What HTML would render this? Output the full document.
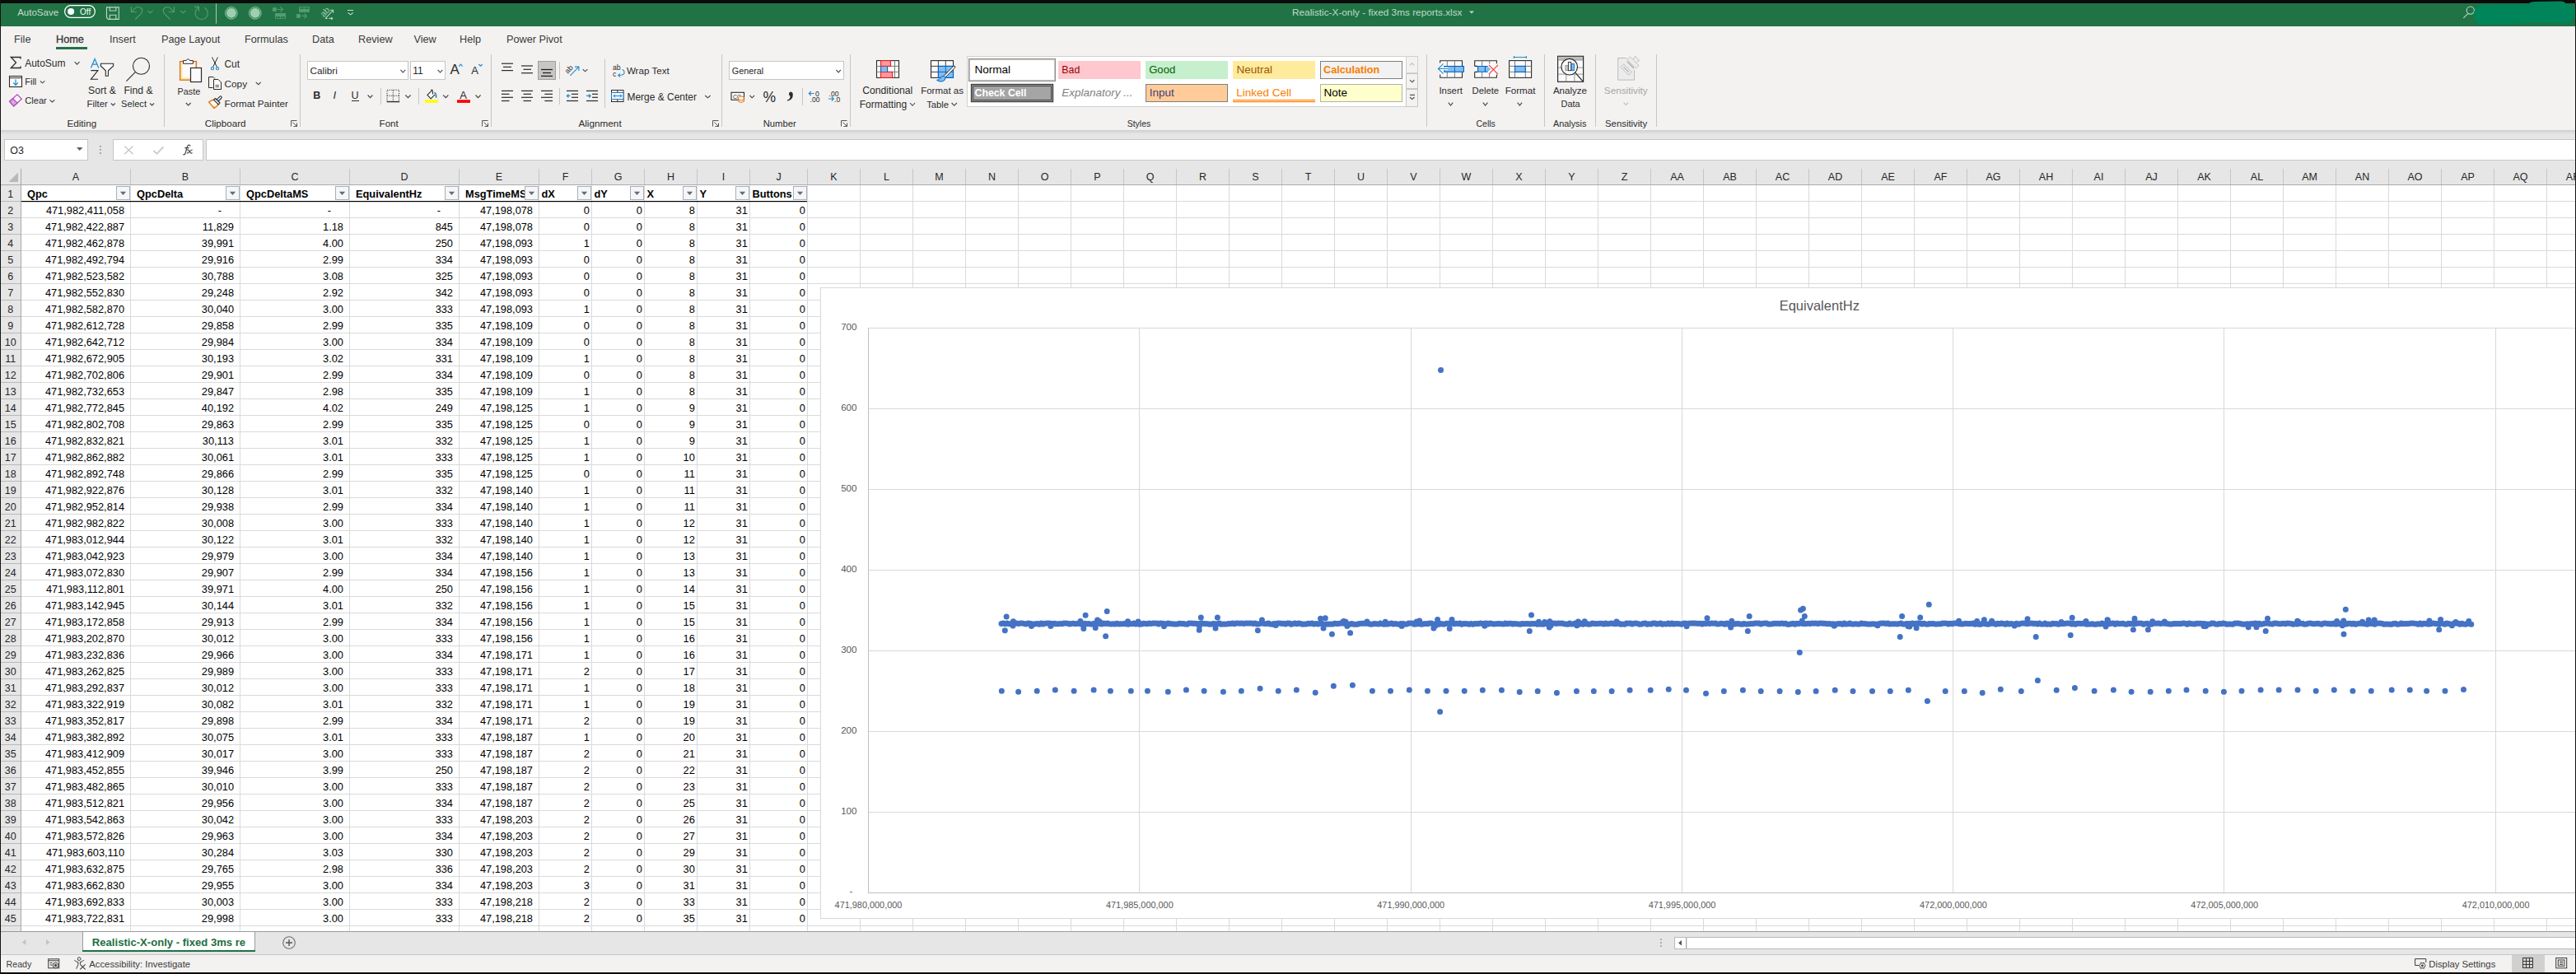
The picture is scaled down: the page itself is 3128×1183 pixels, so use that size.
<!DOCTYPE html>
<html><head><meta charset="utf-8"><style>
html,body{margin:0;padding:0;background:#fff;overflow:hidden;}
body{width:3128px;height:1183px;position:relative;}
svg{position:absolute;left:0;top:0;display:block;}
text{font-family:"Liberation Sans",sans-serif;white-space:pre;}
</style></head><body>
<svg width="3128" height="1183" viewBox="0 0 3128 1183" shape-rendering="auto">
<rect x="0" y="0" width="3128" height="1183" fill="#f3f2f1" />
<rect x="0" y="0" width="3128" height="32" fill="#217346" />
<rect x="0" y="0" width="3128" height="4" fill="#0a0a0a" />
<text x="21.2" y="18.7" font-size="11.5" fill="#c3dccb" text-anchor="start" font-weight="normal" font-style="normal" >AutoSave</text>
<rect x="78.6" y="6.6" width="36.8" height="14.8" rx="7.4" fill="none" stroke="#ffffff" stroke-width="1.2"/>
<circle cx="86.1" cy="14" r="4" fill="#ffffff"/>
<text x="97" y="18" font-size="10" fill="#ffffff" text-anchor="start" font-weight="normal" font-style="normal" >Off</text>
<path d="M129.5 8.9H144.3V23.4H131.5L129.5 21.4Z" fill="none" stroke="#bfd8c8" stroke-width="1.1"/><path d="M133.3 9V13H140.8V9 M133.3 23.3V18.3H140.8V23.3" fill="none" stroke="#bfd8c8" stroke-width="1.1"/>
<path d="M159.4 8.1V14.5H165.9" fill="none" stroke="#549d71" stroke-width="1.1"/><path d="M160.2 13.6L164.5 9.6Q167 7.9 170 9Q173 10.5 172.6 13.5Q172.3 15.5 170.5 17.3L164.3 23.5" fill="none" stroke="#549d71" stroke-width="1.1"/>
<path d="M179.3 13L182.4 15.7L185.4 13" fill="none" stroke="#549d71" stroke-width="1.1"/>
<g transform="translate(370.9 0) scale(-1 1)"><path d="M159.4 8.1V14.5H165.9" fill="none" stroke="#549d71" stroke-width="1.1"/><path d="M160.2 13.6L164.5 9.6Q167 7.9 170 9Q173 10.5 172.6 13.5Q172.3 15.5 170.5 17.3L164.3 23.5" fill="none" stroke="#549d71" stroke-width="1.1"/></g>
<path d="M219.2 13L222.3 15.7L225.3 13" fill="none" stroke="#549d71" stroke-width="1.1"/>
<path d="M236 8.4H241.5V13.7" fill="none" stroke="#549d71" stroke-width="1.1"/><path d="M241.2 9.2A7.6 7.6 0 1 0 248.3 9.3" fill="none" stroke="#549d71" stroke-width="1.1"/>
<rect x="262" y="4.3" width="1" height="24.3" fill="#a9cbb6" />
<circle cx="280.9" cy="15.8" r="7.3" fill="none" stroke="#a9d2b8" stroke-width="0.9"/><circle cx="280.9" cy="15.8" r="6" fill="#9ecfb0"/>
<circle cx="309.8" cy="15.8" r="7.3" fill="none" stroke="#a9d2b8" stroke-width="0.9"/><circle cx="309.8" cy="15.8" r="6" fill="#9ecfb0"/>
<rect x="331" y="9.1" width="4.9" height="4.8" fill="#529c6f"/><path d="M337.2 11.5H343.4 M340.4 8.3L343.6 11.5L340.4 14.7" fill="none" stroke="#529c6f" stroke-width="1.1"/><rect x="334" y="16" width="13" height="6.8" fill="#529c6f"/><rect x="335" y="20.2" width="5" height="1.7" fill="#217346"/><rect x="341" y="20.2" width="4.9" height="1.7" fill="#217346"/>
<rect x="363" y="8.1" width="12.8" height="6.8" fill="#529c6f"/><rect x="364.1" y="9.1" width="4.7" height="1.7" fill="#217346"/><rect x="369.8" y="9.1" width="4.9" height="1.7" fill="#217346"/><rect x="360" y="17" width="4.9" height="4.9" fill="#529c6f"/><path d="M366.2 19.4H372.4 M369.2 16.3L372.5 19.4L369.2 22.6" fill="none" stroke="#529c6f" stroke-width="1.1"/>
<text x="388.5" y="19.5" font-size="10.5" fill="#9fcdb0" text-anchor="start" font-weight="normal" font-style="normal" transform="rotate(-48 393 15)">ab</text>
<path d="M395.2 22.4L404.4 12.3 M401 12.3H404.6V15.7 M394.8 22.4H397.5 M399.3 22.4H403.6 M402.2 21L403.8 22.4L402.2 23.8" fill="none" stroke="#a9d3b9" stroke-width="1.1"/>
<path d="M421.9 12.5H429 M422.6 15.3L425.7 17.9L428.8 15.3" fill="none" stroke="#c5e0cf" stroke-width="1.1"/>
<text x="1569" y="19" font-size="11.8" fill="#bddcc8" text-anchor="start" font-weight="normal" font-style="normal" >Realistic-X-only - fixed 3ms reports.xlsx</text>
<path d="M1784 13.5h6l-3 3z" fill="#bddcc8"/>
<g fill="none" stroke="#bcd9c6" stroke-width="1.1"><circle cx="2999.8" cy="12.6" r="4.6"/><path d="M2996.7 16.6L2991.3 21.8"/></g>
<path d="M3004 17.5Q3004 5.7 3016 5.7L3070 5.2Q3072 2 3078 2L3110 1.6Q3114 2 3116 4.2Q3127 5.2 3127 17Q3127 28 3114 28.2Q3105 28.5 3098 27.6Q3080 27 3060 28.5L3016 29.8Q3004 29.8 3004 17.5Z" fill="#00845a"/>
<text x="17" y="51.8" font-size="12.7" fill="#3a3a3a" text-anchor="start" font-weight="normal" font-style="normal" >File</text>
<text x="68" y="51.8" font-size="12.7" fill="#333" text-anchor="start" font-weight="normal" font-style="normal" stroke="#333" stroke-width="0.3">Home</text>
<text x="133" y="51.8" font-size="12.7" fill="#3a3a3a" text-anchor="start" font-weight="normal" font-style="normal" >Insert</text>
<text x="196" y="51.8" font-size="12.7" fill="#3a3a3a" text-anchor="start" font-weight="normal" font-style="normal" >Page Layout</text>
<text x="297" y="51.8" font-size="12.7" fill="#3a3a3a" text-anchor="start" font-weight="normal" font-style="normal" >Formulas</text>
<text x="379" y="51.8" font-size="12.7" fill="#3a3a3a" text-anchor="start" font-weight="normal" font-style="normal" >Data</text>
<text x="435" y="51.8" font-size="12.7" fill="#3a3a3a" text-anchor="start" font-weight="normal" font-style="normal" >Review</text>
<text x="502.5" y="51.8" font-size="12.7" fill="#3a3a3a" text-anchor="start" font-weight="normal" font-style="normal" >View</text>
<text x="558" y="51.8" font-size="12.7" fill="#3a3a3a" text-anchor="start" font-weight="normal" font-style="normal" >Help</text>
<text x="615" y="51.8" font-size="12.7" fill="#3a3a3a" text-anchor="start" font-weight="normal" font-style="normal" >Power Pivot</text>
<rect x="68" y="57" width="38" height="3" fill="#217346" />
<rect x="0" y="0" width="1" height="1183" fill="#3c3c3c" />
<rect x="3127" y="0" width="1" height="1183" fill="#3c3c3c" />
<path d="M25 71.5V69.5H13.3L19.5 76L13.3 82.5H25V80.5" fill="none" stroke="#2b2b2b" stroke-width="1.3"/>
<text x="30.2" y="81" font-size="11.99" fill="#2b2b2b" text-anchor="start" font-weight="normal" font-style="normal" >AutoSum</text>
<path d="M90.7 75.2L93.6 78.2L96.5 75.2" fill="none" stroke="#444" stroke-width="1.1"/>
<rect x="11.5" y="92.5" width="15" height="13" fill="#fafafa" stroke="#2b2b2b" stroke-width="1.1"/><path d="M12 94.7H26" stroke="#2b2b2b" stroke-width="1"/>
<path d="M19 96.5V103 M16.3 100.5L19 103.3L21.7 100.5" fill="none" stroke="#1e8bcd" stroke-width="1.2"/>
<text x="30.2" y="103.4" font-size="11.04" fill="#2b2b2b" text-anchor="start" font-weight="normal" font-style="normal" >Fill</text>
<path d="M48.8 98.3L51.55 100.8L54.3 98.3" fill="none" stroke="#444" stroke-width="1.1"/>
<path d="M11.6 123.3L20.9 114.9L26.3 120.2L16.7 128.8Z" fill="#fbfbfb" stroke="#b146c2" stroke-width="1.2"/><path d="M11.6 123.3L15.6 119.7L21 125.2L16.7 128.8Z" fill="#d9a6e0" stroke="#b146c2" stroke-width="1.2"/>
<text x="30.2" y="126.4" font-size="11.13" fill="#2b2b2b" text-anchor="start" font-weight="normal" font-style="normal" >Clear</text>
<path d="M60.4 121.4L63.400000000000006 124L66.4 121.4" fill="none" stroke="#444" stroke-width="1.1"/>
<path d="M110.4 82.4L115.1 71.6L119.8 82.4 M112.2 78.1H118" fill="none" stroke="#1e8bcd" stroke-width="1.25"/>
<path d="M110.3 85.6H118.9L110.4 96.3H119" fill="none" stroke="#2b2b2b" stroke-width="1.1"/>
<path d="M122.4 77.3H137.6V80.2L131.4 85.8V92.3H128.3V85.8L122.4 80.2Z" fill="#fbfbfb" stroke="#2b2b2b" stroke-width="1.1"/>
<text x="107.1" y="114.3" font-size="12.13" fill="#2b2b2b" text-anchor="start" font-weight="normal" font-style="normal" >Sort &amp;</text>
<text x="105.6" y="130.4" font-size="11.34" fill="#2b2b2b" text-anchor="start" font-weight="normal" font-style="normal" >Filter</text>
<path d="M134.8 125.5L137.3 128L139.8 125.5" fill="none" stroke="#444" stroke-width="1.1"/>
<circle cx="171.5" cy="80.3" r="10" fill="none" stroke="#2b2b2b" stroke-width="1.1"/><path d="M164.3 87.7L153.4 98.7" stroke="#2b2b2b" stroke-width="1.1"/>
<text x="150.4" y="114.3" font-size="12.18" fill="#2b2b2b" text-anchor="start" font-weight="normal" font-style="normal" >Find &amp;</text>
<text x="147.1" y="130.4" font-size="11.12" fill="#2b2b2b" text-anchor="start" font-weight="normal" font-style="normal" >Select</text>
<path d="M182 125.5L184.55 128L187.1 125.5" fill="none" stroke="#444" stroke-width="1.1"/>
<text x="81.5" y="153.5" font-size="11.68" fill="#2b2b2b" text-anchor="start" font-weight="normal" font-style="normal" >Editing</text>
<rect x="199" y="66" width="1" height="88" fill="#c8c6c4" />
<rect x="218.6" y="74.6" width="19.8" height="22.6" fill="#fbe3a6" stroke="#d9730d" stroke-width="1.3"/><rect x="221.3" y="76.2" width="15.3" height="18.3" fill="#fbfbfb"/>
<path d="M222.5 77.3V73.6H226.3Q228.4 69.5 230.5 73.6H234.4V77.3Z" fill="#fbfbfb" stroke="#2b2b2b" stroke-width="1"/>
<rect x="231.5" y="82.5" width="13" height="17" fill="#fbfbfb" stroke="#2b2b2b" stroke-width="1.2"/>
<text x="215.6" y="114.5" font-size="10.83" fill="#2b2b2b" text-anchor="start" font-weight="normal" font-style="normal" >Paste</text>
<path d="M225.8 125L228.7 128L231.6 125" fill="none" stroke="#444" stroke-width="1.1"/>
<path d="M257.5 69.5L263.5 81.5 M264.5 69.5L258.5 81.5" stroke="#2b2b2b" stroke-width="1"/><circle cx="258" cy="83.2" r="1.6" fill="none" stroke="#1e8bcd" stroke-width="1.1"/><circle cx="264" cy="83.2" r="1.6" fill="none" stroke="#1e8bcd" stroke-width="1.1"/>
<text x="272.5" y="81.6" font-size="11.95" fill="#2b2b2b" text-anchor="start" font-weight="normal" font-style="normal" >Cut</text>
<path d="M258.5 106.5H253.5V93.5H259L261 95.5" fill="none" stroke="#2b2b2b" stroke-width="1"/><path d="M259.5 96.5H265L268.5 100V108.5H259.5Z" fill="#fbfbfb" stroke="#2b2b2b" stroke-width="1"/><path d="M261.5 103.5H266 M261.5 105.5H266" stroke="#2b2b2b" stroke-width="0.8"/>
<text x="272.5" y="105.8" font-size="11.82" fill="#2b2b2b" text-anchor="start" font-weight="normal" font-style="normal" >Copy</text>
<path d="M310.7 99.8L313.7 102.7L316.7 99.8" fill="none" stroke="#444" stroke-width="1.1"/>
<path d="M253.6 124Q257 121.6 259.9 121L265.5 126.8Q263 129.4 260.1 131.5Z" fill="#ffffff" stroke="#e3700f" stroke-width="1.3" stroke-linejoin="round"/><path d="M256.9 127.2L261.6 128.7L259.9 130.3Z" fill="#f6d57a"/>
<path d="M262.9 121.4L266.8 117.4Q268 116.3 268.9 117.3Q269.6 118.4 268.5 119.5L264.5 123.5" fill="#ffffff" stroke="#2b2b2b" stroke-width="1.1"/><path d="M259.7 121.3L261.5 119.5L267 125L265.2 126.8Z" fill="#ffffff" stroke="#2b2b2b" stroke-width="1.1" stroke-linejoin="round"/>
<text x="272.5" y="129.6" font-size="11.7" fill="#2b2b2b" text-anchor="start" font-weight="normal" font-style="normal" >Format Painter</text>
<text x="248.8" y="153.5" font-size="11.63" fill="#2b2b2b" text-anchor="start" font-weight="normal" font-style="normal" >Clipboard</text>
<path d="M353.5 153.5V146.5H360.5 M355.5 148.5L360.5 153.5 M360.5 149.5V153.5H356.5" fill="none" stroke="#555" stroke-width="1"/>
<rect x="364" y="66" width="1" height="88" fill="#c8c6c4" />
<rect x="373.5" y="74.5" width="122" height="22" fill="#fff" stroke="#c8c6c4"/>
<text x="376.6" y="89.7" font-size="11.71" fill="#262626" text-anchor="start" font-weight="normal" font-style="normal" >Calibri</text>
<path d="M486.4 84.8L489.29999999999995 88L492.2 84.8" fill="none" stroke="#444" stroke-width="1.1"/>
<rect x="498.5" y="74.5" width="42" height="22" fill="#fff" stroke="#c8c6c4"/>
<text x="501.3" y="89.7" font-size="12" fill="#262626" text-anchor="start" font-weight="normal" font-style="normal" >11</text>
<path d="M531.6 84.8L534.5 88L537.4 84.8" fill="none" stroke="#444" stroke-width="1.1"/>
<text x="546.5" y="89.7" font-size="17" fill="#2b2b2b" text-anchor="start" font-weight="normal" font-style="normal" >A</text>
<path d="M557.2 80.6L559.45 78.1L561.7 80.6" fill="none" stroke="#1e8bcd" stroke-width="1.1"/>
<text x="572.3" y="89.7" font-size="13" fill="#2b2b2b" text-anchor="start" font-weight="normal" font-style="normal" >A</text>
<path d="M581.3 78L583.55 80.2L585.8 78" fill="none" stroke="#1e8bcd" stroke-width="1.1"/>
<text x="380.3" y="120.4" font-size="12.5" fill="#2b2b2b" text-anchor="start" font-weight="bold" font-style="normal" >B</text>
<text x="404.5" y="120.4" font-size="13" fill="#2b2b2b" text-anchor="start" font-weight="normal" font-style="italic" font-family="Liberation Serif">I</text>
<text x="426.5" y="120.4" font-size="12.5" fill="#2b2b2b" text-anchor="start" font-weight="normal" font-style="normal" >U</text>
<rect x="427" y="122" width="9" height="1" fill="#2b2b2b" />
<path d="M446.6 115.5L449.5 118.6L452.4 115.5" fill="none" stroke="#444" stroke-width="1.1"/>
<rect x="462" y="107" width="1" height="20" fill="#c8c6c4" />
<rect x="470" y="109.3" width="14.5" height="14" fill="none" stroke="#2b2b2b" stroke-width="0.9" stroke-dasharray="1.3 1.3"/><path d="M477.3 109.5V123 M470 116.3H484.5" stroke="#2b2b2b" stroke-width="0.9" stroke-dasharray="1.3 1.3"/><path d="M469.6 123.6H485.2" stroke="#2b2b2b" stroke-width="1.3"/>
<path d="M492.4 115.5L495.5 118.6L498.6 115.5" fill="none" stroke="#444" stroke-width="1.1"/>
<rect x="508" y="107" width="1" height="20" fill="#c8c6c4" />
<path d="M525.4 114.5V110.6Q525.2 109 524.3 109.1Q523.5 109.3 523.5 110.8L518.9 115.4L523.2 119.8L528 114.8" fill="#fbfbfb" stroke="#2b2b2b" stroke-width="1.1" stroke-linejoin="round"/><path d="M527.8 112.6Q529.8 113.6 529.6 118.3" fill="none" stroke="#1e78c8" stroke-width="1.5" stroke-linecap="round"/>
<rect x="516" y="121.2" width="16" height="3.7" fill="#ffff00" />
<path d="M538.2 115.5L541.3 118.6L544.4 115.5" fill="none" stroke="#444" stroke-width="1.1"/>
<text x="558.2" y="120.4" font-size="13" fill="#2b2b2b" text-anchor="start" font-weight="normal" font-style="normal" >A</text>
<rect x="555" y="121.2" width="16" height="3.7" fill="#ff0000" />
<path d="M577.5 115.5L580.55 118.6L583.6 115.5" fill="none" stroke="#444" stroke-width="1.1"/>
<text x="460.6" y="153.5" font-size="11.54" fill="#2b2b2b" text-anchor="start" font-weight="normal" font-style="normal" >Font</text>
<path d="M585.5 153.5V146.5H592.5 M587.5 148.5L592.5 153.5 M592.5 149.5V153.5H588.5" fill="none" stroke="#555" stroke-width="1"/>
<rect x="596" y="66" width="1" height="88" fill="#c8c6c4" />
<rect x="609" y="76.60000000000001" width="14" height="1.2" fill="#2b2b2b" />
<rect x="611" y="80.80000000000001" width="10" height="1.2" fill="#2b2b2b" />
<rect x="609" y="85.0" width="14" height="1.2" fill="#2b2b2b" />
<rect x="633" y="79.4" width="14" height="1.2" fill="#2b2b2b" />
<rect x="635.5" y="83.7" width="9.5" height="1.2" fill="#2b2b2b" />
<rect x="633" y="88.10000000000001" width="14" height="1.2" fill="#2b2b2b" />
<rect x="653.5" y="74.5" width="21" height="22" fill="#c8c6c4" stroke="#a19f9d"/>
<rect x="657" y="83.9" width="14" height="1.2" fill="#1b1b1b" />
<rect x="659" y="87.9" width="10" height="1.2" fill="#1b1b1b" />
<rect x="657" y="91.80000000000001" width="14" height="1.2" fill="#1b1b1b" />
<rect x="679" y="75" width="1" height="21" fill="#c8c6c4" />
<text x="686" y="88" font-size="9" fill="#2b2b2b" text-anchor="start" font-weight="normal" font-style="normal" transform="rotate(-48 690 85)">ab</text>
<path d="M692.3 91.8L702.9 81.1 M698 81.1H702.9V86" fill="none" stroke="#1e8bcd" stroke-width="1.1"/>
<path d="M707.7 84.2L710.55 86.8L713.4 84.2" fill="none" stroke="#444" stroke-width="1.1"/>
<rect x="609" y="109.80000000000001" width="14" height="1.2" fill="#2b2b2b" />
<rect x="609" y="113.7" width="9.5" height="1.2" fill="#2b2b2b" />
<rect x="609" y="117.7" width="14" height="1.2" fill="#2b2b2b" />
<rect x="609" y="121.9" width="9.5" height="1.2" fill="#2b2b2b" />
<rect x="633" y="109.80000000000001" width="14" height="1.2" fill="#2b2b2b" />
<rect x="635.5" y="113.7" width="9.5" height="1.2" fill="#2b2b2b" />
<rect x="633" y="117.7" width="14" height="1.2" fill="#2b2b2b" />
<rect x="635.5" y="121.9" width="9.5" height="1.2" fill="#2b2b2b" />
<rect x="657" y="109.80000000000001" width="14" height="1.2" fill="#2b2b2b" />
<rect x="661.3" y="113.7" width="9.700000000000045" height="1.2" fill="#2b2b2b" />
<rect x="657" y="117.7" width="14" height="1.2" fill="#2b2b2b" />
<rect x="661.3" y="121.9" width="9.700000000000045" height="1.2" fill="#2b2b2b" />
<rect x="679" y="107" width="1" height="20" fill="#c8c6c4" />
<rect x="688" y="109.80000000000001" width="14" height="1.2" fill="#2b2b2b" />
<rect x="688" y="121.9" width="14" height="1.2" fill="#2b2b2b" />
<rect x="694" y="113.7" width="8" height="1.2" fill="#2b2b2b" />
<rect x="694" y="117.7" width="8" height="1.2" fill="#2b2b2b" />
<path d="M692.5 116.4H688.5 M690.5 114.3L688.3 116.4L690.5 118.5" fill="none" stroke="#1e8bcd" stroke-width="1.1"/>
<rect x="712" y="109.80000000000001" width="14" height="1.2" fill="#2b2b2b" />
<rect x="712" y="121.9" width="14" height="1.2" fill="#2b2b2b" />
<rect x="719" y="113.7" width="7" height="1.2" fill="#2b2b2b" />
<rect x="719" y="117.7" width="7" height="1.2" fill="#2b2b2b" />
<path d="M712 116.4H717 M715 114.3L717.2 116.4L715 118.5" fill="none" stroke="#1e8bcd" stroke-width="1.1"/>
<rect x="734" y="72" width="1" height="59" fill="#c8c6c4" />
<text x="744" y="85" font-size="8.7" fill="#2b2b2b" text-anchor="start" font-weight="normal" font-style="normal" >ab</text>
<text x="744" y="93" font-size="8.7" fill="#2b2b2b" text-anchor="start" font-weight="normal" font-style="normal" >c</text>
<path d="M755.5 84.5Q758.8 85.5 757.8 89.5Q756.5 91.5 751 91.5 M753 89.3L750.7 91.5L753 93.7" fill="none" stroke="#1e8bcd" stroke-width="1.1"/>
<text x="760.9" y="89.6" font-size="11.6" fill="#2b2b2b" text-anchor="start" font-weight="normal" font-style="normal" >Wrap Text</text>
<rect x="742.5" y="109.5" width="14.5" height="14" fill="#fbfbfb" stroke="#2b2b2b" stroke-width="1"/><path d="M749.8 109.5V123.5" stroke="#2b2b2b" stroke-width="1"/><rect x="742.5" y="112.5" width="14.5" height="8" fill="#fbfbfb" stroke="#1e78c8" stroke-width="1"/><path d="M745 116.5H755 M747 114.5L745 116.5L747 118.5 M753 114.5L755 116.5L753 118.5" fill="none" stroke="#1e78c8" stroke-width="1"/>
<text x="761.5" y="121.7" font-size="11.96" fill="#2b2b2b" text-anchor="start" font-weight="normal" font-style="normal" >Merge &amp; Center</text>
<path d="M856.2 116L859.4000000000001 118.8L862.6 116" fill="none" stroke="#444" stroke-width="1.1"/>
<text x="702.4" y="153.7" font-size="11.76" fill="#2b2b2b" text-anchor="start" font-weight="normal" font-style="normal" >Alignment</text>
<path d="M865.5 153.5V146.5H872.5 M867.5 148.5L872.5 153.5 M872.5 149.5V153.5H868.5" fill="none" stroke="#555" stroke-width="1"/>
<rect x="876" y="66" width="1" height="88" fill="#c8c6c4" />
<rect x="885.5" y="74.5" width="139" height="22" fill="#fff" stroke="#c8c6c4"/>
<text x="888.8" y="89.6" font-size="10.79" fill="#262626" text-anchor="start" font-weight="normal" font-style="normal" >General</text>
<path d="M1015.3 84.8L1018.0999999999999 87.9L1020.9 84.8" fill="none" stroke="#444" stroke-width="1.1"/>
<rect x="888" y="112.3" width="15.5" height="9" fill="#fbfbfb" stroke="#2b2b2b" stroke-width="1.1"/><text x="890" y="120" font-size="7" fill="#2b2b2b">CC</text><ellipse cx="900" cy="118.5" rx="3.3" ry="1.5" fill="#fbfbfb" stroke="#e3700f"/><path d="M896.7 118.5V123.3Q900 125.5 903.3 123.3V118.5 M896.7 120.9Q900 123 903.3 120.9" fill="#fbfbfb" stroke="#e3700f"/>
<path d="M910.5 116L913.25 118.8L916 116" fill="none" stroke="#444" stroke-width="1.1"/>
<text x="926.6" y="123.7" font-size="17.5" fill="#2b2b2b" text-anchor="start" font-weight="normal" font-style="normal" >%</text>
<path d="M959.6 111.6A3.3 3.3 0 1 1 959.4 118.2Q960 116 958 115.2A3.3 3.3 0 0 1 959.6 111.6Z M962.6 115Q963.4 120.5 956.2 122.8L955.8 121.8Q960.2 119.8 959.6 116.5Z" fill="#2b2b2b"/>
<rect x="974" y="107" width="1" height="21" fill="#c8c6c4" />
<path d="M988.5 113.5H982.3 M984.8 111L982.3 113.5L984.8 116" fill="none" stroke="#1e8bcd" stroke-width="1.1"/><path d="M1006 120H1012.3 M1009.8 117.5L1012.3 120L1009.8 122.5" fill="none" stroke="#1e8bcd" stroke-width="1.1"/>
<text x="990" y="116.5" font-size="8.6" fill="#2b2b2b" text-anchor="start" font-weight="normal" font-style="normal" >0</text>
<text x="983.5" y="123.8" font-size="8.6" fill="#2b2b2b" text-anchor="start" font-weight="normal" font-style="normal" >.00</text>
<text x="1006.5" y="116.5" font-size="8.6" fill="#2b2b2b" text-anchor="start" font-weight="normal" font-style="normal" >.00</text>
<text x="1013" y="123.8" font-size="8.6" fill="#2b2b2b" text-anchor="start" font-weight="normal" font-style="normal" >.0</text>
<text x="926.7" y="153.7" font-size="11.27" fill="#2b2b2b" text-anchor="start" font-weight="normal" font-style="normal" >Number</text>
<path d="M1021.5 153.5V146.5H1028.5 M1023.5 148.5L1028.5 153.5 M1028.5 149.5V153.5H1024.5" fill="none" stroke="#555" stroke-width="1"/>
<rect x="1032" y="66" width="1" height="88" fill="#c8c6c4" />
<rect x="1064.5" y="73.6" width="27" height="20.8" fill="#fbfbfb" stroke="#2b2b2b" stroke-width="1.1"/><path d="M1086.5 73.6V94.4 M1064.5 80.4H1091.5 M1064.5 87.4H1091.5" stroke="#6e6e6e" stroke-width="0.9"/>
<rect x="1069.6" y="73.6" width="11.8" height="6.8" fill="#ff9aa2" stroke="#e0201b" stroke-width="1.1"/><rect x="1069.6" y="87.4" width="13.9" height="7" fill="#ff9aa2" stroke="#e0201b" stroke-width="1.1"/><rect x="1069.6" y="80.9" width="8" height="6" fill="#84bdee"/><path d="M1069.6 80.4V87.4 M1077.6 80.4V87.4" stroke="#0063c4" stroke-width="1.1"/>
<text x="1047.2" y="114.4" font-size="12.21" fill="#2b2b2b" text-anchor="start" font-weight="normal" font-style="normal" >Conditional</text>
<text x="1043.7" y="130.7" font-size="12.05" fill="#2b2b2b" text-anchor="start" font-weight="normal" font-style="normal" >Formatting</text>
<path d="M1105 125L1108.0 128.3L1111 125" fill="none" stroke="#444" stroke-width="1.1"/>
<rect x="1130.5" y="73.6" width="27" height="20.8" fill="#fbfbfb" stroke="#2b2b2b" stroke-width="1.1"/><path d="M1139.4 73.6V94.4 M1148.3 73.6V80.4 M1130.5 80.4H1139.4 M1130.5 87.4H1139.4" stroke="#2b2b2b" stroke-width="0.9"/>
<path d="M1139.4 80.4H1157.5V94.4H1139.4Z" fill="#84bdee" stroke="#0063c4" stroke-width="1.1"/><path d="M1148.3 80.4V94.4 M1139.4 87.4H1157.5" stroke="#0063c4" stroke-width="0.9"/>
<path d="M1146.2 92.2L1157.6 80.6Q1159.5 79.3 1160 81Q1159.8 82 1158.6 83.2L1147.8 94Z" fill="#ffffff" stroke="#2b2b2b" stroke-width="1"/><path d="M1146.4 92.4Q1143 92 1141.6 95Q1140.5 97 1137.6 97.4Q1141 99.8 1144.5 98.8Q1148 97.8 1148.2 94.2Z" fill="#84bdee" stroke="#0063c4" stroke-width="1"/>
<text x="1118.2" y="114.4" font-size="11.51" fill="#2b2b2b" text-anchor="start" font-weight="normal" font-style="normal" >Format as</text>
<text x="1125.2" y="130.7" font-size="11.21" fill="#2b2b2b" text-anchor="start" font-weight="normal" font-style="normal" >Table</text>
<path d="M1155.6 125L1158.6999999999998 128.3L1161.8 125" fill="none" stroke="#444" stroke-width="1.1"/>
<rect x="1174.5" y="68.5" width="533" height="61" fill="#fff" stroke="#d2d0ce"/>
<rect x="1176.5" y="71.5" width="105" height="27" fill="#fff" stroke="#8a8886" stroke-width="1"/><rect x="1177.5" y="72.5" width="103" height="25" fill="none" stroke="#c8c6c4" stroke-width="1.2"/>
<text x="1183.5" y="89" font-size="13.5" fill="#000" text-anchor="start" font-weight="normal" font-style="normal" >Normal</text>
<rect x="1285" y="74" width="100" height="22" fill="#ffc7ce" />
<text x="1289.3" y="89" font-size="12.36" fill="#9c0006" text-anchor="start" font-weight="normal" font-style="normal" >Bad</text>
<rect x="1391" y="74" width="100" height="22" fill="#c6efce" />
<text x="1395.2" y="89" font-size="13.08" fill="#006100" text-anchor="start" font-weight="normal" font-style="normal" >Good</text>
<rect x="1497" y="74" width="100" height="22" fill="#ffeb9c" />
<text x="1501.6" y="89" font-size="13.5" fill="#9c5700" text-anchor="start" font-weight="normal" font-style="normal" >Neutral</text>
<rect x="1603.5" y="74.5" width="99" height="21" fill="#f2f2f2" stroke="#7f7f7f"/>
<text x="1607" y="89" font-size="12.65" fill="#fa7d00" text-anchor="start" font-weight="bold" font-style="normal" >Calculation</text>
<rect x="1179.5" y="102.5" width="99" height="21" fill="#a5a5a5" stroke="#3f3f3f" stroke-width="1.4"/><rect x="1181.6" y="104.6" width="94.8" height="16.8" fill="none" stroke="#3f3f3f" stroke-width="0.9"/>
<text x="1183.5" y="116.6" font-size="12.32" fill="#ffffff" text-anchor="start" font-weight="bold" font-style="normal" >Check Cell</text>
<text x="1289.3" y="116.6" font-size="13.5" fill="#7f7f7f" text-anchor="start" font-weight="normal" font-style="italic" >Explanatory ...</text>
<rect x="1391.5" y="102.5" width="99" height="21" fill="#ffcc99" stroke="#7f7f7f"/>
<text x="1395.7" y="116.6" font-size="13.5" fill="#3f3f76" text-anchor="start" font-weight="normal" font-style="normal" >Input</text>
<text x="1501.2" y="116.6" font-size="13.5" fill="#fa7d00" text-anchor="start" font-weight="normal" font-style="normal" >Linked Cell</text>
<rect x="1497" y="121" width="100" height="1.2" fill="#ff8001" />
<rect x="1497" y="123" width="100" height="1.2" fill="#ff8001" />
<rect x="1603.5" y="102.5" width="99" height="21" fill="#ffffcc" stroke="#b2b2b2"/>
<text x="1607.6" y="116.6" font-size="13.5" fill="#000" text-anchor="start" font-weight="normal" font-style="normal" >Note</text>
<rect x="1707.5" y="68.5" width="14" height="20" fill="#f3f2f1" stroke="#d2d0ce"/><rect x="1707.5" y="89.5" width="14" height="18" fill="#f3f2f1" stroke="#c8c6c4"/><rect x="1707.5" y="108.5" width="14" height="21" fill="#f3f2f1" stroke="#c8c6c4"/>
<path d="M1712 79.3L1714.75 76.8L1717.5 79.3" fill="none" stroke="#c0c0c0" stroke-width="1.1"/>
<path d="M1712 97.2L1714.75 99.8L1717.5 97.2" fill="none" stroke="#444" stroke-width="1.1"/>
<rect x="1712" y="114.8" width="6" height="1.1" fill="#444" />
<path d="M1712 118L1714.75 120.6L1717.5 118" fill="none" stroke="#444" stroke-width="1.1"/>
<text x="1368.7" y="153.7" font-size="10.5" fill="#2b2b2b" text-anchor="start" font-weight="normal" font-style="normal" >Styles</text>
<rect x="1732" y="66" width="1" height="88" fill="#c8c6c4" />
<rect x="1748.6" y="73.6" width="27" height="20.8" fill="#fbfbfb"/><path d="M1748.7 76.5V73.7H1775.5V94.3H1748.7V90.5" fill="none" stroke="#2b2b2b" stroke-width="1.1"/><path d="M1757.3 73.7V94.3 M1766.4 73.7V94.3" stroke="#6e6e6e" stroke-width="0.9"/>
<rect x="1753.8" y="80.5" width="23.6" height="6.8" fill="#84bdee" stroke="#0063c4" stroke-width="1.1"/><path d="M1766.4 80.5V87.3" stroke="#0063c4" stroke-width="0.9"/><rect x="1749" y="81.8" width="9.5" height="3.4" fill="#fbfbfb"/>
<path d="M1758.8 83.5H1746.6 M1752.6 77.3L1746.4 83.5L1752.6 89.7" fill="none" stroke="#1e8bcd" stroke-width="1.1"/>
<text x="1747.4" y="114.3" font-size="11.4" fill="#2b2b2b" text-anchor="start" font-weight="normal" font-style="normal" >Insert</text>
<path d="M1758.8 124.7L1761.5 128.2L1764.2 124.7" fill="none" stroke="#444" stroke-width="1.1"/>
<rect x="1790.6" y="73.6" width="27" height="20.8" fill="#fbfbfb"/><path d="M1790.7 80.4V73.7H1817.4V77.3 M1817.4 90.4V94.3H1790.7V87.4 M1790.7 80.4H1794.3 M1790.7 87.4H1794.3" fill="none" stroke="#2b2b2b" stroke-width="1.1"/><path d="M1799.6 73.7V80.4 M1799.6 87.4V94.3 M1808.7 73.7V77.5 M1808.7 90V94.3" stroke="#6e6e6e" stroke-width="0.9"/>
<path d="M1794.6 80.5H1806.2L1810.6 83.9L1806.2 87.3H1794.6Z" fill="#84bdee"/><path d="M1806.6 80.5H1794.6V87.3H1806.6 M1803.4 80.5V87.3" fill="none" stroke="#0063c4" stroke-width="1.1"/><path d="M1807.9 79L1818.9 90 M1818.9 79L1807.9 90" stroke="#f04848" stroke-width="1.1"/>
<text x="1787.6" y="114.3" font-size="11.24" fill="#2b2b2b" text-anchor="start" font-weight="normal" font-style="normal" >Delete</text>
<path d="M1800.8 124.7L1803.6 128.2L1806.4 124.7" fill="none" stroke="#444" stroke-width="1.1"/>
<rect x="1832.6" y="73.6" width="27" height="20.8" fill="#fbfbfb" stroke="#2b2b2b" stroke-width="1.1"/><path d="M1839.5 73.7V94.3 M1852.3 73.7V94.3 M1832.6 80.4H1859.6 M1832.6 87.4H1859.6" stroke="#6e6e6e" stroke-width="0.9"/>
<rect x="1839.5" y="80.4" width="12.8" height="7" fill="#84bdee" stroke="#0063c4" stroke-width="1.1"/><path d="M1838.4 69.5H1853.4 M1838.4 68V71 M1853.4 68V71" stroke="#1e8bcd" stroke-width="1.1"/>
<text x="1827.7" y="114.3" font-size="11.62" fill="#2b2b2b" text-anchor="start" font-weight="normal" font-style="normal" >Format</text>
<path d="M1842.7 124.7L1845.4 128.2L1848.1 124.7" fill="none" stroke="#444" stroke-width="1.1"/>
<text x="1792.5" y="153.7" font-size="10.5" fill="#2b2b2b" text-anchor="start" font-weight="normal" font-style="normal" >Cells</text>
<rect x="1875" y="66" width="1" height="88" fill="#c8c6c4" />
<rect x="1891.6" y="68.3" width="31" height="31" fill="#fbfbfb" stroke="#2b2b2b" stroke-width="1.2"/><rect x="1892.2" y="68.9" width="29.8" height="3.9" fill="#bdbdbd"/>
<path d="M1892.2 73H1922 M1892.2 82.1H1922 M1892.2 90.1H1922 M1901.8 90.1V99 M1911.9 90.1V99" stroke="#8a8a8a" stroke-width="0.9"/>
<circle cx="1905.7" cy="81.2" r="9.8" fill="#fbfbfb" stroke="#2b2b2b" stroke-width="1.2"/><path d="M1912.7 88.2L1922.4 99.2" stroke="#2b2b2b" stroke-width="1.25"/>
<rect x="1900.9" y="79.4" width="3.3" height="6.3" fill="#c8c8c8" stroke="#8a8a8a" stroke-width="0.8"/><rect x="1904.4" y="75.4" width="3.3" height="10.3" fill="#ffffff" stroke="#2b2b2b" stroke-width="0.9"/><rect x="1908.2" y="77.4" width="3.3" height="8.3" fill="#84bdee" stroke="#0063c4" stroke-width="0.8"/>
<text x="1885.9" y="114.3" font-size="11.55" fill="#2b2b2b" text-anchor="start" font-weight="normal" font-style="normal" >Analyze</text>
<text x="1895.5" y="130.1" font-size="10.94" fill="#2b2b2b" text-anchor="start" font-weight="normal" font-style="normal" >Data</text>
<text x="1885.9" y="153.7" font-size="10.88" fill="#2b2b2b" text-anchor="start" font-weight="normal" font-style="normal" >Analysis</text>
<rect x="1937" y="66" width="1" height="88" fill="#c8c6c4" />
<rect x="1964.4" y="70.5" width="20.2" height="26.8" fill="#ececec" stroke="none"/><path d="M1975 70.5H1964.7V97.1H1984.5V85" fill="none" stroke="#b4b4b4" stroke-width="0.9"/>
<path d="M1967.9 81.5L1971.6 77.8L1981.5 87.5L1977.6 91.4Z" fill="#ececec" stroke="#b4b4b4" stroke-width="0.8"/><path d="M1971.3 81.2L1978 87.8" stroke="#b4b4b4" stroke-width="1.2"/>
<path d="M1975.7 72.5L1979.4 69L1990.1 79.4L1986.4 82.9Z" fill="#ececec" stroke="#b4b4b4" stroke-width="0.8"/><path d="M1975.8 74.7L1983.9 82.9" stroke="#b4b4b4" stroke-width="1.6"/><path d="M1983.3 72.1L1985.6 68.2L1990.7 73.5L1987.4 75.5" fill="#ececec" stroke="#b4b4b4" stroke-width="0.8"/>
<text x="1947.8" y="114.3" font-size="11.75" fill="#a6a6a6" text-anchor="start" font-weight="normal" font-style="normal" >Sensitivity</text>
<path d="M1971.6 124.7L1974.3 127.5L1977 124.7" fill="none" stroke="#bdbdbd" stroke-width="1.1"/>
<text x="1949" y="153.7" font-size="11.37" fill="#2b2b2b" text-anchor="start" font-weight="normal" font-style="normal" >Sensitivity</text>
<rect x="2011" y="66" width="1" height="88" fill="#c8c6c4" />
<rect x="0" y="158" width="3128" height="47" fill="#e6e6e6" />
<defs><linearGradient id="shd" x1="0" y1="0" x2="0" y2="1"><stop offset="0" stop-color="#cfcfcf"/><stop offset="1" stop-color="#e6e6e6"/></linearGradient></defs>
<rect x="0" y="158" width="3128" height="5" fill="url(#shd)" />
<rect x="5.5" y="169.5" width="101" height="25" fill="#fff" stroke="#c8c6c4"/>
<text x="12.3" y="187" font-size="12.4" fill="#262626" text-anchor="start" font-weight="normal" font-style="normal" >O3</text>
<path d="M93 179h7.5l-3.75 4z" fill="#605e5c"/>
<rect x="121" y="176.9" width="1.8" height="1.8" fill="#9a9a9a"/>
<rect x="121" y="181.0" width="1.8" height="1.8" fill="#9a9a9a"/>
<rect x="121" y="185.1" width="1.8" height="1.8" fill="#9a9a9a"/>
<rect x="137.5" y="169.5" width="109" height="25" fill="#fff" stroke="#c8c6c4"/>
<path d="M151.2 177.4l10.3 9.8 M161.5 177.4l-10.3 9.8" stroke="#c2c2c2" stroke-width="1.3" fill="none"/>
<path d="M186.4 182.8l4.1 4 l7.9-8.5" stroke="#c8c8c8" stroke-width="1.8" fill="none"/>
<path d="M231.2 177.3Q229.8 175.4 228.1 176.8Q227.1 178 226.6 180.6L225 186.3Q224.3 188.4 222.2 187.5 M224.3 179.7H229.6" fill="none" stroke="#4a4a4a" stroke-width="1.25"/><path d="M226.7 182.3Q228.4 181.2 229.8 183.4L231.2 185.5Q232.2 186.6 233.6 185.6 M233.7 182.1Q232.6 181.7 229.2 185.2Q228 186.4 226.8 185.7" fill="none" stroke="#4a4a4a" stroke-width="1.15"/>
<rect x="250.5" y="169.5" width="2878" height="25" fill="#fff" stroke="#c8c6c4"/>
<rect x="25" y="225" width="3103" height="906" fill="#ffffff" />
<rect x="0" y="205" width="25" height="926" fill="#e6e6e6" />
<rect x="25" y="205" width="3103" height="19" fill="#e6e6e6" />
<text x="92.0" y="219" font-size="12.5" fill="#262626" text-anchor="middle" font-weight="normal" font-style="normal" >A</text>
<rect x="158" y="205" width="1" height="19" fill="#c6c6c6" />
<text x="225.0" y="219" font-size="12.5" fill="#262626" text-anchor="middle" font-weight="normal" font-style="normal" >B</text>
<rect x="291" y="205" width="1" height="19" fill="#c6c6c6" />
<text x="358.0" y="219" font-size="12.5" fill="#262626" text-anchor="middle" font-weight="normal" font-style="normal" >C</text>
<rect x="424" y="205" width="1" height="19" fill="#c6c6c6" />
<text x="491.0" y="219" font-size="12.5" fill="#262626" text-anchor="middle" font-weight="normal" font-style="normal" >D</text>
<rect x="557" y="205" width="1" height="19" fill="#c6c6c6" />
<text x="606.0" y="219" font-size="12.5" fill="#262626" text-anchor="middle" font-weight="normal" font-style="normal" >E</text>
<rect x="654" y="205" width="1" height="19" fill="#c6c6c6" />
<text x="686.5" y="219" font-size="12.5" fill="#262626" text-anchor="middle" font-weight="normal" font-style="normal" >F</text>
<rect x="718" y="205" width="1" height="19" fill="#c6c6c6" />
<text x="750.5" y="219" font-size="12.5" fill="#262626" text-anchor="middle" font-weight="normal" font-style="normal" >G</text>
<rect x="782" y="205" width="1" height="19" fill="#c6c6c6" />
<text x="814.5" y="219" font-size="12.5" fill="#262626" text-anchor="middle" font-weight="normal" font-style="normal" >H</text>
<rect x="846" y="205" width="1" height="19" fill="#c6c6c6" />
<text x="878.5" y="219" font-size="12.5" fill="#262626" text-anchor="middle" font-weight="normal" font-style="normal" >I</text>
<rect x="910" y="205" width="1" height="19" fill="#c6c6c6" />
<text x="945.5" y="219" font-size="12.5" fill="#262626" text-anchor="middle" font-weight="normal" font-style="normal" >J</text>
<rect x="980" y="205" width="1" height="19" fill="#c6c6c6" />
<text x="1012.5" y="219" font-size="12.5" fill="#262626" text-anchor="middle" font-weight="normal" font-style="normal" >K</text>
<rect x="1044" y="205" width="1" height="19" fill="#c6c6c6" />
<text x="1076.5" y="219" font-size="12.5" fill="#262626" text-anchor="middle" font-weight="normal" font-style="normal" >L</text>
<rect x="1108" y="205" width="1" height="19" fill="#c6c6c6" />
<text x="1140.5" y="219" font-size="12.5" fill="#262626" text-anchor="middle" font-weight="normal" font-style="normal" >M</text>
<rect x="1172" y="205" width="1" height="19" fill="#c6c6c6" />
<text x="1204.5" y="219" font-size="12.5" fill="#262626" text-anchor="middle" font-weight="normal" font-style="normal" >N</text>
<rect x="1236" y="205" width="1" height="19" fill="#c6c6c6" />
<text x="1268.5" y="219" font-size="12.5" fill="#262626" text-anchor="middle" font-weight="normal" font-style="normal" >O</text>
<rect x="1300" y="205" width="1" height="19" fill="#c6c6c6" />
<text x="1332.5" y="219" font-size="12.5" fill="#262626" text-anchor="middle" font-weight="normal" font-style="normal" >P</text>
<rect x="1364" y="205" width="1" height="19" fill="#c6c6c6" />
<text x="1396.5" y="219" font-size="12.5" fill="#262626" text-anchor="middle" font-weight="normal" font-style="normal" >Q</text>
<rect x="1428" y="205" width="1" height="19" fill="#c6c6c6" />
<text x="1460.5" y="219" font-size="12.5" fill="#262626" text-anchor="middle" font-weight="normal" font-style="normal" >R</text>
<rect x="1492" y="205" width="1" height="19" fill="#c6c6c6" />
<text x="1524.5" y="219" font-size="12.5" fill="#262626" text-anchor="middle" font-weight="normal" font-style="normal" >S</text>
<rect x="1556" y="205" width="1" height="19" fill="#c6c6c6" />
<text x="1588.5" y="219" font-size="12.5" fill="#262626" text-anchor="middle" font-weight="normal" font-style="normal" >T</text>
<rect x="1620" y="205" width="1" height="19" fill="#c6c6c6" />
<text x="1652.5" y="219" font-size="12.5" fill="#262626" text-anchor="middle" font-weight="normal" font-style="normal" >U</text>
<rect x="1684" y="205" width="1" height="19" fill="#c6c6c6" />
<text x="1716.5" y="219" font-size="12.5" fill="#262626" text-anchor="middle" font-weight="normal" font-style="normal" >V</text>
<rect x="1748" y="205" width="1" height="19" fill="#c6c6c6" />
<text x="1780.5" y="219" font-size="12.5" fill="#262626" text-anchor="middle" font-weight="normal" font-style="normal" >W</text>
<rect x="1812" y="205" width="1" height="19" fill="#c6c6c6" />
<text x="1844.5" y="219" font-size="12.5" fill="#262626" text-anchor="middle" font-weight="normal" font-style="normal" >X</text>
<rect x="1876" y="205" width="1" height="19" fill="#c6c6c6" />
<text x="1908.5" y="219" font-size="12.5" fill="#262626" text-anchor="middle" font-weight="normal" font-style="normal" >Y</text>
<rect x="1940" y="205" width="1" height="19" fill="#c6c6c6" />
<text x="1972.5" y="219" font-size="12.5" fill="#262626" text-anchor="middle" font-weight="normal" font-style="normal" >Z</text>
<rect x="2004" y="205" width="1" height="19" fill="#c6c6c6" />
<text x="2036.5" y="219" font-size="12.5" fill="#262626" text-anchor="middle" font-weight="normal" font-style="normal" >AA</text>
<rect x="2068" y="205" width="1" height="19" fill="#c6c6c6" />
<text x="2100.5" y="219" font-size="12.5" fill="#262626" text-anchor="middle" font-weight="normal" font-style="normal" >AB</text>
<rect x="2132" y="205" width="1" height="19" fill="#c6c6c6" />
<text x="2164.5" y="219" font-size="12.5" fill="#262626" text-anchor="middle" font-weight="normal" font-style="normal" >AC</text>
<rect x="2196" y="205" width="1" height="19" fill="#c6c6c6" />
<text x="2228.5" y="219" font-size="12.5" fill="#262626" text-anchor="middle" font-weight="normal" font-style="normal" >AD</text>
<rect x="2260" y="205" width="1" height="19" fill="#c6c6c6" />
<text x="2292.5" y="219" font-size="12.5" fill="#262626" text-anchor="middle" font-weight="normal" font-style="normal" >AE</text>
<rect x="2324" y="205" width="1" height="19" fill="#c6c6c6" />
<text x="2356.5" y="219" font-size="12.5" fill="#262626" text-anchor="middle" font-weight="normal" font-style="normal" >AF</text>
<rect x="2388" y="205" width="1" height="19" fill="#c6c6c6" />
<text x="2420.5" y="219" font-size="12.5" fill="#262626" text-anchor="middle" font-weight="normal" font-style="normal" >AG</text>
<rect x="2452" y="205" width="1" height="19" fill="#c6c6c6" />
<text x="2484.5" y="219" font-size="12.5" fill="#262626" text-anchor="middle" font-weight="normal" font-style="normal" >AH</text>
<rect x="2516" y="205" width="1" height="19" fill="#c6c6c6" />
<text x="2548.5" y="219" font-size="12.5" fill="#262626" text-anchor="middle" font-weight="normal" font-style="normal" >AI</text>
<rect x="2580" y="205" width="1" height="19" fill="#c6c6c6" />
<text x="2612.5" y="219" font-size="12.5" fill="#262626" text-anchor="middle" font-weight="normal" font-style="normal" >AJ</text>
<rect x="2644" y="205" width="1" height="19" fill="#c6c6c6" />
<text x="2676.5" y="219" font-size="12.5" fill="#262626" text-anchor="middle" font-weight="normal" font-style="normal" >AK</text>
<rect x="2708" y="205" width="1" height="19" fill="#c6c6c6" />
<text x="2740.5" y="219" font-size="12.5" fill="#262626" text-anchor="middle" font-weight="normal" font-style="normal" >AL</text>
<rect x="2772" y="205" width="1" height="19" fill="#c6c6c6" />
<text x="2804.5" y="219" font-size="12.5" fill="#262626" text-anchor="middle" font-weight="normal" font-style="normal" >AM</text>
<rect x="2836" y="205" width="1" height="19" fill="#c6c6c6" />
<text x="2868.5" y="219" font-size="12.5" fill="#262626" text-anchor="middle" font-weight="normal" font-style="normal" >AN</text>
<rect x="2900" y="205" width="1" height="19" fill="#c6c6c6" />
<text x="2932.5" y="219" font-size="12.5" fill="#262626" text-anchor="middle" font-weight="normal" font-style="normal" >AO</text>
<rect x="2964" y="205" width="1" height="19" fill="#c6c6c6" />
<text x="2996.5" y="219" font-size="12.5" fill="#262626" text-anchor="middle" font-weight="normal" font-style="normal" >AP</text>
<rect x="3028" y="205" width="1" height="19" fill="#c6c6c6" />
<text x="3060.5" y="219" font-size="12.5" fill="#262626" text-anchor="middle" font-weight="normal" font-style="normal" >AQ</text>
<rect x="3092" y="205" width="1" height="19" fill="#c6c6c6" />
<text x="3124.5" y="219" font-size="12.5" fill="#262626" text-anchor="middle" font-weight="normal" font-style="normal" >AR</text>
<rect x="3156" y="205" width="1" height="19" fill="#c6c6c6" />
<rect x="25" y="205" width="1" height="926" fill="#a9a9a9" />
<rect x="0" y="224" width="3128" height="1" fill="#ababab" />
<path d="M22 209.5v11.5h-11.5z" fill="#b8b8b8"/>
<rect x="26" y="244" width="3102" height="1" fill="#dadada" />
<rect x="0" y="244" width="25" height="1" fill="#b9b9b9" />
<rect x="26" y="264" width="3102" height="1" fill="#dadada" />
<rect x="0" y="264" width="25" height="1" fill="#b9b9b9" />
<rect x="26" y="284" width="3102" height="1" fill="#dadada" />
<rect x="0" y="284" width="25" height="1" fill="#b9b9b9" />
<rect x="26" y="304" width="3102" height="1" fill="#dadada" />
<rect x="0" y="304" width="25" height="1" fill="#b9b9b9" />
<rect x="26" y="324" width="3102" height="1" fill="#dadada" />
<rect x="0" y="324" width="25" height="1" fill="#b9b9b9" />
<rect x="26" y="344" width="3102" height="1" fill="#dadada" />
<rect x="0" y="344" width="25" height="1" fill="#b9b9b9" />
<rect x="26" y="364" width="3102" height="1" fill="#dadada" />
<rect x="0" y="364" width="25" height="1" fill="#b9b9b9" />
<rect x="26" y="384" width="3102" height="1" fill="#dadada" />
<rect x="0" y="384" width="25" height="1" fill="#b9b9b9" />
<rect x="26" y="404" width="3102" height="1" fill="#dadada" />
<rect x="0" y="404" width="25" height="1" fill="#b9b9b9" />
<rect x="26" y="424" width="3102" height="1" fill="#dadada" />
<rect x="0" y="424" width="25" height="1" fill="#b9b9b9" />
<rect x="26" y="444" width="3102" height="1" fill="#dadada" />
<rect x="0" y="444" width="25" height="1" fill="#b9b9b9" />
<rect x="26" y="464" width="3102" height="1" fill="#dadada" />
<rect x="0" y="464" width="25" height="1" fill="#b9b9b9" />
<rect x="26" y="484" width="3102" height="1" fill="#dadada" />
<rect x="0" y="484" width="25" height="1" fill="#b9b9b9" />
<rect x="26" y="504" width="3102" height="1" fill="#dadada" />
<rect x="0" y="504" width="25" height="1" fill="#b9b9b9" />
<rect x="26" y="524" width="3102" height="1" fill="#dadada" />
<rect x="0" y="524" width="25" height="1" fill="#b9b9b9" />
<rect x="26" y="544" width="3102" height="1" fill="#dadada" />
<rect x="0" y="544" width="25" height="1" fill="#b9b9b9" />
<rect x="26" y="564" width="3102" height="1" fill="#dadada" />
<rect x="0" y="564" width="25" height="1" fill="#b9b9b9" />
<rect x="26" y="584" width="3102" height="1" fill="#dadada" />
<rect x="0" y="584" width="25" height="1" fill="#b9b9b9" />
<rect x="26" y="604" width="3102" height="1" fill="#dadada" />
<rect x="0" y="604" width="25" height="1" fill="#b9b9b9" />
<rect x="26" y="624" width="3102" height="1" fill="#dadada" />
<rect x="0" y="624" width="25" height="1" fill="#b9b9b9" />
<rect x="26" y="644" width="3102" height="1" fill="#dadada" />
<rect x="0" y="644" width="25" height="1" fill="#b9b9b9" />
<rect x="26" y="664" width="3102" height="1" fill="#dadada" />
<rect x="0" y="664" width="25" height="1" fill="#b9b9b9" />
<rect x="26" y="684" width="3102" height="1" fill="#dadada" />
<rect x="0" y="684" width="25" height="1" fill="#b9b9b9" />
<rect x="26" y="704" width="3102" height="1" fill="#dadada" />
<rect x="0" y="704" width="25" height="1" fill="#b9b9b9" />
<rect x="26" y="724" width="3102" height="1" fill="#dadada" />
<rect x="0" y="724" width="25" height="1" fill="#b9b9b9" />
<rect x="26" y="744" width="3102" height="1" fill="#dadada" />
<rect x="0" y="744" width="25" height="1" fill="#b9b9b9" />
<rect x="26" y="764" width="3102" height="1" fill="#dadada" />
<rect x="0" y="764" width="25" height="1" fill="#b9b9b9" />
<rect x="26" y="784" width="3102" height="1" fill="#dadada" />
<rect x="0" y="784" width="25" height="1" fill="#b9b9b9" />
<rect x="26" y="804" width="3102" height="1" fill="#dadada" />
<rect x="0" y="804" width="25" height="1" fill="#b9b9b9" />
<rect x="26" y="824" width="3102" height="1" fill="#dadada" />
<rect x="0" y="824" width="25" height="1" fill="#b9b9b9" />
<rect x="26" y="844" width="3102" height="1" fill="#dadada" />
<rect x="0" y="844" width="25" height="1" fill="#b9b9b9" />
<rect x="26" y="864" width="3102" height="1" fill="#dadada" />
<rect x="0" y="864" width="25" height="1" fill="#b9b9b9" />
<rect x="26" y="884" width="3102" height="1" fill="#dadada" />
<rect x="0" y="884" width="25" height="1" fill="#b9b9b9" />
<rect x="26" y="904" width="3102" height="1" fill="#dadada" />
<rect x="0" y="904" width="25" height="1" fill="#b9b9b9" />
<rect x="26" y="924" width="3102" height="1" fill="#dadada" />
<rect x="0" y="924" width="25" height="1" fill="#b9b9b9" />
<rect x="26" y="944" width="3102" height="1" fill="#dadada" />
<rect x="0" y="944" width="25" height="1" fill="#b9b9b9" />
<rect x="26" y="964" width="3102" height="1" fill="#dadada" />
<rect x="0" y="964" width="25" height="1" fill="#b9b9b9" />
<rect x="26" y="984" width="3102" height="1" fill="#dadada" />
<rect x="0" y="984" width="25" height="1" fill="#b9b9b9" />
<rect x="26" y="1004" width="3102" height="1" fill="#dadada" />
<rect x="0" y="1004" width="25" height="1" fill="#b9b9b9" />
<rect x="26" y="1024" width="3102" height="1" fill="#dadada" />
<rect x="0" y="1024" width="25" height="1" fill="#b9b9b9" />
<rect x="26" y="1044" width="3102" height="1" fill="#dadada" />
<rect x="0" y="1044" width="25" height="1" fill="#b9b9b9" />
<rect x="26" y="1064" width="3102" height="1" fill="#dadada" />
<rect x="0" y="1064" width="25" height="1" fill="#b9b9b9" />
<rect x="26" y="1084" width="3102" height="1" fill="#dadada" />
<rect x="0" y="1084" width="25" height="1" fill="#b9b9b9" />
<rect x="26" y="1104" width="3102" height="1" fill="#dadada" />
<rect x="0" y="1104" width="25" height="1" fill="#b9b9b9" />
<rect x="26" y="1124" width="3102" height="1" fill="#dadada" />
<rect x="0" y="1124" width="25" height="1" fill="#b9b9b9" />
<rect x="26" y="1144" width="3102" height="1" fill="#dadada" />
<rect x="0" y="1144" width="25" height="1" fill="#b9b9b9" />
<rect x="158" y="225" width="1" height="906" fill="#dadada" />
<rect x="291" y="225" width="1" height="906" fill="#dadada" />
<rect x="424" y="225" width="1" height="906" fill="#dadada" />
<rect x="557" y="225" width="1" height="906" fill="#dadada" />
<rect x="654" y="225" width="1" height="906" fill="#dadada" />
<rect x="718" y="225" width="1" height="906" fill="#dadada" />
<rect x="782" y="225" width="1" height="906" fill="#dadada" />
<rect x="846" y="225" width="1" height="906" fill="#dadada" />
<rect x="910" y="225" width="1" height="906" fill="#dadada" />
<rect x="980" y="225" width="1" height="906" fill="#dadada" />
<rect x="1044" y="225" width="1" height="906" fill="#dadada" />
<rect x="1108" y="225" width="1" height="906" fill="#dadada" />
<rect x="1172" y="225" width="1" height="906" fill="#dadada" />
<rect x="1236" y="225" width="1" height="906" fill="#dadada" />
<rect x="1300" y="225" width="1" height="906" fill="#dadada" />
<rect x="1364" y="225" width="1" height="906" fill="#dadada" />
<rect x="1428" y="225" width="1" height="906" fill="#dadada" />
<rect x="1492" y="225" width="1" height="906" fill="#dadada" />
<rect x="1556" y="225" width="1" height="906" fill="#dadada" />
<rect x="1620" y="225" width="1" height="906" fill="#dadada" />
<rect x="1684" y="225" width="1" height="906" fill="#dadada" />
<rect x="1748" y="225" width="1" height="906" fill="#dadada" />
<rect x="1812" y="225" width="1" height="906" fill="#dadada" />
<rect x="1876" y="225" width="1" height="906" fill="#dadada" />
<rect x="1940" y="225" width="1" height="906" fill="#dadada" />
<rect x="2004" y="225" width="1" height="906" fill="#dadada" />
<rect x="2068" y="225" width="1" height="906" fill="#dadada" />
<rect x="2132" y="225" width="1" height="906" fill="#dadada" />
<rect x="2196" y="225" width="1" height="906" fill="#dadada" />
<rect x="2260" y="225" width="1" height="906" fill="#dadada" />
<rect x="2324" y="225" width="1" height="906" fill="#dadada" />
<rect x="2388" y="225" width="1" height="906" fill="#dadada" />
<rect x="2452" y="225" width="1" height="906" fill="#dadada" />
<rect x="2516" y="225" width="1" height="906" fill="#dadada" />
<rect x="2580" y="225" width="1" height="906" fill="#dadada" />
<rect x="2644" y="225" width="1" height="906" fill="#dadada" />
<rect x="2708" y="225" width="1" height="906" fill="#dadada" />
<rect x="2772" y="225" width="1" height="906" fill="#dadada" />
<rect x="2836" y="225" width="1" height="906" fill="#dadada" />
<rect x="2900" y="225" width="1" height="906" fill="#dadada" />
<rect x="2964" y="225" width="1" height="906" fill="#dadada" />
<rect x="3028" y="225" width="1" height="906" fill="#dadada" />
<rect x="3092" y="225" width="1" height="906" fill="#dadada" />
<rect x="3156" y="225" width="1" height="906" fill="#dadada" />
<text x="12.8" y="240" font-size="12.5" fill="#262626" text-anchor="middle" font-weight="normal" font-style="normal" >1</text>
<text x="12.8" y="260" font-size="12.5" fill="#262626" text-anchor="middle" font-weight="normal" font-style="normal" >2</text>
<text x="12.8" y="280" font-size="12.5" fill="#262626" text-anchor="middle" font-weight="normal" font-style="normal" >3</text>
<text x="12.8" y="300" font-size="12.5" fill="#262626" text-anchor="middle" font-weight="normal" font-style="normal" >4</text>
<text x="12.8" y="320" font-size="12.5" fill="#262626" text-anchor="middle" font-weight="normal" font-style="normal" >5</text>
<text x="12.8" y="340" font-size="12.5" fill="#262626" text-anchor="middle" font-weight="normal" font-style="normal" >6</text>
<text x="12.8" y="360" font-size="12.5" fill="#262626" text-anchor="middle" font-weight="normal" font-style="normal" >7</text>
<text x="12.8" y="380" font-size="12.5" fill="#262626" text-anchor="middle" font-weight="normal" font-style="normal" >8</text>
<text x="12.8" y="400" font-size="12.5" fill="#262626" text-anchor="middle" font-weight="normal" font-style="normal" >9</text>
<text x="12.8" y="420" font-size="12.5" fill="#262626" text-anchor="middle" font-weight="normal" font-style="normal" >10</text>
<text x="12.8" y="440" font-size="12.5" fill="#262626" text-anchor="middle" font-weight="normal" font-style="normal" >11</text>
<text x="12.8" y="460" font-size="12.5" fill="#262626" text-anchor="middle" font-weight="normal" font-style="normal" >12</text>
<text x="12.8" y="480" font-size="12.5" fill="#262626" text-anchor="middle" font-weight="normal" font-style="normal" >13</text>
<text x="12.8" y="500" font-size="12.5" fill="#262626" text-anchor="middle" font-weight="normal" font-style="normal" >14</text>
<text x="12.8" y="520" font-size="12.5" fill="#262626" text-anchor="middle" font-weight="normal" font-style="normal" >15</text>
<text x="12.8" y="540" font-size="12.5" fill="#262626" text-anchor="middle" font-weight="normal" font-style="normal" >16</text>
<text x="12.8" y="560" font-size="12.5" fill="#262626" text-anchor="middle" font-weight="normal" font-style="normal" >17</text>
<text x="12.8" y="580" font-size="12.5" fill="#262626" text-anchor="middle" font-weight="normal" font-style="normal" >18</text>
<text x="12.8" y="600" font-size="12.5" fill="#262626" text-anchor="middle" font-weight="normal" font-style="normal" >19</text>
<text x="12.8" y="620" font-size="12.5" fill="#262626" text-anchor="middle" font-weight="normal" font-style="normal" >20</text>
<text x="12.8" y="640" font-size="12.5" fill="#262626" text-anchor="middle" font-weight="normal" font-style="normal" >21</text>
<text x="12.8" y="660" font-size="12.5" fill="#262626" text-anchor="middle" font-weight="normal" font-style="normal" >22</text>
<text x="12.8" y="680" font-size="12.5" fill="#262626" text-anchor="middle" font-weight="normal" font-style="normal" >23</text>
<text x="12.8" y="700" font-size="12.5" fill="#262626" text-anchor="middle" font-weight="normal" font-style="normal" >24</text>
<text x="12.8" y="720" font-size="12.5" fill="#262626" text-anchor="middle" font-weight="normal" font-style="normal" >25</text>
<text x="12.8" y="740" font-size="12.5" fill="#262626" text-anchor="middle" font-weight="normal" font-style="normal" >26</text>
<text x="12.8" y="760" font-size="12.5" fill="#262626" text-anchor="middle" font-weight="normal" font-style="normal" >27</text>
<text x="12.8" y="780" font-size="12.5" fill="#262626" text-anchor="middle" font-weight="normal" font-style="normal" >28</text>
<text x="12.8" y="800" font-size="12.5" fill="#262626" text-anchor="middle" font-weight="normal" font-style="normal" >29</text>
<text x="12.8" y="820" font-size="12.5" fill="#262626" text-anchor="middle" font-weight="normal" font-style="normal" >30</text>
<text x="12.8" y="840" font-size="12.5" fill="#262626" text-anchor="middle" font-weight="normal" font-style="normal" >31</text>
<text x="12.8" y="860" font-size="12.5" fill="#262626" text-anchor="middle" font-weight="normal" font-style="normal" >32</text>
<text x="12.8" y="880" font-size="12.5" fill="#262626" text-anchor="middle" font-weight="normal" font-style="normal" >33</text>
<text x="12.8" y="900" font-size="12.5" fill="#262626" text-anchor="middle" font-weight="normal" font-style="normal" >34</text>
<text x="12.8" y="920" font-size="12.5" fill="#262626" text-anchor="middle" font-weight="normal" font-style="normal" >35</text>
<text x="12.8" y="940" font-size="12.5" fill="#262626" text-anchor="middle" font-weight="normal" font-style="normal" >36</text>
<text x="12.8" y="960" font-size="12.5" fill="#262626" text-anchor="middle" font-weight="normal" font-style="normal" >37</text>
<text x="12.8" y="980" font-size="12.5" fill="#262626" text-anchor="middle" font-weight="normal" font-style="normal" >38</text>
<text x="12.8" y="1000" font-size="12.5" fill="#262626" text-anchor="middle" font-weight="normal" font-style="normal" >39</text>
<text x="12.8" y="1020" font-size="12.5" fill="#262626" text-anchor="middle" font-weight="normal" font-style="normal" >40</text>
<text x="12.8" y="1040" font-size="12.5" fill="#262626" text-anchor="middle" font-weight="normal" font-style="normal" >41</text>
<text x="12.8" y="1060" font-size="12.5" fill="#262626" text-anchor="middle" font-weight="normal" font-style="normal" >42</text>
<text x="12.8" y="1080" font-size="12.5" fill="#262626" text-anchor="middle" font-weight="normal" font-style="normal" >43</text>
<text x="12.8" y="1100" font-size="12.5" fill="#262626" text-anchor="middle" font-weight="normal" font-style="normal" >44</text>
<text x="12.8" y="1120" font-size="12.5" fill="#262626" text-anchor="middle" font-weight="normal" font-style="normal" >45</text>
<text x="33" y="240" font-size="12.8" fill="#000" text-anchor="start" font-weight="bold" font-style="normal" >Qpc</text>
<rect x="141.5" y="226.5" width="16" height="16" fill="#f4f6f9" stroke="#a9b0b9"/>
<path d="M145.9 232.8h7.2l-3.6 4.1z" fill="#6a6a6a"/>
<text x="166" y="240" font-size="12.8" fill="#000" text-anchor="start" font-weight="bold" font-style="normal" >QpcDelta</text>
<rect x="274.5" y="226.5" width="16" height="16" fill="#f4f6f9" stroke="#a9b0b9"/>
<path d="M278.9 232.8h7.2l-3.6 4.1z" fill="#6a6a6a"/>
<text x="299" y="240" font-size="12.8" fill="#000" text-anchor="start" font-weight="bold" font-style="normal" >QpcDeltaMS</text>
<rect x="407.5" y="226.5" width="16" height="16" fill="#f4f6f9" stroke="#a9b0b9"/>
<path d="M411.9 232.8h7.2l-3.6 4.1z" fill="#6a6a6a"/>
<text x="432" y="240" font-size="12.8" fill="#000" text-anchor="start" font-weight="bold" font-style="normal" >EquivalentHz</text>
<rect x="540.5" y="226.5" width="16" height="16" fill="#f4f6f9" stroke="#a9b0b9"/>
<path d="M544.9 232.8h7.2l-3.6 4.1z" fill="#6a6a6a"/>
<text x="565" y="240" font-size="12.8" fill="#000" text-anchor="start" font-weight="bold" font-style="normal" >MsgTimeMS</text>
<rect x="637.5" y="226.5" width="16" height="16" fill="#f4f6f9" stroke="#a9b0b9"/>
<path d="M641.9 232.8h7.2l-3.6 4.1z" fill="#6a6a6a"/>
<text x="657.4" y="240" font-size="12.8" fill="#000" text-anchor="start" font-weight="bold" font-style="normal" >dX</text>
<rect x="701.5" y="226.5" width="16" height="16" fill="#f4f6f9" stroke="#a9b0b9"/>
<path d="M705.9 232.8h7.2l-3.6 4.1z" fill="#6a6a6a"/>
<text x="721.4" y="240" font-size="12.8" fill="#000" text-anchor="start" font-weight="bold" font-style="normal" >dY</text>
<rect x="765.5" y="226.5" width="16" height="16" fill="#f4f6f9" stroke="#a9b0b9"/>
<path d="M769.9 232.8h7.2l-3.6 4.1z" fill="#6a6a6a"/>
<text x="785.4" y="240" font-size="12.8" fill="#000" text-anchor="start" font-weight="bold" font-style="normal" >X</text>
<rect x="829.5" y="226.5" width="16" height="16" fill="#f4f6f9" stroke="#a9b0b9"/>
<path d="M833.9 232.8h7.2l-3.6 4.1z" fill="#6a6a6a"/>
<text x="849.4" y="240" font-size="12.8" fill="#000" text-anchor="start" font-weight="bold" font-style="normal" >Y</text>
<rect x="893.5" y="226.5" width="16" height="16" fill="#f4f6f9" stroke="#a9b0b9"/>
<path d="M897.9 232.8h7.2l-3.6 4.1z" fill="#6a6a6a"/>
<text x="913.4" y="240" font-size="12.8" fill="#000" text-anchor="start" font-weight="bold" font-style="normal" >Buttons</text>
<rect x="963.5" y="226.5" width="16" height="16" fill="#f4f6f9" stroke="#a9b0b9"/>
<path d="M967.9 232.8h7.2l-3.6 4.1z" fill="#6a6a6a"/>
<rect x="26" y="244" width="954" height="1.2" fill="#000" />
<text x="151" y="260" font-size="12.8" fill="#000" text-anchor="end" font-weight="normal" font-style="normal" >471,982,411,058</text>
<text x="267" y="260" font-size="12.8" fill="#000" text-anchor="middle" font-weight="normal" font-style="normal" >-</text>
<text x="400" y="260" font-size="12.8" fill="#000" text-anchor="middle" font-weight="normal" font-style="normal" >-</text>
<text x="533" y="260" font-size="12.8" fill="#000" text-anchor="middle" font-weight="normal" font-style="normal" >-</text>
<text x="647" y="260" font-size="12.8" fill="#000" text-anchor="end" font-weight="normal" font-style="normal" >47,198,078</text>
<text x="715.8" y="260" font-size="12.8" fill="#000" text-anchor="end" font-weight="normal" font-style="normal" >0</text>
<text x="779.8" y="260" font-size="12.8" fill="#000" text-anchor="end" font-weight="normal" font-style="normal" >0</text>
<text x="843.8" y="260" font-size="12.8" fill="#000" text-anchor="end" font-weight="normal" font-style="normal" >8</text>
<text x="907.8" y="260" font-size="12.8" fill="#000" text-anchor="end" font-weight="normal" font-style="normal" >31</text>
<text x="977.8" y="260" font-size="12.8" fill="#000" text-anchor="end" font-weight="normal" font-style="normal" >0</text>
<text x="151" y="280" font-size="12.8" fill="#000" text-anchor="end" font-weight="normal" font-style="normal" >471,982,422,887</text>
<text x="284" y="280" font-size="12.8" fill="#000" text-anchor="end" font-weight="normal" font-style="normal" >11,829</text>
<text x="417" y="280" font-size="12.8" fill="#000" text-anchor="end" font-weight="normal" font-style="normal" >1.18</text>
<text x="550" y="280" font-size="12.8" fill="#000" text-anchor="end" font-weight="normal" font-style="normal" >845</text>
<text x="647" y="280" font-size="12.8" fill="#000" text-anchor="end" font-weight="normal" font-style="normal" >47,198,078</text>
<text x="715.8" y="280" font-size="12.8" fill="#000" text-anchor="end" font-weight="normal" font-style="normal" >0</text>
<text x="779.8" y="280" font-size="12.8" fill="#000" text-anchor="end" font-weight="normal" font-style="normal" >0</text>
<text x="843.8" y="280" font-size="12.8" fill="#000" text-anchor="end" font-weight="normal" font-style="normal" >8</text>
<text x="907.8" y="280" font-size="12.8" fill="#000" text-anchor="end" font-weight="normal" font-style="normal" >31</text>
<text x="977.8" y="280" font-size="12.8" fill="#000" text-anchor="end" font-weight="normal" font-style="normal" >0</text>
<text x="151" y="300" font-size="12.8" fill="#000" text-anchor="end" font-weight="normal" font-style="normal" >471,982,462,878</text>
<text x="284" y="300" font-size="12.8" fill="#000" text-anchor="end" font-weight="normal" font-style="normal" >39,991</text>
<text x="417" y="300" font-size="12.8" fill="#000" text-anchor="end" font-weight="normal" font-style="normal" >4.00</text>
<text x="550" y="300" font-size="12.8" fill="#000" text-anchor="end" font-weight="normal" font-style="normal" >250</text>
<text x="647" y="300" font-size="12.8" fill="#000" text-anchor="end" font-weight="normal" font-style="normal" >47,198,093</text>
<text x="715.8" y="300" font-size="12.8" fill="#000" text-anchor="end" font-weight="normal" font-style="normal" >1</text>
<text x="779.8" y="300" font-size="12.8" fill="#000" text-anchor="end" font-weight="normal" font-style="normal" >0</text>
<text x="843.8" y="300" font-size="12.8" fill="#000" text-anchor="end" font-weight="normal" font-style="normal" >8</text>
<text x="907.8" y="300" font-size="12.8" fill="#000" text-anchor="end" font-weight="normal" font-style="normal" >31</text>
<text x="977.8" y="300" font-size="12.8" fill="#000" text-anchor="end" font-weight="normal" font-style="normal" >0</text>
<text x="151" y="320" font-size="12.8" fill="#000" text-anchor="end" font-weight="normal" font-style="normal" >471,982,492,794</text>
<text x="284" y="320" font-size="12.8" fill="#000" text-anchor="end" font-weight="normal" font-style="normal" >29,916</text>
<text x="417" y="320" font-size="12.8" fill="#000" text-anchor="end" font-weight="normal" font-style="normal" >2.99</text>
<text x="550" y="320" font-size="12.8" fill="#000" text-anchor="end" font-weight="normal" font-style="normal" >334</text>
<text x="647" y="320" font-size="12.8" fill="#000" text-anchor="end" font-weight="normal" font-style="normal" >47,198,093</text>
<text x="715.8" y="320" font-size="12.8" fill="#000" text-anchor="end" font-weight="normal" font-style="normal" >0</text>
<text x="779.8" y="320" font-size="12.8" fill="#000" text-anchor="end" font-weight="normal" font-style="normal" >0</text>
<text x="843.8" y="320" font-size="12.8" fill="#000" text-anchor="end" font-weight="normal" font-style="normal" >8</text>
<text x="907.8" y="320" font-size="12.8" fill="#000" text-anchor="end" font-weight="normal" font-style="normal" >31</text>
<text x="977.8" y="320" font-size="12.8" fill="#000" text-anchor="end" font-weight="normal" font-style="normal" >0</text>
<text x="151" y="340" font-size="12.8" fill="#000" text-anchor="end" font-weight="normal" font-style="normal" >471,982,523,582</text>
<text x="284" y="340" font-size="12.8" fill="#000" text-anchor="end" font-weight="normal" font-style="normal" >30,788</text>
<text x="417" y="340" font-size="12.8" fill="#000" text-anchor="end" font-weight="normal" font-style="normal" >3.08</text>
<text x="550" y="340" font-size="12.8" fill="#000" text-anchor="end" font-weight="normal" font-style="normal" >325</text>
<text x="647" y="340" font-size="12.8" fill="#000" text-anchor="end" font-weight="normal" font-style="normal" >47,198,093</text>
<text x="715.8" y="340" font-size="12.8" fill="#000" text-anchor="end" font-weight="normal" font-style="normal" >0</text>
<text x="779.8" y="340" font-size="12.8" fill="#000" text-anchor="end" font-weight="normal" font-style="normal" >0</text>
<text x="843.8" y="340" font-size="12.8" fill="#000" text-anchor="end" font-weight="normal" font-style="normal" >8</text>
<text x="907.8" y="340" font-size="12.8" fill="#000" text-anchor="end" font-weight="normal" font-style="normal" >31</text>
<text x="977.8" y="340" font-size="12.8" fill="#000" text-anchor="end" font-weight="normal" font-style="normal" >0</text>
<text x="151" y="360" font-size="12.8" fill="#000" text-anchor="end" font-weight="normal" font-style="normal" >471,982,552,830</text>
<text x="284" y="360" font-size="12.8" fill="#000" text-anchor="end" font-weight="normal" font-style="normal" >29,248</text>
<text x="417" y="360" font-size="12.8" fill="#000" text-anchor="end" font-weight="normal" font-style="normal" >2.92</text>
<text x="550" y="360" font-size="12.8" fill="#000" text-anchor="end" font-weight="normal" font-style="normal" >342</text>
<text x="647" y="360" font-size="12.8" fill="#000" text-anchor="end" font-weight="normal" font-style="normal" >47,198,093</text>
<text x="715.8" y="360" font-size="12.8" fill="#000" text-anchor="end" font-weight="normal" font-style="normal" >0</text>
<text x="779.8" y="360" font-size="12.8" fill="#000" text-anchor="end" font-weight="normal" font-style="normal" >0</text>
<text x="843.8" y="360" font-size="12.8" fill="#000" text-anchor="end" font-weight="normal" font-style="normal" >8</text>
<text x="907.8" y="360" font-size="12.8" fill="#000" text-anchor="end" font-weight="normal" font-style="normal" >31</text>
<text x="977.8" y="360" font-size="12.8" fill="#000" text-anchor="end" font-weight="normal" font-style="normal" >0</text>
<text x="151" y="380" font-size="12.8" fill="#000" text-anchor="end" font-weight="normal" font-style="normal" >471,982,582,870</text>
<text x="284" y="380" font-size="12.8" fill="#000" text-anchor="end" font-weight="normal" font-style="normal" >30,040</text>
<text x="417" y="380" font-size="12.8" fill="#000" text-anchor="end" font-weight="normal" font-style="normal" >3.00</text>
<text x="550" y="380" font-size="12.8" fill="#000" text-anchor="end" font-weight="normal" font-style="normal" >333</text>
<text x="647" y="380" font-size="12.8" fill="#000" text-anchor="end" font-weight="normal" font-style="normal" >47,198,093</text>
<text x="715.8" y="380" font-size="12.8" fill="#000" text-anchor="end" font-weight="normal" font-style="normal" >1</text>
<text x="779.8" y="380" font-size="12.8" fill="#000" text-anchor="end" font-weight="normal" font-style="normal" >0</text>
<text x="843.8" y="380" font-size="12.8" fill="#000" text-anchor="end" font-weight="normal" font-style="normal" >8</text>
<text x="907.8" y="380" font-size="12.8" fill="#000" text-anchor="end" font-weight="normal" font-style="normal" >31</text>
<text x="977.8" y="380" font-size="12.8" fill="#000" text-anchor="end" font-weight="normal" font-style="normal" >0</text>
<text x="151" y="400" font-size="12.8" fill="#000" text-anchor="end" font-weight="normal" font-style="normal" >471,982,612,728</text>
<text x="284" y="400" font-size="12.8" fill="#000" text-anchor="end" font-weight="normal" font-style="normal" >29,858</text>
<text x="417" y="400" font-size="12.8" fill="#000" text-anchor="end" font-weight="normal" font-style="normal" >2.99</text>
<text x="550" y="400" font-size="12.8" fill="#000" text-anchor="end" font-weight="normal" font-style="normal" >335</text>
<text x="647" y="400" font-size="12.8" fill="#000" text-anchor="end" font-weight="normal" font-style="normal" >47,198,109</text>
<text x="715.8" y="400" font-size="12.8" fill="#000" text-anchor="end" font-weight="normal" font-style="normal" >0</text>
<text x="779.8" y="400" font-size="12.8" fill="#000" text-anchor="end" font-weight="normal" font-style="normal" >0</text>
<text x="843.8" y="400" font-size="12.8" fill="#000" text-anchor="end" font-weight="normal" font-style="normal" >8</text>
<text x="907.8" y="400" font-size="12.8" fill="#000" text-anchor="end" font-weight="normal" font-style="normal" >31</text>
<text x="977.8" y="400" font-size="12.8" fill="#000" text-anchor="end" font-weight="normal" font-style="normal" >0</text>
<text x="151" y="420" font-size="12.8" fill="#000" text-anchor="end" font-weight="normal" font-style="normal" >471,982,642,712</text>
<text x="284" y="420" font-size="12.8" fill="#000" text-anchor="end" font-weight="normal" font-style="normal" >29,984</text>
<text x="417" y="420" font-size="12.8" fill="#000" text-anchor="end" font-weight="normal" font-style="normal" >3.00</text>
<text x="550" y="420" font-size="12.8" fill="#000" text-anchor="end" font-weight="normal" font-style="normal" >334</text>
<text x="647" y="420" font-size="12.8" fill="#000" text-anchor="end" font-weight="normal" font-style="normal" >47,198,109</text>
<text x="715.8" y="420" font-size="12.8" fill="#000" text-anchor="end" font-weight="normal" font-style="normal" >0</text>
<text x="779.8" y="420" font-size="12.8" fill="#000" text-anchor="end" font-weight="normal" font-style="normal" >0</text>
<text x="843.8" y="420" font-size="12.8" fill="#000" text-anchor="end" font-weight="normal" font-style="normal" >8</text>
<text x="907.8" y="420" font-size="12.8" fill="#000" text-anchor="end" font-weight="normal" font-style="normal" >31</text>
<text x="977.8" y="420" font-size="12.8" fill="#000" text-anchor="end" font-weight="normal" font-style="normal" >0</text>
<text x="151" y="440" font-size="12.8" fill="#000" text-anchor="end" font-weight="normal" font-style="normal" >471,982,672,905</text>
<text x="284" y="440" font-size="12.8" fill="#000" text-anchor="end" font-weight="normal" font-style="normal" >30,193</text>
<text x="417" y="440" font-size="12.8" fill="#000" text-anchor="end" font-weight="normal" font-style="normal" >3.02</text>
<text x="550" y="440" font-size="12.8" fill="#000" text-anchor="end" font-weight="normal" font-style="normal" >331</text>
<text x="647" y="440" font-size="12.8" fill="#000" text-anchor="end" font-weight="normal" font-style="normal" >47,198,109</text>
<text x="715.8" y="440" font-size="12.8" fill="#000" text-anchor="end" font-weight="normal" font-style="normal" >1</text>
<text x="779.8" y="440" font-size="12.8" fill="#000" text-anchor="end" font-weight="normal" font-style="normal" >0</text>
<text x="843.8" y="440" font-size="12.8" fill="#000" text-anchor="end" font-weight="normal" font-style="normal" >8</text>
<text x="907.8" y="440" font-size="12.8" fill="#000" text-anchor="end" font-weight="normal" font-style="normal" >31</text>
<text x="977.8" y="440" font-size="12.8" fill="#000" text-anchor="end" font-weight="normal" font-style="normal" >0</text>
<text x="151" y="460" font-size="12.8" fill="#000" text-anchor="end" font-weight="normal" font-style="normal" >471,982,702,806</text>
<text x="284" y="460" font-size="12.8" fill="#000" text-anchor="end" font-weight="normal" font-style="normal" >29,901</text>
<text x="417" y="460" font-size="12.8" fill="#000" text-anchor="end" font-weight="normal" font-style="normal" >2.99</text>
<text x="550" y="460" font-size="12.8" fill="#000" text-anchor="end" font-weight="normal" font-style="normal" >334</text>
<text x="647" y="460" font-size="12.8" fill="#000" text-anchor="end" font-weight="normal" font-style="normal" >47,198,109</text>
<text x="715.8" y="460" font-size="12.8" fill="#000" text-anchor="end" font-weight="normal" font-style="normal" >0</text>
<text x="779.8" y="460" font-size="12.8" fill="#000" text-anchor="end" font-weight="normal" font-style="normal" >0</text>
<text x="843.8" y="460" font-size="12.8" fill="#000" text-anchor="end" font-weight="normal" font-style="normal" >8</text>
<text x="907.8" y="460" font-size="12.8" fill="#000" text-anchor="end" font-weight="normal" font-style="normal" >31</text>
<text x="977.8" y="460" font-size="12.8" fill="#000" text-anchor="end" font-weight="normal" font-style="normal" >0</text>
<text x="151" y="480" font-size="12.8" fill="#000" text-anchor="end" font-weight="normal" font-style="normal" >471,982,732,653</text>
<text x="284" y="480" font-size="12.8" fill="#000" text-anchor="end" font-weight="normal" font-style="normal" >29,847</text>
<text x="417" y="480" font-size="12.8" fill="#000" text-anchor="end" font-weight="normal" font-style="normal" >2.98</text>
<text x="550" y="480" font-size="12.8" fill="#000" text-anchor="end" font-weight="normal" font-style="normal" >335</text>
<text x="647" y="480" font-size="12.8" fill="#000" text-anchor="end" font-weight="normal" font-style="normal" >47,198,109</text>
<text x="715.8" y="480" font-size="12.8" fill="#000" text-anchor="end" font-weight="normal" font-style="normal" >1</text>
<text x="779.8" y="480" font-size="12.8" fill="#000" text-anchor="end" font-weight="normal" font-style="normal" >0</text>
<text x="843.8" y="480" font-size="12.8" fill="#000" text-anchor="end" font-weight="normal" font-style="normal" >8</text>
<text x="907.8" y="480" font-size="12.8" fill="#000" text-anchor="end" font-weight="normal" font-style="normal" >31</text>
<text x="977.8" y="480" font-size="12.8" fill="#000" text-anchor="end" font-weight="normal" font-style="normal" >0</text>
<text x="151" y="500" font-size="12.8" fill="#000" text-anchor="end" font-weight="normal" font-style="normal" >471,982,772,845</text>
<text x="284" y="500" font-size="12.8" fill="#000" text-anchor="end" font-weight="normal" font-style="normal" >40,192</text>
<text x="417" y="500" font-size="12.8" fill="#000" text-anchor="end" font-weight="normal" font-style="normal" >4.02</text>
<text x="550" y="500" font-size="12.8" fill="#000" text-anchor="end" font-weight="normal" font-style="normal" >249</text>
<text x="647" y="500" font-size="12.8" fill="#000" text-anchor="end" font-weight="normal" font-style="normal" >47,198,125</text>
<text x="715.8" y="500" font-size="12.8" fill="#000" text-anchor="end" font-weight="normal" font-style="normal" >1</text>
<text x="779.8" y="500" font-size="12.8" fill="#000" text-anchor="end" font-weight="normal" font-style="normal" >0</text>
<text x="843.8" y="500" font-size="12.8" fill="#000" text-anchor="end" font-weight="normal" font-style="normal" >9</text>
<text x="907.8" y="500" font-size="12.8" fill="#000" text-anchor="end" font-weight="normal" font-style="normal" >31</text>
<text x="977.8" y="500" font-size="12.8" fill="#000" text-anchor="end" font-weight="normal" font-style="normal" >0</text>
<text x="151" y="520" font-size="12.8" fill="#000" text-anchor="end" font-weight="normal" font-style="normal" >471,982,802,708</text>
<text x="284" y="520" font-size="12.8" fill="#000" text-anchor="end" font-weight="normal" font-style="normal" >29,863</text>
<text x="417" y="520" font-size="12.8" fill="#000" text-anchor="end" font-weight="normal" font-style="normal" >2.99</text>
<text x="550" y="520" font-size="12.8" fill="#000" text-anchor="end" font-weight="normal" font-style="normal" >335</text>
<text x="647" y="520" font-size="12.8" fill="#000" text-anchor="end" font-weight="normal" font-style="normal" >47,198,125</text>
<text x="715.8" y="520" font-size="12.8" fill="#000" text-anchor="end" font-weight="normal" font-style="normal" >0</text>
<text x="779.8" y="520" font-size="12.8" fill="#000" text-anchor="end" font-weight="normal" font-style="normal" >0</text>
<text x="843.8" y="520" font-size="12.8" fill="#000" text-anchor="end" font-weight="normal" font-style="normal" >9</text>
<text x="907.8" y="520" font-size="12.8" fill="#000" text-anchor="end" font-weight="normal" font-style="normal" >31</text>
<text x="977.8" y="520" font-size="12.8" fill="#000" text-anchor="end" font-weight="normal" font-style="normal" >0</text>
<text x="151" y="540" font-size="12.8" fill="#000" text-anchor="end" font-weight="normal" font-style="normal" >471,982,832,821</text>
<text x="284" y="540" font-size="12.8" fill="#000" text-anchor="end" font-weight="normal" font-style="normal" >30,113</text>
<text x="417" y="540" font-size="12.8" fill="#000" text-anchor="end" font-weight="normal" font-style="normal" >3.01</text>
<text x="550" y="540" font-size="12.8" fill="#000" text-anchor="end" font-weight="normal" font-style="normal" >332</text>
<text x="647" y="540" font-size="12.8" fill="#000" text-anchor="end" font-weight="normal" font-style="normal" >47,198,125</text>
<text x="715.8" y="540" font-size="12.8" fill="#000" text-anchor="end" font-weight="normal" font-style="normal" >1</text>
<text x="779.8" y="540" font-size="12.8" fill="#000" text-anchor="end" font-weight="normal" font-style="normal" >0</text>
<text x="843.8" y="540" font-size="12.8" fill="#000" text-anchor="end" font-weight="normal" font-style="normal" >9</text>
<text x="907.8" y="540" font-size="12.8" fill="#000" text-anchor="end" font-weight="normal" font-style="normal" >31</text>
<text x="977.8" y="540" font-size="12.8" fill="#000" text-anchor="end" font-weight="normal" font-style="normal" >0</text>
<text x="151" y="560" font-size="12.8" fill="#000" text-anchor="end" font-weight="normal" font-style="normal" >471,982,862,882</text>
<text x="284" y="560" font-size="12.8" fill="#000" text-anchor="end" font-weight="normal" font-style="normal" >30,061</text>
<text x="417" y="560" font-size="12.8" fill="#000" text-anchor="end" font-weight="normal" font-style="normal" >3.01</text>
<text x="550" y="560" font-size="12.8" fill="#000" text-anchor="end" font-weight="normal" font-style="normal" >333</text>
<text x="647" y="560" font-size="12.8" fill="#000" text-anchor="end" font-weight="normal" font-style="normal" >47,198,125</text>
<text x="715.8" y="560" font-size="12.8" fill="#000" text-anchor="end" font-weight="normal" font-style="normal" >1</text>
<text x="779.8" y="560" font-size="12.8" fill="#000" text-anchor="end" font-weight="normal" font-style="normal" >0</text>
<text x="843.8" y="560" font-size="12.8" fill="#000" text-anchor="end" font-weight="normal" font-style="normal" >10</text>
<text x="907.8" y="560" font-size="12.8" fill="#000" text-anchor="end" font-weight="normal" font-style="normal" >31</text>
<text x="977.8" y="560" font-size="12.8" fill="#000" text-anchor="end" font-weight="normal" font-style="normal" >0</text>
<text x="151" y="580" font-size="12.8" fill="#000" text-anchor="end" font-weight="normal" font-style="normal" >471,982,892,748</text>
<text x="284" y="580" font-size="12.8" fill="#000" text-anchor="end" font-weight="normal" font-style="normal" >29,866</text>
<text x="417" y="580" font-size="12.8" fill="#000" text-anchor="end" font-weight="normal" font-style="normal" >2.99</text>
<text x="550" y="580" font-size="12.8" fill="#000" text-anchor="end" font-weight="normal" font-style="normal" >335</text>
<text x="647" y="580" font-size="12.8" fill="#000" text-anchor="end" font-weight="normal" font-style="normal" >47,198,125</text>
<text x="715.8" y="580" font-size="12.8" fill="#000" text-anchor="end" font-weight="normal" font-style="normal" >0</text>
<text x="779.8" y="580" font-size="12.8" fill="#000" text-anchor="end" font-weight="normal" font-style="normal" >0</text>
<text x="843.8" y="580" font-size="12.8" fill="#000" text-anchor="end" font-weight="normal" font-style="normal" >11</text>
<text x="907.8" y="580" font-size="12.8" fill="#000" text-anchor="end" font-weight="normal" font-style="normal" >31</text>
<text x="977.8" y="580" font-size="12.8" fill="#000" text-anchor="end" font-weight="normal" font-style="normal" >0</text>
<text x="151" y="600" font-size="12.8" fill="#000" text-anchor="end" font-weight="normal" font-style="normal" >471,982,922,876</text>
<text x="284" y="600" font-size="12.8" fill="#000" text-anchor="end" font-weight="normal" font-style="normal" >30,128</text>
<text x="417" y="600" font-size="12.8" fill="#000" text-anchor="end" font-weight="normal" font-style="normal" >3.01</text>
<text x="550" y="600" font-size="12.8" fill="#000" text-anchor="end" font-weight="normal" font-style="normal" >332</text>
<text x="647" y="600" font-size="12.8" fill="#000" text-anchor="end" font-weight="normal" font-style="normal" >47,198,140</text>
<text x="715.8" y="600" font-size="12.8" fill="#000" text-anchor="end" font-weight="normal" font-style="normal" >1</text>
<text x="779.8" y="600" font-size="12.8" fill="#000" text-anchor="end" font-weight="normal" font-style="normal" >0</text>
<text x="843.8" y="600" font-size="12.8" fill="#000" text-anchor="end" font-weight="normal" font-style="normal" >11</text>
<text x="907.8" y="600" font-size="12.8" fill="#000" text-anchor="end" font-weight="normal" font-style="normal" >31</text>
<text x="977.8" y="600" font-size="12.8" fill="#000" text-anchor="end" font-weight="normal" font-style="normal" >0</text>
<text x="151" y="620" font-size="12.8" fill="#000" text-anchor="end" font-weight="normal" font-style="normal" >471,982,952,814</text>
<text x="284" y="620" font-size="12.8" fill="#000" text-anchor="end" font-weight="normal" font-style="normal" >29,938</text>
<text x="417" y="620" font-size="12.8" fill="#000" text-anchor="end" font-weight="normal" font-style="normal" >2.99</text>
<text x="550" y="620" font-size="12.8" fill="#000" text-anchor="end" font-weight="normal" font-style="normal" >334</text>
<text x="647" y="620" font-size="12.8" fill="#000" text-anchor="end" font-weight="normal" font-style="normal" >47,198,140</text>
<text x="715.8" y="620" font-size="12.8" fill="#000" text-anchor="end" font-weight="normal" font-style="normal" >1</text>
<text x="779.8" y="620" font-size="12.8" fill="#000" text-anchor="end" font-weight="normal" font-style="normal" >0</text>
<text x="843.8" y="620" font-size="12.8" fill="#000" text-anchor="end" font-weight="normal" font-style="normal" >11</text>
<text x="907.8" y="620" font-size="12.8" fill="#000" text-anchor="end" font-weight="normal" font-style="normal" >31</text>
<text x="977.8" y="620" font-size="12.8" fill="#000" text-anchor="end" font-weight="normal" font-style="normal" >0</text>
<text x="151" y="640" font-size="12.8" fill="#000" text-anchor="end" font-weight="normal" font-style="normal" >471,982,982,822</text>
<text x="284" y="640" font-size="12.8" fill="#000" text-anchor="end" font-weight="normal" font-style="normal" >30,008</text>
<text x="417" y="640" font-size="12.8" fill="#000" text-anchor="end" font-weight="normal" font-style="normal" >3.00</text>
<text x="550" y="640" font-size="12.8" fill="#000" text-anchor="end" font-weight="normal" font-style="normal" >333</text>
<text x="647" y="640" font-size="12.8" fill="#000" text-anchor="end" font-weight="normal" font-style="normal" >47,198,140</text>
<text x="715.8" y="640" font-size="12.8" fill="#000" text-anchor="end" font-weight="normal" font-style="normal" >1</text>
<text x="779.8" y="640" font-size="12.8" fill="#000" text-anchor="end" font-weight="normal" font-style="normal" >0</text>
<text x="843.8" y="640" font-size="12.8" fill="#000" text-anchor="end" font-weight="normal" font-style="normal" >12</text>
<text x="907.8" y="640" font-size="12.8" fill="#000" text-anchor="end" font-weight="normal" font-style="normal" >31</text>
<text x="977.8" y="640" font-size="12.8" fill="#000" text-anchor="end" font-weight="normal" font-style="normal" >0</text>
<text x="151" y="660" font-size="12.8" fill="#000" text-anchor="end" font-weight="normal" font-style="normal" >471,983,012,944</text>
<text x="284" y="660" font-size="12.8" fill="#000" text-anchor="end" font-weight="normal" font-style="normal" >30,122</text>
<text x="417" y="660" font-size="12.8" fill="#000" text-anchor="end" font-weight="normal" font-style="normal" >3.01</text>
<text x="550" y="660" font-size="12.8" fill="#000" text-anchor="end" font-weight="normal" font-style="normal" >332</text>
<text x="647" y="660" font-size="12.8" fill="#000" text-anchor="end" font-weight="normal" font-style="normal" >47,198,140</text>
<text x="715.8" y="660" font-size="12.8" fill="#000" text-anchor="end" font-weight="normal" font-style="normal" >1</text>
<text x="779.8" y="660" font-size="12.8" fill="#000" text-anchor="end" font-weight="normal" font-style="normal" >0</text>
<text x="843.8" y="660" font-size="12.8" fill="#000" text-anchor="end" font-weight="normal" font-style="normal" >12</text>
<text x="907.8" y="660" font-size="12.8" fill="#000" text-anchor="end" font-weight="normal" font-style="normal" >31</text>
<text x="977.8" y="660" font-size="12.8" fill="#000" text-anchor="end" font-weight="normal" font-style="normal" >0</text>
<text x="151" y="680" font-size="12.8" fill="#000" text-anchor="end" font-weight="normal" font-style="normal" >471,983,042,923</text>
<text x="284" y="680" font-size="12.8" fill="#000" text-anchor="end" font-weight="normal" font-style="normal" >29,979</text>
<text x="417" y="680" font-size="12.8" fill="#000" text-anchor="end" font-weight="normal" font-style="normal" >3.00</text>
<text x="550" y="680" font-size="12.8" fill="#000" text-anchor="end" font-weight="normal" font-style="normal" >334</text>
<text x="647" y="680" font-size="12.8" fill="#000" text-anchor="end" font-weight="normal" font-style="normal" >47,198,140</text>
<text x="715.8" y="680" font-size="12.8" fill="#000" text-anchor="end" font-weight="normal" font-style="normal" >1</text>
<text x="779.8" y="680" font-size="12.8" fill="#000" text-anchor="end" font-weight="normal" font-style="normal" >0</text>
<text x="843.8" y="680" font-size="12.8" fill="#000" text-anchor="end" font-weight="normal" font-style="normal" >13</text>
<text x="907.8" y="680" font-size="12.8" fill="#000" text-anchor="end" font-weight="normal" font-style="normal" >31</text>
<text x="977.8" y="680" font-size="12.8" fill="#000" text-anchor="end" font-weight="normal" font-style="normal" >0</text>
<text x="151" y="700" font-size="12.8" fill="#000" text-anchor="end" font-weight="normal" font-style="normal" >471,983,072,830</text>
<text x="284" y="700" font-size="12.8" fill="#000" text-anchor="end" font-weight="normal" font-style="normal" >29,907</text>
<text x="417" y="700" font-size="12.8" fill="#000" text-anchor="end" font-weight="normal" font-style="normal" >2.99</text>
<text x="550" y="700" font-size="12.8" fill="#000" text-anchor="end" font-weight="normal" font-style="normal" >334</text>
<text x="647" y="700" font-size="12.8" fill="#000" text-anchor="end" font-weight="normal" font-style="normal" >47,198,156</text>
<text x="715.8" y="700" font-size="12.8" fill="#000" text-anchor="end" font-weight="normal" font-style="normal" >1</text>
<text x="779.8" y="700" font-size="12.8" fill="#000" text-anchor="end" font-weight="normal" font-style="normal" >0</text>
<text x="843.8" y="700" font-size="12.8" fill="#000" text-anchor="end" font-weight="normal" font-style="normal" >13</text>
<text x="907.8" y="700" font-size="12.8" fill="#000" text-anchor="end" font-weight="normal" font-style="normal" >31</text>
<text x="977.8" y="700" font-size="12.8" fill="#000" text-anchor="end" font-weight="normal" font-style="normal" >0</text>
<text x="151" y="720" font-size="12.8" fill="#000" text-anchor="end" font-weight="normal" font-style="normal" >471,983,112,801</text>
<text x="284" y="720" font-size="12.8" fill="#000" text-anchor="end" font-weight="normal" font-style="normal" >39,971</text>
<text x="417" y="720" font-size="12.8" fill="#000" text-anchor="end" font-weight="normal" font-style="normal" >4.00</text>
<text x="550" y="720" font-size="12.8" fill="#000" text-anchor="end" font-weight="normal" font-style="normal" >250</text>
<text x="647" y="720" font-size="12.8" fill="#000" text-anchor="end" font-weight="normal" font-style="normal" >47,198,156</text>
<text x="715.8" y="720" font-size="12.8" fill="#000" text-anchor="end" font-weight="normal" font-style="normal" >1</text>
<text x="779.8" y="720" font-size="12.8" fill="#000" text-anchor="end" font-weight="normal" font-style="normal" >0</text>
<text x="843.8" y="720" font-size="12.8" fill="#000" text-anchor="end" font-weight="normal" font-style="normal" >14</text>
<text x="907.8" y="720" font-size="12.8" fill="#000" text-anchor="end" font-weight="normal" font-style="normal" >31</text>
<text x="977.8" y="720" font-size="12.8" fill="#000" text-anchor="end" font-weight="normal" font-style="normal" >0</text>
<text x="151" y="740" font-size="12.8" fill="#000" text-anchor="end" font-weight="normal" font-style="normal" >471,983,142,945</text>
<text x="284" y="740" font-size="12.8" fill="#000" text-anchor="end" font-weight="normal" font-style="normal" >30,144</text>
<text x="417" y="740" font-size="12.8" fill="#000" text-anchor="end" font-weight="normal" font-style="normal" >3.01</text>
<text x="550" y="740" font-size="12.8" fill="#000" text-anchor="end" font-weight="normal" font-style="normal" >332</text>
<text x="647" y="740" font-size="12.8" fill="#000" text-anchor="end" font-weight="normal" font-style="normal" >47,198,156</text>
<text x="715.8" y="740" font-size="12.8" fill="#000" text-anchor="end" font-weight="normal" font-style="normal" >1</text>
<text x="779.8" y="740" font-size="12.8" fill="#000" text-anchor="end" font-weight="normal" font-style="normal" >0</text>
<text x="843.8" y="740" font-size="12.8" fill="#000" text-anchor="end" font-weight="normal" font-style="normal" >15</text>
<text x="907.8" y="740" font-size="12.8" fill="#000" text-anchor="end" font-weight="normal" font-style="normal" >31</text>
<text x="977.8" y="740" font-size="12.8" fill="#000" text-anchor="end" font-weight="normal" font-style="normal" >0</text>
<text x="151" y="760" font-size="12.8" fill="#000" text-anchor="end" font-weight="normal" font-style="normal" >471,983,172,858</text>
<text x="284" y="760" font-size="12.8" fill="#000" text-anchor="end" font-weight="normal" font-style="normal" >29,913</text>
<text x="417" y="760" font-size="12.8" fill="#000" text-anchor="end" font-weight="normal" font-style="normal" >2.99</text>
<text x="550" y="760" font-size="12.8" fill="#000" text-anchor="end" font-weight="normal" font-style="normal" >334</text>
<text x="647" y="760" font-size="12.8" fill="#000" text-anchor="end" font-weight="normal" font-style="normal" >47,198,156</text>
<text x="715.8" y="760" font-size="12.8" fill="#000" text-anchor="end" font-weight="normal" font-style="normal" >1</text>
<text x="779.8" y="760" font-size="12.8" fill="#000" text-anchor="end" font-weight="normal" font-style="normal" >0</text>
<text x="843.8" y="760" font-size="12.8" fill="#000" text-anchor="end" font-weight="normal" font-style="normal" >15</text>
<text x="907.8" y="760" font-size="12.8" fill="#000" text-anchor="end" font-weight="normal" font-style="normal" >31</text>
<text x="977.8" y="760" font-size="12.8" fill="#000" text-anchor="end" font-weight="normal" font-style="normal" >0</text>
<text x="151" y="780" font-size="12.8" fill="#000" text-anchor="end" font-weight="normal" font-style="normal" >471,983,202,870</text>
<text x="284" y="780" font-size="12.8" fill="#000" text-anchor="end" font-weight="normal" font-style="normal" >30,012</text>
<text x="417" y="780" font-size="12.8" fill="#000" text-anchor="end" font-weight="normal" font-style="normal" >3.00</text>
<text x="550" y="780" font-size="12.8" fill="#000" text-anchor="end" font-weight="normal" font-style="normal" >333</text>
<text x="647" y="780" font-size="12.8" fill="#000" text-anchor="end" font-weight="normal" font-style="normal" >47,198,156</text>
<text x="715.8" y="780" font-size="12.8" fill="#000" text-anchor="end" font-weight="normal" font-style="normal" >1</text>
<text x="779.8" y="780" font-size="12.8" fill="#000" text-anchor="end" font-weight="normal" font-style="normal" >0</text>
<text x="843.8" y="780" font-size="12.8" fill="#000" text-anchor="end" font-weight="normal" font-style="normal" >16</text>
<text x="907.8" y="780" font-size="12.8" fill="#000" text-anchor="end" font-weight="normal" font-style="normal" >31</text>
<text x="977.8" y="780" font-size="12.8" fill="#000" text-anchor="end" font-weight="normal" font-style="normal" >0</text>
<text x="151" y="800" font-size="12.8" fill="#000" text-anchor="end" font-weight="normal" font-style="normal" >471,983,232,836</text>
<text x="284" y="800" font-size="12.8" fill="#000" text-anchor="end" font-weight="normal" font-style="normal" >29,966</text>
<text x="417" y="800" font-size="12.8" fill="#000" text-anchor="end" font-weight="normal" font-style="normal" >3.00</text>
<text x="550" y="800" font-size="12.8" fill="#000" text-anchor="end" font-weight="normal" font-style="normal" >334</text>
<text x="647" y="800" font-size="12.8" fill="#000" text-anchor="end" font-weight="normal" font-style="normal" >47,198,171</text>
<text x="715.8" y="800" font-size="12.8" fill="#000" text-anchor="end" font-weight="normal" font-style="normal" >1</text>
<text x="779.8" y="800" font-size="12.8" fill="#000" text-anchor="end" font-weight="normal" font-style="normal" >0</text>
<text x="843.8" y="800" font-size="12.8" fill="#000" text-anchor="end" font-weight="normal" font-style="normal" >16</text>
<text x="907.8" y="800" font-size="12.8" fill="#000" text-anchor="end" font-weight="normal" font-style="normal" >31</text>
<text x="977.8" y="800" font-size="12.8" fill="#000" text-anchor="end" font-weight="normal" font-style="normal" >0</text>
<text x="151" y="820" font-size="12.8" fill="#000" text-anchor="end" font-weight="normal" font-style="normal" >471,983,262,825</text>
<text x="284" y="820" font-size="12.8" fill="#000" text-anchor="end" font-weight="normal" font-style="normal" >29,989</text>
<text x="417" y="820" font-size="12.8" fill="#000" text-anchor="end" font-weight="normal" font-style="normal" >3.00</text>
<text x="550" y="820" font-size="12.8" fill="#000" text-anchor="end" font-weight="normal" font-style="normal" >333</text>
<text x="647" y="820" font-size="12.8" fill="#000" text-anchor="end" font-weight="normal" font-style="normal" >47,198,171</text>
<text x="715.8" y="820" font-size="12.8" fill="#000" text-anchor="end" font-weight="normal" font-style="normal" >2</text>
<text x="779.8" y="820" font-size="12.8" fill="#000" text-anchor="end" font-weight="normal" font-style="normal" >0</text>
<text x="843.8" y="820" font-size="12.8" fill="#000" text-anchor="end" font-weight="normal" font-style="normal" >17</text>
<text x="907.8" y="820" font-size="12.8" fill="#000" text-anchor="end" font-weight="normal" font-style="normal" >31</text>
<text x="977.8" y="820" font-size="12.8" fill="#000" text-anchor="end" font-weight="normal" font-style="normal" >0</text>
<text x="151" y="840" font-size="12.8" fill="#000" text-anchor="end" font-weight="normal" font-style="normal" >471,983,292,837</text>
<text x="284" y="840" font-size="12.8" fill="#000" text-anchor="end" font-weight="normal" font-style="normal" >30,012</text>
<text x="417" y="840" font-size="12.8" fill="#000" text-anchor="end" font-weight="normal" font-style="normal" >3.00</text>
<text x="550" y="840" font-size="12.8" fill="#000" text-anchor="end" font-weight="normal" font-style="normal" >333</text>
<text x="647" y="840" font-size="12.8" fill="#000" text-anchor="end" font-weight="normal" font-style="normal" >47,198,171</text>
<text x="715.8" y="840" font-size="12.8" fill="#000" text-anchor="end" font-weight="normal" font-style="normal" >1</text>
<text x="779.8" y="840" font-size="12.8" fill="#000" text-anchor="end" font-weight="normal" font-style="normal" >0</text>
<text x="843.8" y="840" font-size="12.8" fill="#000" text-anchor="end" font-weight="normal" font-style="normal" >18</text>
<text x="907.8" y="840" font-size="12.8" fill="#000" text-anchor="end" font-weight="normal" font-style="normal" >31</text>
<text x="977.8" y="840" font-size="12.8" fill="#000" text-anchor="end" font-weight="normal" font-style="normal" >0</text>
<text x="151" y="860" font-size="12.8" fill="#000" text-anchor="end" font-weight="normal" font-style="normal" >471,983,322,919</text>
<text x="284" y="860" font-size="12.8" fill="#000" text-anchor="end" font-weight="normal" font-style="normal" >30,082</text>
<text x="417" y="860" font-size="12.8" fill="#000" text-anchor="end" font-weight="normal" font-style="normal" >3.01</text>
<text x="550" y="860" font-size="12.8" fill="#000" text-anchor="end" font-weight="normal" font-style="normal" >332</text>
<text x="647" y="860" font-size="12.8" fill="#000" text-anchor="end" font-weight="normal" font-style="normal" >47,198,171</text>
<text x="715.8" y="860" font-size="12.8" fill="#000" text-anchor="end" font-weight="normal" font-style="normal" >1</text>
<text x="779.8" y="860" font-size="12.8" fill="#000" text-anchor="end" font-weight="normal" font-style="normal" >0</text>
<text x="843.8" y="860" font-size="12.8" fill="#000" text-anchor="end" font-weight="normal" font-style="normal" >19</text>
<text x="907.8" y="860" font-size="12.8" fill="#000" text-anchor="end" font-weight="normal" font-style="normal" >31</text>
<text x="977.8" y="860" font-size="12.8" fill="#000" text-anchor="end" font-weight="normal" font-style="normal" >0</text>
<text x="151" y="880" font-size="12.8" fill="#000" text-anchor="end" font-weight="normal" font-style="normal" >471,983,352,817</text>
<text x="284" y="880" font-size="12.8" fill="#000" text-anchor="end" font-weight="normal" font-style="normal" >29,898</text>
<text x="417" y="880" font-size="12.8" fill="#000" text-anchor="end" font-weight="normal" font-style="normal" >2.99</text>
<text x="550" y="880" font-size="12.8" fill="#000" text-anchor="end" font-weight="normal" font-style="normal" >334</text>
<text x="647" y="880" font-size="12.8" fill="#000" text-anchor="end" font-weight="normal" font-style="normal" >47,198,171</text>
<text x="715.8" y="880" font-size="12.8" fill="#000" text-anchor="end" font-weight="normal" font-style="normal" >2</text>
<text x="779.8" y="880" font-size="12.8" fill="#000" text-anchor="end" font-weight="normal" font-style="normal" >0</text>
<text x="843.8" y="880" font-size="12.8" fill="#000" text-anchor="end" font-weight="normal" font-style="normal" >19</text>
<text x="907.8" y="880" font-size="12.8" fill="#000" text-anchor="end" font-weight="normal" font-style="normal" >31</text>
<text x="977.8" y="880" font-size="12.8" fill="#000" text-anchor="end" font-weight="normal" font-style="normal" >0</text>
<text x="151" y="900" font-size="12.8" fill="#000" text-anchor="end" font-weight="normal" font-style="normal" >471,983,382,892</text>
<text x="284" y="900" font-size="12.8" fill="#000" text-anchor="end" font-weight="normal" font-style="normal" >30,075</text>
<text x="417" y="900" font-size="12.8" fill="#000" text-anchor="end" font-weight="normal" font-style="normal" >3.01</text>
<text x="550" y="900" font-size="12.8" fill="#000" text-anchor="end" font-weight="normal" font-style="normal" >333</text>
<text x="647" y="900" font-size="12.8" fill="#000" text-anchor="end" font-weight="normal" font-style="normal" >47,198,187</text>
<text x="715.8" y="900" font-size="12.8" fill="#000" text-anchor="end" font-weight="normal" font-style="normal" >1</text>
<text x="779.8" y="900" font-size="12.8" fill="#000" text-anchor="end" font-weight="normal" font-style="normal" >0</text>
<text x="843.8" y="900" font-size="12.8" fill="#000" text-anchor="end" font-weight="normal" font-style="normal" >20</text>
<text x="907.8" y="900" font-size="12.8" fill="#000" text-anchor="end" font-weight="normal" font-style="normal" >31</text>
<text x="977.8" y="900" font-size="12.8" fill="#000" text-anchor="end" font-weight="normal" font-style="normal" >0</text>
<text x="151" y="920" font-size="12.8" fill="#000" text-anchor="end" font-weight="normal" font-style="normal" >471,983,412,909</text>
<text x="284" y="920" font-size="12.8" fill="#000" text-anchor="end" font-weight="normal" font-style="normal" >30,017</text>
<text x="417" y="920" font-size="12.8" fill="#000" text-anchor="end" font-weight="normal" font-style="normal" >3.00</text>
<text x="550" y="920" font-size="12.8" fill="#000" text-anchor="end" font-weight="normal" font-style="normal" >333</text>
<text x="647" y="920" font-size="12.8" fill="#000" text-anchor="end" font-weight="normal" font-style="normal" >47,198,187</text>
<text x="715.8" y="920" font-size="12.8" fill="#000" text-anchor="end" font-weight="normal" font-style="normal" >2</text>
<text x="779.8" y="920" font-size="12.8" fill="#000" text-anchor="end" font-weight="normal" font-style="normal" >0</text>
<text x="843.8" y="920" font-size="12.8" fill="#000" text-anchor="end" font-weight="normal" font-style="normal" >21</text>
<text x="907.8" y="920" font-size="12.8" fill="#000" text-anchor="end" font-weight="normal" font-style="normal" >31</text>
<text x="977.8" y="920" font-size="12.8" fill="#000" text-anchor="end" font-weight="normal" font-style="normal" >0</text>
<text x="151" y="940" font-size="12.8" fill="#000" text-anchor="end" font-weight="normal" font-style="normal" >471,983,452,855</text>
<text x="284" y="940" font-size="12.8" fill="#000" text-anchor="end" font-weight="normal" font-style="normal" >39,946</text>
<text x="417" y="940" font-size="12.8" fill="#000" text-anchor="end" font-weight="normal" font-style="normal" >3.99</text>
<text x="550" y="940" font-size="12.8" fill="#000" text-anchor="end" font-weight="normal" font-style="normal" >250</text>
<text x="647" y="940" font-size="12.8" fill="#000" text-anchor="end" font-weight="normal" font-style="normal" >47,198,187</text>
<text x="715.8" y="940" font-size="12.8" fill="#000" text-anchor="end" font-weight="normal" font-style="normal" >2</text>
<text x="779.8" y="940" font-size="12.8" fill="#000" text-anchor="end" font-weight="normal" font-style="normal" >0</text>
<text x="843.8" y="940" font-size="12.8" fill="#000" text-anchor="end" font-weight="normal" font-style="normal" >22</text>
<text x="907.8" y="940" font-size="12.8" fill="#000" text-anchor="end" font-weight="normal" font-style="normal" >31</text>
<text x="977.8" y="940" font-size="12.8" fill="#000" text-anchor="end" font-weight="normal" font-style="normal" >0</text>
<text x="151" y="960" font-size="12.8" fill="#000" text-anchor="end" font-weight="normal" font-style="normal" >471,983,482,865</text>
<text x="284" y="960" font-size="12.8" fill="#000" text-anchor="end" font-weight="normal" font-style="normal" >30,010</text>
<text x="417" y="960" font-size="12.8" fill="#000" text-anchor="end" font-weight="normal" font-style="normal" >3.00</text>
<text x="550" y="960" font-size="12.8" fill="#000" text-anchor="end" font-weight="normal" font-style="normal" >333</text>
<text x="647" y="960" font-size="12.8" fill="#000" text-anchor="end" font-weight="normal" font-style="normal" >47,198,187</text>
<text x="715.8" y="960" font-size="12.8" fill="#000" text-anchor="end" font-weight="normal" font-style="normal" >2</text>
<text x="779.8" y="960" font-size="12.8" fill="#000" text-anchor="end" font-weight="normal" font-style="normal" >0</text>
<text x="843.8" y="960" font-size="12.8" fill="#000" text-anchor="end" font-weight="normal" font-style="normal" >23</text>
<text x="907.8" y="960" font-size="12.8" fill="#000" text-anchor="end" font-weight="normal" font-style="normal" >31</text>
<text x="977.8" y="960" font-size="12.8" fill="#000" text-anchor="end" font-weight="normal" font-style="normal" >0</text>
<text x="151" y="980" font-size="12.8" fill="#000" text-anchor="end" font-weight="normal" font-style="normal" >471,983,512,821</text>
<text x="284" y="980" font-size="12.8" fill="#000" text-anchor="end" font-weight="normal" font-style="normal" >29,956</text>
<text x="417" y="980" font-size="12.8" fill="#000" text-anchor="end" font-weight="normal" font-style="normal" >3.00</text>
<text x="550" y="980" font-size="12.8" fill="#000" text-anchor="end" font-weight="normal" font-style="normal" >334</text>
<text x="647" y="980" font-size="12.8" fill="#000" text-anchor="end" font-weight="normal" font-style="normal" >47,198,187</text>
<text x="715.8" y="980" font-size="12.8" fill="#000" text-anchor="end" font-weight="normal" font-style="normal" >2</text>
<text x="779.8" y="980" font-size="12.8" fill="#000" text-anchor="end" font-weight="normal" font-style="normal" >0</text>
<text x="843.8" y="980" font-size="12.8" fill="#000" text-anchor="end" font-weight="normal" font-style="normal" >25</text>
<text x="907.8" y="980" font-size="12.8" fill="#000" text-anchor="end" font-weight="normal" font-style="normal" >31</text>
<text x="977.8" y="980" font-size="12.8" fill="#000" text-anchor="end" font-weight="normal" font-style="normal" >0</text>
<text x="151" y="1000" font-size="12.8" fill="#000" text-anchor="end" font-weight="normal" font-style="normal" >471,983,542,863</text>
<text x="284" y="1000" font-size="12.8" fill="#000" text-anchor="end" font-weight="normal" font-style="normal" >30,042</text>
<text x="417" y="1000" font-size="12.8" fill="#000" text-anchor="end" font-weight="normal" font-style="normal" >3.00</text>
<text x="550" y="1000" font-size="12.8" fill="#000" text-anchor="end" font-weight="normal" font-style="normal" >333</text>
<text x="647" y="1000" font-size="12.8" fill="#000" text-anchor="end" font-weight="normal" font-style="normal" >47,198,203</text>
<text x="715.8" y="1000" font-size="12.8" fill="#000" text-anchor="end" font-weight="normal" font-style="normal" >2</text>
<text x="779.8" y="1000" font-size="12.8" fill="#000" text-anchor="end" font-weight="normal" font-style="normal" >0</text>
<text x="843.8" y="1000" font-size="12.8" fill="#000" text-anchor="end" font-weight="normal" font-style="normal" >26</text>
<text x="907.8" y="1000" font-size="12.8" fill="#000" text-anchor="end" font-weight="normal" font-style="normal" >31</text>
<text x="977.8" y="1000" font-size="12.8" fill="#000" text-anchor="end" font-weight="normal" font-style="normal" >0</text>
<text x="151" y="1020" font-size="12.8" fill="#000" text-anchor="end" font-weight="normal" font-style="normal" >471,983,572,826</text>
<text x="284" y="1020" font-size="12.8" fill="#000" text-anchor="end" font-weight="normal" font-style="normal" >29,963</text>
<text x="417" y="1020" font-size="12.8" fill="#000" text-anchor="end" font-weight="normal" font-style="normal" >3.00</text>
<text x="550" y="1020" font-size="12.8" fill="#000" text-anchor="end" font-weight="normal" font-style="normal" >334</text>
<text x="647" y="1020" font-size="12.8" fill="#000" text-anchor="end" font-weight="normal" font-style="normal" >47,198,203</text>
<text x="715.8" y="1020" font-size="12.8" fill="#000" text-anchor="end" font-weight="normal" font-style="normal" >2</text>
<text x="779.8" y="1020" font-size="12.8" fill="#000" text-anchor="end" font-weight="normal" font-style="normal" >0</text>
<text x="843.8" y="1020" font-size="12.8" fill="#000" text-anchor="end" font-weight="normal" font-style="normal" >27</text>
<text x="907.8" y="1020" font-size="12.8" fill="#000" text-anchor="end" font-weight="normal" font-style="normal" >31</text>
<text x="977.8" y="1020" font-size="12.8" fill="#000" text-anchor="end" font-weight="normal" font-style="normal" >0</text>
<text x="151" y="1040" font-size="12.8" fill="#000" text-anchor="end" font-weight="normal" font-style="normal" >471,983,603,110</text>
<text x="284" y="1040" font-size="12.8" fill="#000" text-anchor="end" font-weight="normal" font-style="normal" >30,284</text>
<text x="417" y="1040" font-size="12.8" fill="#000" text-anchor="end" font-weight="normal" font-style="normal" >3.03</text>
<text x="550" y="1040" font-size="12.8" fill="#000" text-anchor="end" font-weight="normal" font-style="normal" >330</text>
<text x="647" y="1040" font-size="12.8" fill="#000" text-anchor="end" font-weight="normal" font-style="normal" >47,198,203</text>
<text x="715.8" y="1040" font-size="12.8" fill="#000" text-anchor="end" font-weight="normal" font-style="normal" >2</text>
<text x="779.8" y="1040" font-size="12.8" fill="#000" text-anchor="end" font-weight="normal" font-style="normal" >0</text>
<text x="843.8" y="1040" font-size="12.8" fill="#000" text-anchor="end" font-weight="normal" font-style="normal" >29</text>
<text x="907.8" y="1040" font-size="12.8" fill="#000" text-anchor="end" font-weight="normal" font-style="normal" >31</text>
<text x="977.8" y="1040" font-size="12.8" fill="#000" text-anchor="end" font-weight="normal" font-style="normal" >0</text>
<text x="151" y="1060" font-size="12.8" fill="#000" text-anchor="end" font-weight="normal" font-style="normal" >471,983,632,875</text>
<text x="284" y="1060" font-size="12.8" fill="#000" text-anchor="end" font-weight="normal" font-style="normal" >29,765</text>
<text x="417" y="1060" font-size="12.8" fill="#000" text-anchor="end" font-weight="normal" font-style="normal" >2.98</text>
<text x="550" y="1060" font-size="12.8" fill="#000" text-anchor="end" font-weight="normal" font-style="normal" >336</text>
<text x="647" y="1060" font-size="12.8" fill="#000" text-anchor="end" font-weight="normal" font-style="normal" >47,198,203</text>
<text x="715.8" y="1060" font-size="12.8" fill="#000" text-anchor="end" font-weight="normal" font-style="normal" >2</text>
<text x="779.8" y="1060" font-size="12.8" fill="#000" text-anchor="end" font-weight="normal" font-style="normal" >0</text>
<text x="843.8" y="1060" font-size="12.8" fill="#000" text-anchor="end" font-weight="normal" font-style="normal" >30</text>
<text x="907.8" y="1060" font-size="12.8" fill="#000" text-anchor="end" font-weight="normal" font-style="normal" >31</text>
<text x="977.8" y="1060" font-size="12.8" fill="#000" text-anchor="end" font-weight="normal" font-style="normal" >0</text>
<text x="151" y="1080" font-size="12.8" fill="#000" text-anchor="end" font-weight="normal" font-style="normal" >471,983,662,830</text>
<text x="284" y="1080" font-size="12.8" fill="#000" text-anchor="end" font-weight="normal" font-style="normal" >29,955</text>
<text x="417" y="1080" font-size="12.8" fill="#000" text-anchor="end" font-weight="normal" font-style="normal" >3.00</text>
<text x="550" y="1080" font-size="12.8" fill="#000" text-anchor="end" font-weight="normal" font-style="normal" >334</text>
<text x="647" y="1080" font-size="12.8" fill="#000" text-anchor="end" font-weight="normal" font-style="normal" >47,198,203</text>
<text x="715.8" y="1080" font-size="12.8" fill="#000" text-anchor="end" font-weight="normal" font-style="normal" >3</text>
<text x="779.8" y="1080" font-size="12.8" fill="#000" text-anchor="end" font-weight="normal" font-style="normal" >0</text>
<text x="843.8" y="1080" font-size="12.8" fill="#000" text-anchor="end" font-weight="normal" font-style="normal" >31</text>
<text x="907.8" y="1080" font-size="12.8" fill="#000" text-anchor="end" font-weight="normal" font-style="normal" >31</text>
<text x="977.8" y="1080" font-size="12.8" fill="#000" text-anchor="end" font-weight="normal" font-style="normal" >0</text>
<text x="151" y="1100" font-size="12.8" fill="#000" text-anchor="end" font-weight="normal" font-style="normal" >471,983,692,833</text>
<text x="284" y="1100" font-size="12.8" fill="#000" text-anchor="end" font-weight="normal" font-style="normal" >30,003</text>
<text x="417" y="1100" font-size="12.8" fill="#000" text-anchor="end" font-weight="normal" font-style="normal" >3.00</text>
<text x="550" y="1100" font-size="12.8" fill="#000" text-anchor="end" font-weight="normal" font-style="normal" >333</text>
<text x="647" y="1100" font-size="12.8" fill="#000" text-anchor="end" font-weight="normal" font-style="normal" >47,198,218</text>
<text x="715.8" y="1100" font-size="12.8" fill="#000" text-anchor="end" font-weight="normal" font-style="normal" >2</text>
<text x="779.8" y="1100" font-size="12.8" fill="#000" text-anchor="end" font-weight="normal" font-style="normal" >0</text>
<text x="843.8" y="1100" font-size="12.8" fill="#000" text-anchor="end" font-weight="normal" font-style="normal" >33</text>
<text x="907.8" y="1100" font-size="12.8" fill="#000" text-anchor="end" font-weight="normal" font-style="normal" >31</text>
<text x="977.8" y="1100" font-size="12.8" fill="#000" text-anchor="end" font-weight="normal" font-style="normal" >0</text>
<text x="151" y="1120" font-size="12.8" fill="#000" text-anchor="end" font-weight="normal" font-style="normal" >471,983,722,831</text>
<text x="284" y="1120" font-size="12.8" fill="#000" text-anchor="end" font-weight="normal" font-style="normal" >29,998</text>
<text x="417" y="1120" font-size="12.8" fill="#000" text-anchor="end" font-weight="normal" font-style="normal" >3.00</text>
<text x="550" y="1120" font-size="12.8" fill="#000" text-anchor="end" font-weight="normal" font-style="normal" >333</text>
<text x="647" y="1120" font-size="12.8" fill="#000" text-anchor="end" font-weight="normal" font-style="normal" >47,198,218</text>
<text x="715.8" y="1120" font-size="12.8" fill="#000" text-anchor="end" font-weight="normal" font-style="normal" >2</text>
<text x="779.8" y="1120" font-size="12.8" fill="#000" text-anchor="end" font-weight="normal" font-style="normal" >0</text>
<text x="843.8" y="1120" font-size="12.8" fill="#000" text-anchor="end" font-weight="normal" font-style="normal" >35</text>
<text x="907.8" y="1120" font-size="12.8" fill="#000" text-anchor="end" font-weight="normal" font-style="normal" >31</text>
<text x="977.8" y="1120" font-size="12.8" fill="#000" text-anchor="end" font-weight="normal" font-style="normal" >0</text>
<rect x="996.5" y="349.5" width="2132" height="766" fill="#fff" stroke="#d9d9d9"/>
<text x="2209.3" y="377.2" font-size="16.5" fill="#595959" text-anchor="middle" font-weight="normal" font-style="normal" >EquivalentHz</text>
<rect x="1055" y="398" width="2072" height="1" fill="#d9d9d9" />
<rect x="1055" y="496" width="2072" height="1" fill="#d9d9d9" />
<rect x="1055" y="594" width="2072" height="1" fill="#d9d9d9" />
<rect x="1055" y="692" width="2072" height="1" fill="#d9d9d9" />
<rect x="1055" y="790" width="2072" height="1" fill="#d9d9d9" />
<rect x="1055" y="888" width="2072" height="1" fill="#d9d9d9" />
<rect x="1055" y="986" width="2072" height="1" fill="#d9d9d9" />
<rect x="1383" y="398" width="1" height="686" fill="#d9d9d9" />
<rect x="1713" y="398" width="1" height="686" fill="#d9d9d9" />
<rect x="2042" y="398" width="1" height="686" fill="#d9d9d9" />
<rect x="2371" y="398" width="1" height="686" fill="#d9d9d9" />
<rect x="2700" y="398" width="1" height="686" fill="#d9d9d9" />
<rect x="3030" y="398" width="1" height="686" fill="#d9d9d9" />
<rect x="1054" y="398" width="1" height="687" fill="#bfbfbf" />
<rect x="1054" y="1084" width="2073" height="1" fill="#bfbfbf" />
<text x="1040.5" y="401.0" font-size="11.6" fill="#595959" text-anchor="end" font-weight="normal" font-style="normal" >700</text>
<text x="1040.5" y="499.0" font-size="11.6" fill="#595959" text-anchor="end" font-weight="normal" font-style="normal" >600</text>
<text x="1040.5" y="597.0" font-size="11.6" fill="#595959" text-anchor="end" font-weight="normal" font-style="normal" >500</text>
<text x="1040.5" y="695.0" font-size="11.6" fill="#595959" text-anchor="end" font-weight="normal" font-style="normal" >400</text>
<text x="1040.5" y="793.0" font-size="11.6" fill="#595959" text-anchor="end" font-weight="normal" font-style="normal" >300</text>
<text x="1040.5" y="891.0" font-size="11.6" fill="#595959" text-anchor="end" font-weight="normal" font-style="normal" >200</text>
<text x="1040.5" y="989.0" font-size="11.6" fill="#595959" text-anchor="end" font-weight="normal" font-style="normal" >100</text>
<text x="1033.5" y="1086" font-size="11.6" fill="#595959" text-anchor="middle" font-weight="normal" font-style="normal" >-</text>
<text x="1054.5" y="1103.3" font-size="10.9" fill="#595959" text-anchor="middle" font-weight="normal" font-style="normal" >471,980,000,000</text>
<text x="1383.85" y="1103.3" font-size="10.9" fill="#595959" text-anchor="middle" font-weight="normal" font-style="normal" >471,985,000,000</text>
<text x="1713.2" y="1103.3" font-size="10.9" fill="#595959" text-anchor="middle" font-weight="normal" font-style="normal" >471,990,000,000</text>
<text x="2042.5500000000002" y="1103.3" font-size="10.9" fill="#595959" text-anchor="middle" font-weight="normal" font-style="normal" >471,995,000,000</text>
<text x="2371.9" y="1103.3" font-size="10.9" fill="#595959" text-anchor="middle" font-weight="normal" font-style="normal" >472,000,000,000</text>
<text x="2701.25" y="1103.3" font-size="10.9" fill="#595959" text-anchor="middle" font-weight="normal" font-style="normal" >472,005,000,000</text>
<text x="3030.6000000000004" y="1103.3" font-size="10.9" fill="#595959" text-anchor="middle" font-weight="normal" font-style="normal" >472,010,000,000</text>
<path d="M1212.5 757.4a3.5 3.5 0 1 0 7 0a3.5 3.5 0 1 0 -7 0M1214.8 757.1a3.5 3.5 0 1 0 7 0a3.5 3.5 0 1 0 -7 0M1217.1 757.8a3.5 3.5 0 1 0 7 0a3.5 3.5 0 1 0 -7 0M1219.4 757.0a3.5 3.5 0 1 0 7 0a3.5 3.5 0 1 0 -7 0M1221.7 757.7a3.5 3.5 0 1 0 7 0a3.5 3.5 0 1 0 -7 0M1224.0 757.4a3.5 3.5 0 1 0 7 0a3.5 3.5 0 1 0 -7 0M1226.3 757.0a3.5 3.5 0 1 0 7 0a3.5 3.5 0 1 0 -7 0M1228.6 757.6a3.5 3.5 0 1 0 7 0a3.5 3.5 0 1 0 -7 0M1230.9 757.0a3.5 3.5 0 1 0 7 0a3.5 3.5 0 1 0 -7 0M1233.2 757.5a3.5 3.5 0 1 0 7 0a3.5 3.5 0 1 0 -7 0M1235.5 757.0a3.5 3.5 0 1 0 7 0a3.5 3.5 0 1 0 -7 0M1237.8 757.0a3.5 3.5 0 1 0 7 0a3.5 3.5 0 1 0 -7 0M1240.1 757.5a3.5 3.5 0 1 0 7 0a3.5 3.5 0 1 0 -7 0M1242.4 758.1a3.5 3.5 0 1 0 7 0a3.5 3.5 0 1 0 -7 0M1244.7 757.1a3.5 3.5 0 1 0 7 0a3.5 3.5 0 1 0 -7 0M1247.0 757.2a3.5 3.5 0 1 0 7 0a3.5 3.5 0 1 0 -7 0M1249.3 757.8a3.5 3.5 0 1 0 7 0a3.5 3.5 0 1 0 -7 0M1251.6 758.2a3.5 3.5 0 1 0 7 0a3.5 3.5 0 1 0 -7 0M1253.9 757.7a3.5 3.5 0 1 0 7 0a3.5 3.5 0 1 0 -7 0M1256.2 757.5a3.5 3.5 0 1 0 7 0a3.5 3.5 0 1 0 -7 0M1258.5 758.3a3.5 3.5 0 1 0 7 0a3.5 3.5 0 1 0 -7 0M1260.8 757.0a3.5 3.5 0 1 0 7 0a3.5 3.5 0 1 0 -7 0M1263.1 758.1a3.5 3.5 0 1 0 7 0a3.5 3.5 0 1 0 -7 0M1265.4 757.3a3.5 3.5 0 1 0 7 0a3.5 3.5 0 1 0 -7 0M1267.7 757.1a3.5 3.5 0 1 0 7 0a3.5 3.5 0 1 0 -7 0M1270.0 757.1a3.5 3.5 0 1 0 7 0a3.5 3.5 0 1 0 -7 0M1272.3 757.3a3.5 3.5 0 1 0 7 0a3.5 3.5 0 1 0 -7 0M1274.6 758.0a3.5 3.5 0 1 0 7 0a3.5 3.5 0 1 0 -7 0M1276.9 757.2a3.5 3.5 0 1 0 7 0a3.5 3.5 0 1 0 -7 0M1279.2 757.7a3.5 3.5 0 1 0 7 0a3.5 3.5 0 1 0 -7 0M1281.5 757.8a3.5 3.5 0 1 0 7 0a3.5 3.5 0 1 0 -7 0M1283.8 757.4a3.5 3.5 0 1 0 7 0a3.5 3.5 0 1 0 -7 0M1286.1 757.7a3.5 3.5 0 1 0 7 0a3.5 3.5 0 1 0 -7 0M1288.4 757.0a3.5 3.5 0 1 0 7 0a3.5 3.5 0 1 0 -7 0M1290.7 757.0a3.5 3.5 0 1 0 7 0a3.5 3.5 0 1 0 -7 0M1293.0 757.2a3.5 3.5 0 1 0 7 0a3.5 3.5 0 1 0 -7 0M1295.3 757.9a3.5 3.5 0 1 0 7 0a3.5 3.5 0 1 0 -7 0M1297.6 757.5a3.5 3.5 0 1 0 7 0a3.5 3.5 0 1 0 -7 0M1299.9 757.3a3.5 3.5 0 1 0 7 0a3.5 3.5 0 1 0 -7 0M1302.2 757.7a3.5 3.5 0 1 0 7 0a3.5 3.5 0 1 0 -7 0M1304.5 757.5a3.5 3.5 0 1 0 7 0a3.5 3.5 0 1 0 -7 0M1306.8 757.3a3.5 3.5 0 1 0 7 0a3.5 3.5 0 1 0 -7 0M1309.1 758.0a3.5 3.5 0 1 0 7 0a3.5 3.5 0 1 0 -7 0M1311.4 757.9a3.5 3.5 0 1 0 7 0a3.5 3.5 0 1 0 -7 0M1313.7 757.2a3.5 3.5 0 1 0 7 0a3.5 3.5 0 1 0 -7 0M1316.0 757.7a3.5 3.5 0 1 0 7 0a3.5 3.5 0 1 0 -7 0M1318.3 757.6a3.5 3.5 0 1 0 7 0a3.5 3.5 0 1 0 -7 0M1320.6 758.1a3.5 3.5 0 1 0 7 0a3.5 3.5 0 1 0 -7 0M1322.9 757.9a3.5 3.5 0 1 0 7 0a3.5 3.5 0 1 0 -7 0M1325.2 757.3a3.5 3.5 0 1 0 7 0a3.5 3.5 0 1 0 -7 0M1327.5 758.3a3.5 3.5 0 1 0 7 0a3.5 3.5 0 1 0 -7 0M1329.8 757.1a3.5 3.5 0 1 0 7 0a3.5 3.5 0 1 0 -7 0M1332.1 757.5a3.5 3.5 0 1 0 7 0a3.5 3.5 0 1 0 -7 0M1334.4 758.0a3.5 3.5 0 1 0 7 0a3.5 3.5 0 1 0 -7 0M1336.7 757.1a3.5 3.5 0 1 0 7 0a3.5 3.5 0 1 0 -7 0M1339.0 757.6a3.5 3.5 0 1 0 7 0a3.5 3.5 0 1 0 -7 0M1341.3 757.0a3.5 3.5 0 1 0 7 0a3.5 3.5 0 1 0 -7 0M1343.6 757.8a3.5 3.5 0 1 0 7 0a3.5 3.5 0 1 0 -7 0M1345.9 758.0a3.5 3.5 0 1 0 7 0a3.5 3.5 0 1 0 -7 0M1348.2 757.7a3.5 3.5 0 1 0 7 0a3.5 3.5 0 1 0 -7 0M1350.5 758.1a3.5 3.5 0 1 0 7 0a3.5 3.5 0 1 0 -7 0M1352.8 757.3a3.5 3.5 0 1 0 7 0a3.5 3.5 0 1 0 -7 0M1355.1 757.9a3.5 3.5 0 1 0 7 0a3.5 3.5 0 1 0 -7 0M1357.4 757.7a3.5 3.5 0 1 0 7 0a3.5 3.5 0 1 0 -7 0M1359.7 757.7a3.5 3.5 0 1 0 7 0a3.5 3.5 0 1 0 -7 0M1362.0 757.5a3.5 3.5 0 1 0 7 0a3.5 3.5 0 1 0 -7 0M1364.3 758.1a3.5 3.5 0 1 0 7 0a3.5 3.5 0 1 0 -7 0M1366.6 758.2a3.5 3.5 0 1 0 7 0a3.5 3.5 0 1 0 -7 0M1368.9 757.6a3.5 3.5 0 1 0 7 0a3.5 3.5 0 1 0 -7 0M1371.2 757.8a3.5 3.5 0 1 0 7 0a3.5 3.5 0 1 0 -7 0M1373.5 757.0a3.5 3.5 0 1 0 7 0a3.5 3.5 0 1 0 -7 0M1375.8 757.9a3.5 3.5 0 1 0 7 0a3.5 3.5 0 1 0 -7 0M1378.1 757.8a3.5 3.5 0 1 0 7 0a3.5 3.5 0 1 0 -7 0M1380.4 758.3a3.5 3.5 0 1 0 7 0a3.5 3.5 0 1 0 -7 0M1382.7 758.1a3.5 3.5 0 1 0 7 0a3.5 3.5 0 1 0 -7 0M1385.0 757.3a3.5 3.5 0 1 0 7 0a3.5 3.5 0 1 0 -7 0M1387.3 757.4a3.5 3.5 0 1 0 7 0a3.5 3.5 0 1 0 -7 0M1389.6 757.8a3.5 3.5 0 1 0 7 0a3.5 3.5 0 1 0 -7 0M1391.9 756.9a3.5 3.5 0 1 0 7 0a3.5 3.5 0 1 0 -7 0M1394.2 757.5a3.5 3.5 0 1 0 7 0a3.5 3.5 0 1 0 -7 0M1396.5 757.1a3.5 3.5 0 1 0 7 0a3.5 3.5 0 1 0 -7 0M1398.8 757.1a3.5 3.5 0 1 0 7 0a3.5 3.5 0 1 0 -7 0M1401.1 757.0a3.5 3.5 0 1 0 7 0a3.5 3.5 0 1 0 -7 0M1403.4 758.0a3.5 3.5 0 1 0 7 0a3.5 3.5 0 1 0 -7 0M1405.7 757.1a3.5 3.5 0 1 0 7 0a3.5 3.5 0 1 0 -7 0M1408.0 757.2a3.5 3.5 0 1 0 7 0a3.5 3.5 0 1 0 -7 0M1410.3 757.4a3.5 3.5 0 1 0 7 0a3.5 3.5 0 1 0 -7 0M1412.6 758.1a3.5 3.5 0 1 0 7 0a3.5 3.5 0 1 0 -7 0M1414.9 757.0a3.5 3.5 0 1 0 7 0a3.5 3.5 0 1 0 -7 0M1417.2 757.5a3.5 3.5 0 1 0 7 0a3.5 3.5 0 1 0 -7 0M1419.5 757.7a3.5 3.5 0 1 0 7 0a3.5 3.5 0 1 0 -7 0M1421.8 758.1a3.5 3.5 0 1 0 7 0a3.5 3.5 0 1 0 -7 0M1424.1 758.0a3.5 3.5 0 1 0 7 0a3.5 3.5 0 1 0 -7 0M1426.4 758.1a3.5 3.5 0 1 0 7 0a3.5 3.5 0 1 0 -7 0M1428.7 757.3a3.5 3.5 0 1 0 7 0a3.5 3.5 0 1 0 -7 0M1431.0 757.5a3.5 3.5 0 1 0 7 0a3.5 3.5 0 1 0 -7 0M1433.3 757.4a3.5 3.5 0 1 0 7 0a3.5 3.5 0 1 0 -7 0M1435.6 758.1a3.5 3.5 0 1 0 7 0a3.5 3.5 0 1 0 -7 0M1437.9 758.2a3.5 3.5 0 1 0 7 0a3.5 3.5 0 1 0 -7 0M1440.2 757.1a3.5 3.5 0 1 0 7 0a3.5 3.5 0 1 0 -7 0M1442.5 757.1a3.5 3.5 0 1 0 7 0a3.5 3.5 0 1 0 -7 0M1444.8 757.2a3.5 3.5 0 1 0 7 0a3.5 3.5 0 1 0 -7 0M1447.1 757.2a3.5 3.5 0 1 0 7 0a3.5 3.5 0 1 0 -7 0M1449.4 757.6a3.5 3.5 0 1 0 7 0a3.5 3.5 0 1 0 -7 0M1451.7 757.7a3.5 3.5 0 1 0 7 0a3.5 3.5 0 1 0 -7 0M1454.0 757.3a3.5 3.5 0 1 0 7 0a3.5 3.5 0 1 0 -7 0M1456.3 756.9a3.5 3.5 0 1 0 7 0a3.5 3.5 0 1 0 -7 0M1458.6 757.5a3.5 3.5 0 1 0 7 0a3.5 3.5 0 1 0 -7 0M1460.9 757.4a3.5 3.5 0 1 0 7 0a3.5 3.5 0 1 0 -7 0M1463.2 757.7a3.5 3.5 0 1 0 7 0a3.5 3.5 0 1 0 -7 0M1465.5 758.2a3.5 3.5 0 1 0 7 0a3.5 3.5 0 1 0 -7 0M1467.8 757.9a3.5 3.5 0 1 0 7 0a3.5 3.5 0 1 0 -7 0M1470.1 757.6a3.5 3.5 0 1 0 7 0a3.5 3.5 0 1 0 -7 0M1472.4 757.8a3.5 3.5 0 1 0 7 0a3.5 3.5 0 1 0 -7 0M1474.7 757.8a3.5 3.5 0 1 0 7 0a3.5 3.5 0 1 0 -7 0M1477.0 757.0a3.5 3.5 0 1 0 7 0a3.5 3.5 0 1 0 -7 0M1479.3 758.2a3.5 3.5 0 1 0 7 0a3.5 3.5 0 1 0 -7 0M1481.6 758.0a3.5 3.5 0 1 0 7 0a3.5 3.5 0 1 0 -7 0M1483.9 758.1a3.5 3.5 0 1 0 7 0a3.5 3.5 0 1 0 -7 0M1486.2 758.0a3.5 3.5 0 1 0 7 0a3.5 3.5 0 1 0 -7 0M1488.5 757.4a3.5 3.5 0 1 0 7 0a3.5 3.5 0 1 0 -7 0M1490.8 757.5a3.5 3.5 0 1 0 7 0a3.5 3.5 0 1 0 -7 0M1493.1 757.0a3.5 3.5 0 1 0 7 0a3.5 3.5 0 1 0 -7 0M1495.4 757.8a3.5 3.5 0 1 0 7 0a3.5 3.5 0 1 0 -7 0M1497.7 757.0a3.5 3.5 0 1 0 7 0a3.5 3.5 0 1 0 -7 0M1500.0 757.0a3.5 3.5 0 1 0 7 0a3.5 3.5 0 1 0 -7 0M1502.3 757.2a3.5 3.5 0 1 0 7 0a3.5 3.5 0 1 0 -7 0M1504.6 757.1a3.5 3.5 0 1 0 7 0a3.5 3.5 0 1 0 -7 0M1506.9 757.4a3.5 3.5 0 1 0 7 0a3.5 3.5 0 1 0 -7 0M1509.2 757.0a3.5 3.5 0 1 0 7 0a3.5 3.5 0 1 0 -7 0M1511.5 756.9a3.5 3.5 0 1 0 7 0a3.5 3.5 0 1 0 -7 0M1513.8 757.1a3.5 3.5 0 1 0 7 0a3.5 3.5 0 1 0 -7 0M1516.1 757.0a3.5 3.5 0 1 0 7 0a3.5 3.5 0 1 0 -7 0M1518.4 757.4a3.5 3.5 0 1 0 7 0a3.5 3.5 0 1 0 -7 0M1520.7 756.9a3.5 3.5 0 1 0 7 0a3.5 3.5 0 1 0 -7 0M1523.0 758.1a3.5 3.5 0 1 0 7 0a3.5 3.5 0 1 0 -7 0M1525.3 757.8a3.5 3.5 0 1 0 7 0a3.5 3.5 0 1 0 -7 0M1527.6 757.1a3.5 3.5 0 1 0 7 0a3.5 3.5 0 1 0 -7 0M1529.9 757.3a3.5 3.5 0 1 0 7 0a3.5 3.5 0 1 0 -7 0M1532.2 757.4a3.5 3.5 0 1 0 7 0a3.5 3.5 0 1 0 -7 0M1534.5 757.4a3.5 3.5 0 1 0 7 0a3.5 3.5 0 1 0 -7 0M1536.8 757.1a3.5 3.5 0 1 0 7 0a3.5 3.5 0 1 0 -7 0M1539.1 758.1a3.5 3.5 0 1 0 7 0a3.5 3.5 0 1 0 -7 0M1541.4 758.3a3.5 3.5 0 1 0 7 0a3.5 3.5 0 1 0 -7 0M1543.7 757.6a3.5 3.5 0 1 0 7 0a3.5 3.5 0 1 0 -7 0M1546.0 757.6a3.5 3.5 0 1 0 7 0a3.5 3.5 0 1 0 -7 0M1548.3 757.0a3.5 3.5 0 1 0 7 0a3.5 3.5 0 1 0 -7 0M1550.6 757.0a3.5 3.5 0 1 0 7 0a3.5 3.5 0 1 0 -7 0M1552.9 757.4a3.5 3.5 0 1 0 7 0a3.5 3.5 0 1 0 -7 0M1555.2 757.3a3.5 3.5 0 1 0 7 0a3.5 3.5 0 1 0 -7 0M1557.5 758.1a3.5 3.5 0 1 0 7 0a3.5 3.5 0 1 0 -7 0M1559.8 757.1a3.5 3.5 0 1 0 7 0a3.5 3.5 0 1 0 -7 0M1562.1 756.9a3.5 3.5 0 1 0 7 0a3.5 3.5 0 1 0 -7 0M1564.4 758.2a3.5 3.5 0 1 0 7 0a3.5 3.5 0 1 0 -7 0M1566.7 757.6a3.5 3.5 0 1 0 7 0a3.5 3.5 0 1 0 -7 0M1569.0 757.1a3.5 3.5 0 1 0 7 0a3.5 3.5 0 1 0 -7 0M1571.3 757.7a3.5 3.5 0 1 0 7 0a3.5 3.5 0 1 0 -7 0M1573.6 756.9a3.5 3.5 0 1 0 7 0a3.5 3.5 0 1 0 -7 0M1575.9 757.6a3.5 3.5 0 1 0 7 0a3.5 3.5 0 1 0 -7 0M1578.2 758.3a3.5 3.5 0 1 0 7 0a3.5 3.5 0 1 0 -7 0M1580.5 758.1a3.5 3.5 0 1 0 7 0a3.5 3.5 0 1 0 -7 0M1582.8 757.9a3.5 3.5 0 1 0 7 0a3.5 3.5 0 1 0 -7 0M1585.1 757.3a3.5 3.5 0 1 0 7 0a3.5 3.5 0 1 0 -7 0M1587.4 757.4a3.5 3.5 0 1 0 7 0a3.5 3.5 0 1 0 -7 0M1589.7 757.1a3.5 3.5 0 1 0 7 0a3.5 3.5 0 1 0 -7 0M1592.0 758.0a3.5 3.5 0 1 0 7 0a3.5 3.5 0 1 0 -7 0M1594.3 757.6a3.5 3.5 0 1 0 7 0a3.5 3.5 0 1 0 -7 0M1596.6 758.0a3.5 3.5 0 1 0 7 0a3.5 3.5 0 1 0 -7 0M1598.9 757.4a3.5 3.5 0 1 0 7 0a3.5 3.5 0 1 0 -7 0M1601.2 757.2a3.5 3.5 0 1 0 7 0a3.5 3.5 0 1 0 -7 0M1603.5 758.0a3.5 3.5 0 1 0 7 0a3.5 3.5 0 1 0 -7 0M1605.8 758.3a3.5 3.5 0 1 0 7 0a3.5 3.5 0 1 0 -7 0M1608.1 758.1a3.5 3.5 0 1 0 7 0a3.5 3.5 0 1 0 -7 0M1610.4 758.0a3.5 3.5 0 1 0 7 0a3.5 3.5 0 1 0 -7 0M1612.7 758.0a3.5 3.5 0 1 0 7 0a3.5 3.5 0 1 0 -7 0M1615.0 757.9a3.5 3.5 0 1 0 7 0a3.5 3.5 0 1 0 -7 0M1617.3 757.2a3.5 3.5 0 1 0 7 0a3.5 3.5 0 1 0 -7 0M1619.6 757.6a3.5 3.5 0 1 0 7 0a3.5 3.5 0 1 0 -7 0M1621.9 757.4a3.5 3.5 0 1 0 7 0a3.5 3.5 0 1 0 -7 0M1624.2 756.9a3.5 3.5 0 1 0 7 0a3.5 3.5 0 1 0 -7 0M1626.5 756.9a3.5 3.5 0 1 0 7 0a3.5 3.5 0 1 0 -7 0M1628.8 757.3a3.5 3.5 0 1 0 7 0a3.5 3.5 0 1 0 -7 0M1631.1 757.3a3.5 3.5 0 1 0 7 0a3.5 3.5 0 1 0 -7 0M1633.4 757.9a3.5 3.5 0 1 0 7 0a3.5 3.5 0 1 0 -7 0M1635.7 758.2a3.5 3.5 0 1 0 7 0a3.5 3.5 0 1 0 -7 0M1638.0 757.5a3.5 3.5 0 1 0 7 0a3.5 3.5 0 1 0 -7 0M1640.3 758.2a3.5 3.5 0 1 0 7 0a3.5 3.5 0 1 0 -7 0M1642.6 758.3a3.5 3.5 0 1 0 7 0a3.5 3.5 0 1 0 -7 0M1644.9 758.2a3.5 3.5 0 1 0 7 0a3.5 3.5 0 1 0 -7 0M1647.2 757.4a3.5 3.5 0 1 0 7 0a3.5 3.5 0 1 0 -7 0M1649.5 757.2a3.5 3.5 0 1 0 7 0a3.5 3.5 0 1 0 -7 0M1651.8 757.2a3.5 3.5 0 1 0 7 0a3.5 3.5 0 1 0 -7 0M1654.1 757.2a3.5 3.5 0 1 0 7 0a3.5 3.5 0 1 0 -7 0M1656.4 757.2a3.5 3.5 0 1 0 7 0a3.5 3.5 0 1 0 -7 0M1658.7 757.8a3.5 3.5 0 1 0 7 0a3.5 3.5 0 1 0 -7 0M1661.0 758.2a3.5 3.5 0 1 0 7 0a3.5 3.5 0 1 0 -7 0M1663.3 758.1a3.5 3.5 0 1 0 7 0a3.5 3.5 0 1 0 -7 0M1665.6 757.6a3.5 3.5 0 1 0 7 0a3.5 3.5 0 1 0 -7 0M1667.9 757.8a3.5 3.5 0 1 0 7 0a3.5 3.5 0 1 0 -7 0M1670.2 758.0a3.5 3.5 0 1 0 7 0a3.5 3.5 0 1 0 -7 0M1672.5 757.0a3.5 3.5 0 1 0 7 0a3.5 3.5 0 1 0 -7 0M1674.8 757.8a3.5 3.5 0 1 0 7 0a3.5 3.5 0 1 0 -7 0M1677.1 758.2a3.5 3.5 0 1 0 7 0a3.5 3.5 0 1 0 -7 0M1679.4 758.0a3.5 3.5 0 1 0 7 0a3.5 3.5 0 1 0 -7 0M1681.7 758.0a3.5 3.5 0 1 0 7 0a3.5 3.5 0 1 0 -7 0M1684.0 757.6a3.5 3.5 0 1 0 7 0a3.5 3.5 0 1 0 -7 0M1686.3 757.1a3.5 3.5 0 1 0 7 0a3.5 3.5 0 1 0 -7 0M1688.6 758.0a3.5 3.5 0 1 0 7 0a3.5 3.5 0 1 0 -7 0M1690.9 757.4a3.5 3.5 0 1 0 7 0a3.5 3.5 0 1 0 -7 0M1693.2 758.0a3.5 3.5 0 1 0 7 0a3.5 3.5 0 1 0 -7 0M1695.5 758.3a3.5 3.5 0 1 0 7 0a3.5 3.5 0 1 0 -7 0M1697.8 757.5a3.5 3.5 0 1 0 7 0a3.5 3.5 0 1 0 -7 0M1700.1 757.5a3.5 3.5 0 1 0 7 0a3.5 3.5 0 1 0 -7 0M1702.4 758.2a3.5 3.5 0 1 0 7 0a3.5 3.5 0 1 0 -7 0M1704.7 757.9a3.5 3.5 0 1 0 7 0a3.5 3.5 0 1 0 -7 0M1707.0 757.1a3.5 3.5 0 1 0 7 0a3.5 3.5 0 1 0 -7 0M1709.3 757.1a3.5 3.5 0 1 0 7 0a3.5 3.5 0 1 0 -7 0M1711.6 757.1a3.5 3.5 0 1 0 7 0a3.5 3.5 0 1 0 -7 0M1713.9 758.2a3.5 3.5 0 1 0 7 0a3.5 3.5 0 1 0 -7 0M1716.2 758.0a3.5 3.5 0 1 0 7 0a3.5 3.5 0 1 0 -7 0M1718.5 757.1a3.5 3.5 0 1 0 7 0a3.5 3.5 0 1 0 -7 0M1720.8 758.1a3.5 3.5 0 1 0 7 0a3.5 3.5 0 1 0 -7 0M1723.1 758.3a3.5 3.5 0 1 0 7 0a3.5 3.5 0 1 0 -7 0M1725.4 757.8a3.5 3.5 0 1 0 7 0a3.5 3.5 0 1 0 -7 0M1727.7 757.4a3.5 3.5 0 1 0 7 0a3.5 3.5 0 1 0 -7 0M1730.0 757.7a3.5 3.5 0 1 0 7 0a3.5 3.5 0 1 0 -7 0M1732.3 757.1a3.5 3.5 0 1 0 7 0a3.5 3.5 0 1 0 -7 0M1734.6 756.9a3.5 3.5 0 1 0 7 0a3.5 3.5 0 1 0 -7 0M1736.9 758.3a3.5 3.5 0 1 0 7 0a3.5 3.5 0 1 0 -7 0M1739.2 757.8a3.5 3.5 0 1 0 7 0a3.5 3.5 0 1 0 -7 0M1741.5 757.6a3.5 3.5 0 1 0 7 0a3.5 3.5 0 1 0 -7 0M1743.8 758.2a3.5 3.5 0 1 0 7 0a3.5 3.5 0 1 0 -7 0M1746.1 757.5a3.5 3.5 0 1 0 7 0a3.5 3.5 0 1 0 -7 0M1748.4 758.1a3.5 3.5 0 1 0 7 0a3.5 3.5 0 1 0 -7 0M1750.7 758.1a3.5 3.5 0 1 0 7 0a3.5 3.5 0 1 0 -7 0M1753.0 757.2a3.5 3.5 0 1 0 7 0a3.5 3.5 0 1 0 -7 0M1755.3 757.3a3.5 3.5 0 1 0 7 0a3.5 3.5 0 1 0 -7 0M1757.6 757.3a3.5 3.5 0 1 0 7 0a3.5 3.5 0 1 0 -7 0M1759.9 757.2a3.5 3.5 0 1 0 7 0a3.5 3.5 0 1 0 -7 0M1762.2 757.7a3.5 3.5 0 1 0 7 0a3.5 3.5 0 1 0 -7 0M1764.5 757.3a3.5 3.5 0 1 0 7 0a3.5 3.5 0 1 0 -7 0M1766.8 757.5a3.5 3.5 0 1 0 7 0a3.5 3.5 0 1 0 -7 0M1769.1 757.1a3.5 3.5 0 1 0 7 0a3.5 3.5 0 1 0 -7 0M1771.4 758.2a3.5 3.5 0 1 0 7 0a3.5 3.5 0 1 0 -7 0M1773.7 757.4a3.5 3.5 0 1 0 7 0a3.5 3.5 0 1 0 -7 0M1776.0 757.5a3.5 3.5 0 1 0 7 0a3.5 3.5 0 1 0 -7 0M1778.3 757.7a3.5 3.5 0 1 0 7 0a3.5 3.5 0 1 0 -7 0M1780.6 758.2a3.5 3.5 0 1 0 7 0a3.5 3.5 0 1 0 -7 0M1782.9 757.5a3.5 3.5 0 1 0 7 0a3.5 3.5 0 1 0 -7 0M1785.2 758.2a3.5 3.5 0 1 0 7 0a3.5 3.5 0 1 0 -7 0M1787.5 757.6a3.5 3.5 0 1 0 7 0a3.5 3.5 0 1 0 -7 0M1789.8 757.6a3.5 3.5 0 1 0 7 0a3.5 3.5 0 1 0 -7 0M1792.1 757.6a3.5 3.5 0 1 0 7 0a3.5 3.5 0 1 0 -7 0M1794.4 756.9a3.5 3.5 0 1 0 7 0a3.5 3.5 0 1 0 -7 0M1796.7 757.5a3.5 3.5 0 1 0 7 0a3.5 3.5 0 1 0 -7 0M1799.0 757.2a3.5 3.5 0 1 0 7 0a3.5 3.5 0 1 0 -7 0M1801.3 756.9a3.5 3.5 0 1 0 7 0a3.5 3.5 0 1 0 -7 0M1803.6 758.0a3.5 3.5 0 1 0 7 0a3.5 3.5 0 1 0 -7 0M1805.9 757.1a3.5 3.5 0 1 0 7 0a3.5 3.5 0 1 0 -7 0M1808.2 757.6a3.5 3.5 0 1 0 7 0a3.5 3.5 0 1 0 -7 0M1810.5 757.9a3.5 3.5 0 1 0 7 0a3.5 3.5 0 1 0 -7 0M1812.8 757.7a3.5 3.5 0 1 0 7 0a3.5 3.5 0 1 0 -7 0M1815.1 757.4a3.5 3.5 0 1 0 7 0a3.5 3.5 0 1 0 -7 0M1817.4 757.6a3.5 3.5 0 1 0 7 0a3.5 3.5 0 1 0 -7 0M1819.7 757.7a3.5 3.5 0 1 0 7 0a3.5 3.5 0 1 0 -7 0M1822.0 758.0a3.5 3.5 0 1 0 7 0a3.5 3.5 0 1 0 -7 0M1824.3 757.0a3.5 3.5 0 1 0 7 0a3.5 3.5 0 1 0 -7 0M1826.6 757.7a3.5 3.5 0 1 0 7 0a3.5 3.5 0 1 0 -7 0M1828.9 757.2a3.5 3.5 0 1 0 7 0a3.5 3.5 0 1 0 -7 0M1831.2 757.3a3.5 3.5 0 1 0 7 0a3.5 3.5 0 1 0 -7 0M1833.5 758.0a3.5 3.5 0 1 0 7 0a3.5 3.5 0 1 0 -7 0M1835.8 757.6a3.5 3.5 0 1 0 7 0a3.5 3.5 0 1 0 -7 0M1838.1 757.7a3.5 3.5 0 1 0 7 0a3.5 3.5 0 1 0 -7 0M1840.4 758.0a3.5 3.5 0 1 0 7 0a3.5 3.5 0 1 0 -7 0M1842.7 758.2a3.5 3.5 0 1 0 7 0a3.5 3.5 0 1 0 -7 0M1845.0 757.5a3.5 3.5 0 1 0 7 0a3.5 3.5 0 1 0 -7 0M1847.3 757.8a3.5 3.5 0 1 0 7 0a3.5 3.5 0 1 0 -7 0M1849.6 757.6a3.5 3.5 0 1 0 7 0a3.5 3.5 0 1 0 -7 0M1851.9 757.6a3.5 3.5 0 1 0 7 0a3.5 3.5 0 1 0 -7 0M1854.2 757.9a3.5 3.5 0 1 0 7 0a3.5 3.5 0 1 0 -7 0M1856.5 757.5a3.5 3.5 0 1 0 7 0a3.5 3.5 0 1 0 -7 0M1858.8 757.6a3.5 3.5 0 1 0 7 0a3.5 3.5 0 1 0 -7 0M1861.1 757.6a3.5 3.5 0 1 0 7 0a3.5 3.5 0 1 0 -7 0M1863.4 758.2a3.5 3.5 0 1 0 7 0a3.5 3.5 0 1 0 -7 0M1865.7 757.9a3.5 3.5 0 1 0 7 0a3.5 3.5 0 1 0 -7 0M1868.0 758.1a3.5 3.5 0 1 0 7 0a3.5 3.5 0 1 0 -7 0M1870.3 758.2a3.5 3.5 0 1 0 7 0a3.5 3.5 0 1 0 -7 0M1872.6 757.3a3.5 3.5 0 1 0 7 0a3.5 3.5 0 1 0 -7 0M1874.9 757.7a3.5 3.5 0 1 0 7 0a3.5 3.5 0 1 0 -7 0M1877.2 758.2a3.5 3.5 0 1 0 7 0a3.5 3.5 0 1 0 -7 0M1879.5 758.1a3.5 3.5 0 1 0 7 0a3.5 3.5 0 1 0 -7 0M1881.8 757.1a3.5 3.5 0 1 0 7 0a3.5 3.5 0 1 0 -7 0M1884.1 757.1a3.5 3.5 0 1 0 7 0a3.5 3.5 0 1 0 -7 0M1886.4 757.5a3.5 3.5 0 1 0 7 0a3.5 3.5 0 1 0 -7 0M1888.7 757.0a3.5 3.5 0 1 0 7 0a3.5 3.5 0 1 0 -7 0M1891.0 757.2a3.5 3.5 0 1 0 7 0a3.5 3.5 0 1 0 -7 0M1893.3 757.0a3.5 3.5 0 1 0 7 0a3.5 3.5 0 1 0 -7 0M1895.6 757.8a3.5 3.5 0 1 0 7 0a3.5 3.5 0 1 0 -7 0M1897.9 758.0a3.5 3.5 0 1 0 7 0a3.5 3.5 0 1 0 -7 0M1900.2 758.2a3.5 3.5 0 1 0 7 0a3.5 3.5 0 1 0 -7 0M1902.5 757.1a3.5 3.5 0 1 0 7 0a3.5 3.5 0 1 0 -7 0M1904.8 757.9a3.5 3.5 0 1 0 7 0a3.5 3.5 0 1 0 -7 0M1907.1 757.8a3.5 3.5 0 1 0 7 0a3.5 3.5 0 1 0 -7 0M1909.4 757.1a3.5 3.5 0 1 0 7 0a3.5 3.5 0 1 0 -7 0M1911.7 758.1a3.5 3.5 0 1 0 7 0a3.5 3.5 0 1 0 -7 0M1914.0 758.3a3.5 3.5 0 1 0 7 0a3.5 3.5 0 1 0 -7 0M1916.3 757.2a3.5 3.5 0 1 0 7 0a3.5 3.5 0 1 0 -7 0M1918.6 758.2a3.5 3.5 0 1 0 7 0a3.5 3.5 0 1 0 -7 0M1920.9 757.5a3.5 3.5 0 1 0 7 0a3.5 3.5 0 1 0 -7 0M1923.2 757.6a3.5 3.5 0 1 0 7 0a3.5 3.5 0 1 0 -7 0M1925.5 758.3a3.5 3.5 0 1 0 7 0a3.5 3.5 0 1 0 -7 0M1927.8 758.1a3.5 3.5 0 1 0 7 0a3.5 3.5 0 1 0 -7 0M1930.1 757.1a3.5 3.5 0 1 0 7 0a3.5 3.5 0 1 0 -7 0M1932.4 757.5a3.5 3.5 0 1 0 7 0a3.5 3.5 0 1 0 -7 0M1934.7 757.6a3.5 3.5 0 1 0 7 0a3.5 3.5 0 1 0 -7 0M1937.0 757.4a3.5 3.5 0 1 0 7 0a3.5 3.5 0 1 0 -7 0M1939.3 757.2a3.5 3.5 0 1 0 7 0a3.5 3.5 0 1 0 -7 0M1941.6 757.3a3.5 3.5 0 1 0 7 0a3.5 3.5 0 1 0 -7 0M1943.9 757.9a3.5 3.5 0 1 0 7 0a3.5 3.5 0 1 0 -7 0M1946.2 756.9a3.5 3.5 0 1 0 7 0a3.5 3.5 0 1 0 -7 0M1948.5 757.7a3.5 3.5 0 1 0 7 0a3.5 3.5 0 1 0 -7 0M1950.8 757.5a3.5 3.5 0 1 0 7 0a3.5 3.5 0 1 0 -7 0M1953.1 756.9a3.5 3.5 0 1 0 7 0a3.5 3.5 0 1 0 -7 0M1955.4 757.4a3.5 3.5 0 1 0 7 0a3.5 3.5 0 1 0 -7 0M1957.7 757.8a3.5 3.5 0 1 0 7 0a3.5 3.5 0 1 0 -7 0M1960.0 757.6a3.5 3.5 0 1 0 7 0a3.5 3.5 0 1 0 -7 0M1962.3 757.0a3.5 3.5 0 1 0 7 0a3.5 3.5 0 1 0 -7 0M1964.6 758.3a3.5 3.5 0 1 0 7 0a3.5 3.5 0 1 0 -7 0M1966.9 758.0a3.5 3.5 0 1 0 7 0a3.5 3.5 0 1 0 -7 0M1969.2 758.3a3.5 3.5 0 1 0 7 0a3.5 3.5 0 1 0 -7 0M1971.5 757.0a3.5 3.5 0 1 0 7 0a3.5 3.5 0 1 0 -7 0M1973.8 757.3a3.5 3.5 0 1 0 7 0a3.5 3.5 0 1 0 -7 0M1976.1 757.0a3.5 3.5 0 1 0 7 0a3.5 3.5 0 1 0 -7 0M1978.4 758.0a3.5 3.5 0 1 0 7 0a3.5 3.5 0 1 0 -7 0M1980.7 757.3a3.5 3.5 0 1 0 7 0a3.5 3.5 0 1 0 -7 0M1983.0 757.1a3.5 3.5 0 1 0 7 0a3.5 3.5 0 1 0 -7 0M1985.3 757.5a3.5 3.5 0 1 0 7 0a3.5 3.5 0 1 0 -7 0M1987.6 758.2a3.5 3.5 0 1 0 7 0a3.5 3.5 0 1 0 -7 0M1989.9 758.0a3.5 3.5 0 1 0 7 0a3.5 3.5 0 1 0 -7 0M1992.2 757.3a3.5 3.5 0 1 0 7 0a3.5 3.5 0 1 0 -7 0M1994.5 757.1a3.5 3.5 0 1 0 7 0a3.5 3.5 0 1 0 -7 0M1996.8 758.2a3.5 3.5 0 1 0 7 0a3.5 3.5 0 1 0 -7 0M1999.1 757.7a3.5 3.5 0 1 0 7 0a3.5 3.5 0 1 0 -7 0M2001.4 757.9a3.5 3.5 0 1 0 7 0a3.5 3.5 0 1 0 -7 0M2003.7 757.0a3.5 3.5 0 1 0 7 0a3.5 3.5 0 1 0 -7 0M2006.0 757.0a3.5 3.5 0 1 0 7 0a3.5 3.5 0 1 0 -7 0M2008.3 757.9a3.5 3.5 0 1 0 7 0a3.5 3.5 0 1 0 -7 0M2010.6 757.5a3.5 3.5 0 1 0 7 0a3.5 3.5 0 1 0 -7 0M2012.9 757.0a3.5 3.5 0 1 0 7 0a3.5 3.5 0 1 0 -7 0M2015.2 758.2a3.5 3.5 0 1 0 7 0a3.5 3.5 0 1 0 -7 0M2017.5 757.8a3.5 3.5 0 1 0 7 0a3.5 3.5 0 1 0 -7 0M2019.8 758.0a3.5 3.5 0 1 0 7 0a3.5 3.5 0 1 0 -7 0M2022.1 757.0a3.5 3.5 0 1 0 7 0a3.5 3.5 0 1 0 -7 0M2024.4 758.1a3.5 3.5 0 1 0 7 0a3.5 3.5 0 1 0 -7 0M2026.7 757.0a3.5 3.5 0 1 0 7 0a3.5 3.5 0 1 0 -7 0M2029.0 758.1a3.5 3.5 0 1 0 7 0a3.5 3.5 0 1 0 -7 0M2031.3 757.5a3.5 3.5 0 1 0 7 0a3.5 3.5 0 1 0 -7 0M2033.6 757.4a3.5 3.5 0 1 0 7 0a3.5 3.5 0 1 0 -7 0M2035.9 757.7a3.5 3.5 0 1 0 7 0a3.5 3.5 0 1 0 -7 0M2038.2 758.2a3.5 3.5 0 1 0 7 0a3.5 3.5 0 1 0 -7 0M2040.5 757.3a3.5 3.5 0 1 0 7 0a3.5 3.5 0 1 0 -7 0M2042.8 757.1a3.5 3.5 0 1 0 7 0a3.5 3.5 0 1 0 -7 0M2045.1 757.6a3.5 3.5 0 1 0 7 0a3.5 3.5 0 1 0 -7 0M2047.4 757.2a3.5 3.5 0 1 0 7 0a3.5 3.5 0 1 0 -7 0M2049.7 757.1a3.5 3.5 0 1 0 7 0a3.5 3.5 0 1 0 -7 0M2052.0 757.1a3.5 3.5 0 1 0 7 0a3.5 3.5 0 1 0 -7 0M2054.3 757.0a3.5 3.5 0 1 0 7 0a3.5 3.5 0 1 0 -7 0M2056.6 757.2a3.5 3.5 0 1 0 7 0a3.5 3.5 0 1 0 -7 0M2058.9 757.3a3.5 3.5 0 1 0 7 0a3.5 3.5 0 1 0 -7 0M2061.2 757.3a3.5 3.5 0 1 0 7 0a3.5 3.5 0 1 0 -7 0M2063.5 758.0a3.5 3.5 0 1 0 7 0a3.5 3.5 0 1 0 -7 0M2065.8 757.3a3.5 3.5 0 1 0 7 0a3.5 3.5 0 1 0 -7 0M2068.1 757.6a3.5 3.5 0 1 0 7 0a3.5 3.5 0 1 0 -7 0M2070.4 757.1a3.5 3.5 0 1 0 7 0a3.5 3.5 0 1 0 -7 0M2072.7 757.4a3.5 3.5 0 1 0 7 0a3.5 3.5 0 1 0 -7 0M2075.0 756.9a3.5 3.5 0 1 0 7 0a3.5 3.5 0 1 0 -7 0M2077.3 757.3a3.5 3.5 0 1 0 7 0a3.5 3.5 0 1 0 -7 0M2079.6 756.9a3.5 3.5 0 1 0 7 0a3.5 3.5 0 1 0 -7 0M2081.9 757.9a3.5 3.5 0 1 0 7 0a3.5 3.5 0 1 0 -7 0M2084.2 757.7a3.5 3.5 0 1 0 7 0a3.5 3.5 0 1 0 -7 0M2086.5 757.2a3.5 3.5 0 1 0 7 0a3.5 3.5 0 1 0 -7 0M2088.8 757.6a3.5 3.5 0 1 0 7 0a3.5 3.5 0 1 0 -7 0M2091.1 758.2a3.5 3.5 0 1 0 7 0a3.5 3.5 0 1 0 -7 0M2093.4 757.0a3.5 3.5 0 1 0 7 0a3.5 3.5 0 1 0 -7 0M2095.7 758.0a3.5 3.5 0 1 0 7 0a3.5 3.5 0 1 0 -7 0M2098.0 757.5a3.5 3.5 0 1 0 7 0a3.5 3.5 0 1 0 -7 0M2100.3 757.6a3.5 3.5 0 1 0 7 0a3.5 3.5 0 1 0 -7 0M2102.6 758.1a3.5 3.5 0 1 0 7 0a3.5 3.5 0 1 0 -7 0M2104.9 757.5a3.5 3.5 0 1 0 7 0a3.5 3.5 0 1 0 -7 0M2107.2 757.6a3.5 3.5 0 1 0 7 0a3.5 3.5 0 1 0 -7 0M2109.5 757.9a3.5 3.5 0 1 0 7 0a3.5 3.5 0 1 0 -7 0M2111.8 758.3a3.5 3.5 0 1 0 7 0a3.5 3.5 0 1 0 -7 0M2114.1 757.4a3.5 3.5 0 1 0 7 0a3.5 3.5 0 1 0 -7 0M2116.4 758.1a3.5 3.5 0 1 0 7 0a3.5 3.5 0 1 0 -7 0M2118.7 757.9a3.5 3.5 0 1 0 7 0a3.5 3.5 0 1 0 -7 0M2121.0 757.8a3.5 3.5 0 1 0 7 0a3.5 3.5 0 1 0 -7 0M2123.3 757.5a3.5 3.5 0 1 0 7 0a3.5 3.5 0 1 0 -7 0M2125.6 757.4a3.5 3.5 0 1 0 7 0a3.5 3.5 0 1 0 -7 0M2127.9 757.0a3.5 3.5 0 1 0 7 0a3.5 3.5 0 1 0 -7 0M2130.2 757.1a3.5 3.5 0 1 0 7 0a3.5 3.5 0 1 0 -7 0M2132.5 757.0a3.5 3.5 0 1 0 7 0a3.5 3.5 0 1 0 -7 0M2134.8 757.9a3.5 3.5 0 1 0 7 0a3.5 3.5 0 1 0 -7 0M2137.1 757.3a3.5 3.5 0 1 0 7 0a3.5 3.5 0 1 0 -7 0M2139.4 757.1a3.5 3.5 0 1 0 7 0a3.5 3.5 0 1 0 -7 0M2141.7 757.0a3.5 3.5 0 1 0 7 0a3.5 3.5 0 1 0 -7 0M2144.0 758.1a3.5 3.5 0 1 0 7 0a3.5 3.5 0 1 0 -7 0M2146.3 758.1a3.5 3.5 0 1 0 7 0a3.5 3.5 0 1 0 -7 0M2148.6 757.8a3.5 3.5 0 1 0 7 0a3.5 3.5 0 1 0 -7 0M2150.9 757.3a3.5 3.5 0 1 0 7 0a3.5 3.5 0 1 0 -7 0M2153.2 757.2a3.5 3.5 0 1 0 7 0a3.5 3.5 0 1 0 -7 0M2155.5 757.3a3.5 3.5 0 1 0 7 0a3.5 3.5 0 1 0 -7 0M2157.8 757.5a3.5 3.5 0 1 0 7 0a3.5 3.5 0 1 0 -7 0M2160.1 757.1a3.5 3.5 0 1 0 7 0a3.5 3.5 0 1 0 -7 0M2162.4 757.5a3.5 3.5 0 1 0 7 0a3.5 3.5 0 1 0 -7 0M2164.7 757.3a3.5 3.5 0 1 0 7 0a3.5 3.5 0 1 0 -7 0M2167.0 758.2a3.5 3.5 0 1 0 7 0a3.5 3.5 0 1 0 -7 0M2169.3 758.3a3.5 3.5 0 1 0 7 0a3.5 3.5 0 1 0 -7 0M2171.6 757.7a3.5 3.5 0 1 0 7 0a3.5 3.5 0 1 0 -7 0M2173.9 757.2a3.5 3.5 0 1 0 7 0a3.5 3.5 0 1 0 -7 0M2176.2 758.3a3.5 3.5 0 1 0 7 0a3.5 3.5 0 1 0 -7 0M2178.5 757.3a3.5 3.5 0 1 0 7 0a3.5 3.5 0 1 0 -7 0M2180.8 757.4a3.5 3.5 0 1 0 7 0a3.5 3.5 0 1 0 -7 0M2183.1 756.9a3.5 3.5 0 1 0 7 0a3.5 3.5 0 1 0 -7 0M2185.4 757.4a3.5 3.5 0 1 0 7 0a3.5 3.5 0 1 0 -7 0M2187.7 757.6a3.5 3.5 0 1 0 7 0a3.5 3.5 0 1 0 -7 0M2190.0 757.6a3.5 3.5 0 1 0 7 0a3.5 3.5 0 1 0 -7 0M2192.3 757.2a3.5 3.5 0 1 0 7 0a3.5 3.5 0 1 0 -7 0M2194.6 757.6a3.5 3.5 0 1 0 7 0a3.5 3.5 0 1 0 -7 0M2196.9 756.9a3.5 3.5 0 1 0 7 0a3.5 3.5 0 1 0 -7 0M2199.2 757.3a3.5 3.5 0 1 0 7 0a3.5 3.5 0 1 0 -7 0M2201.5 757.0a3.5 3.5 0 1 0 7 0a3.5 3.5 0 1 0 -7 0M2203.8 757.5a3.5 3.5 0 1 0 7 0a3.5 3.5 0 1 0 -7 0M2206.1 757.0a3.5 3.5 0 1 0 7 0a3.5 3.5 0 1 0 -7 0M2208.4 756.9a3.5 3.5 0 1 0 7 0a3.5 3.5 0 1 0 -7 0M2210.7 757.3a3.5 3.5 0 1 0 7 0a3.5 3.5 0 1 0 -7 0M2213.0 757.2a3.5 3.5 0 1 0 7 0a3.5 3.5 0 1 0 -7 0M2215.3 757.7a3.5 3.5 0 1 0 7 0a3.5 3.5 0 1 0 -7 0M2217.6 757.6a3.5 3.5 0 1 0 7 0a3.5 3.5 0 1 0 -7 0M2219.9 758.0a3.5 3.5 0 1 0 7 0a3.5 3.5 0 1 0 -7 0M2222.2 757.8a3.5 3.5 0 1 0 7 0a3.5 3.5 0 1 0 -7 0M2224.5 757.9a3.5 3.5 0 1 0 7 0a3.5 3.5 0 1 0 -7 0M2226.8 758.1a3.5 3.5 0 1 0 7 0a3.5 3.5 0 1 0 -7 0M2229.1 757.4a3.5 3.5 0 1 0 7 0a3.5 3.5 0 1 0 -7 0M2231.4 757.4a3.5 3.5 0 1 0 7 0a3.5 3.5 0 1 0 -7 0M2233.7 758.3a3.5 3.5 0 1 0 7 0a3.5 3.5 0 1 0 -7 0M2236.0 757.1a3.5 3.5 0 1 0 7 0a3.5 3.5 0 1 0 -7 0M2238.3 757.9a3.5 3.5 0 1 0 7 0a3.5 3.5 0 1 0 -7 0M2240.6 757.8a3.5 3.5 0 1 0 7 0a3.5 3.5 0 1 0 -7 0M2242.9 757.0a3.5 3.5 0 1 0 7 0a3.5 3.5 0 1 0 -7 0M2245.2 758.1a3.5 3.5 0 1 0 7 0a3.5 3.5 0 1 0 -7 0M2247.5 758.1a3.5 3.5 0 1 0 7 0a3.5 3.5 0 1 0 -7 0M2249.8 757.8a3.5 3.5 0 1 0 7 0a3.5 3.5 0 1 0 -7 0M2252.1 757.9a3.5 3.5 0 1 0 7 0a3.5 3.5 0 1 0 -7 0M2254.4 758.0a3.5 3.5 0 1 0 7 0a3.5 3.5 0 1 0 -7 0M2256.7 757.1a3.5 3.5 0 1 0 7 0a3.5 3.5 0 1 0 -7 0M2259.0 757.6a3.5 3.5 0 1 0 7 0a3.5 3.5 0 1 0 -7 0M2261.3 757.6a3.5 3.5 0 1 0 7 0a3.5 3.5 0 1 0 -7 0M2263.6 758.1a3.5 3.5 0 1 0 7 0a3.5 3.5 0 1 0 -7 0M2265.9 758.0a3.5 3.5 0 1 0 7 0a3.5 3.5 0 1 0 -7 0M2268.2 758.1a3.5 3.5 0 1 0 7 0a3.5 3.5 0 1 0 -7 0M2270.5 757.7a3.5 3.5 0 1 0 7 0a3.5 3.5 0 1 0 -7 0M2272.8 758.1a3.5 3.5 0 1 0 7 0a3.5 3.5 0 1 0 -7 0M2275.1 757.9a3.5 3.5 0 1 0 7 0a3.5 3.5 0 1 0 -7 0M2277.4 757.9a3.5 3.5 0 1 0 7 0a3.5 3.5 0 1 0 -7 0M2279.7 757.2a3.5 3.5 0 1 0 7 0a3.5 3.5 0 1 0 -7 0M2282.0 756.9a3.5 3.5 0 1 0 7 0a3.5 3.5 0 1 0 -7 0M2284.3 757.1a3.5 3.5 0 1 0 7 0a3.5 3.5 0 1 0 -7 0M2286.6 757.4a3.5 3.5 0 1 0 7 0a3.5 3.5 0 1 0 -7 0M2288.9 757.0a3.5 3.5 0 1 0 7 0a3.5 3.5 0 1 0 -7 0M2291.2 758.1a3.5 3.5 0 1 0 7 0a3.5 3.5 0 1 0 -7 0M2293.5 757.7a3.5 3.5 0 1 0 7 0a3.5 3.5 0 1 0 -7 0M2295.8 757.8a3.5 3.5 0 1 0 7 0a3.5 3.5 0 1 0 -7 0M2298.1 757.8a3.5 3.5 0 1 0 7 0a3.5 3.5 0 1 0 -7 0M2300.4 757.9a3.5 3.5 0 1 0 7 0a3.5 3.5 0 1 0 -7 0M2302.7 757.6a3.5 3.5 0 1 0 7 0a3.5 3.5 0 1 0 -7 0M2305.0 756.9a3.5 3.5 0 1 0 7 0a3.5 3.5 0 1 0 -7 0M2307.3 758.0a3.5 3.5 0 1 0 7 0a3.5 3.5 0 1 0 -7 0M2309.6 757.9a3.5 3.5 0 1 0 7 0a3.5 3.5 0 1 0 -7 0M2311.9 757.6a3.5 3.5 0 1 0 7 0a3.5 3.5 0 1 0 -7 0M2314.2 757.6a3.5 3.5 0 1 0 7 0a3.5 3.5 0 1 0 -7 0M2316.5 757.8a3.5 3.5 0 1 0 7 0a3.5 3.5 0 1 0 -7 0M2318.8 757.0a3.5 3.5 0 1 0 7 0a3.5 3.5 0 1 0 -7 0M2321.1 757.9a3.5 3.5 0 1 0 7 0a3.5 3.5 0 1 0 -7 0M2323.4 757.3a3.5 3.5 0 1 0 7 0a3.5 3.5 0 1 0 -7 0M2325.7 757.0a3.5 3.5 0 1 0 7 0a3.5 3.5 0 1 0 -7 0M2328.0 757.3a3.5 3.5 0 1 0 7 0a3.5 3.5 0 1 0 -7 0M2330.3 757.9a3.5 3.5 0 1 0 7 0a3.5 3.5 0 1 0 -7 0M2332.6 757.2a3.5 3.5 0 1 0 7 0a3.5 3.5 0 1 0 -7 0M2334.9 757.9a3.5 3.5 0 1 0 7 0a3.5 3.5 0 1 0 -7 0M2337.2 758.3a3.5 3.5 0 1 0 7 0a3.5 3.5 0 1 0 -7 0M2339.5 757.6a3.5 3.5 0 1 0 7 0a3.5 3.5 0 1 0 -7 0M2341.8 757.4a3.5 3.5 0 1 0 7 0a3.5 3.5 0 1 0 -7 0M2344.1 757.6a3.5 3.5 0 1 0 7 0a3.5 3.5 0 1 0 -7 0M2346.4 757.9a3.5 3.5 0 1 0 7 0a3.5 3.5 0 1 0 -7 0M2348.7 758.0a3.5 3.5 0 1 0 7 0a3.5 3.5 0 1 0 -7 0M2351.0 757.8a3.5 3.5 0 1 0 7 0a3.5 3.5 0 1 0 -7 0M2353.3 757.8a3.5 3.5 0 1 0 7 0a3.5 3.5 0 1 0 -7 0M2355.6 757.0a3.5 3.5 0 1 0 7 0a3.5 3.5 0 1 0 -7 0M2357.9 757.1a3.5 3.5 0 1 0 7 0a3.5 3.5 0 1 0 -7 0M2360.2 757.3a3.5 3.5 0 1 0 7 0a3.5 3.5 0 1 0 -7 0M2362.5 757.9a3.5 3.5 0 1 0 7 0a3.5 3.5 0 1 0 -7 0M2364.8 757.3a3.5 3.5 0 1 0 7 0a3.5 3.5 0 1 0 -7 0M2367.1 757.7a3.5 3.5 0 1 0 7 0a3.5 3.5 0 1 0 -7 0M2369.4 756.9a3.5 3.5 0 1 0 7 0a3.5 3.5 0 1 0 -7 0M2371.7 757.0a3.5 3.5 0 1 0 7 0a3.5 3.5 0 1 0 -7 0M2374.0 757.3a3.5 3.5 0 1 0 7 0a3.5 3.5 0 1 0 -7 0M2376.3 757.8a3.5 3.5 0 1 0 7 0a3.5 3.5 0 1 0 -7 0M2378.6 757.9a3.5 3.5 0 1 0 7 0a3.5 3.5 0 1 0 -7 0M2380.9 757.8a3.5 3.5 0 1 0 7 0a3.5 3.5 0 1 0 -7 0M2383.2 757.3a3.5 3.5 0 1 0 7 0a3.5 3.5 0 1 0 -7 0M2385.5 757.6a3.5 3.5 0 1 0 7 0a3.5 3.5 0 1 0 -7 0M2387.8 757.6a3.5 3.5 0 1 0 7 0a3.5 3.5 0 1 0 -7 0M2390.1 757.6a3.5 3.5 0 1 0 7 0a3.5 3.5 0 1 0 -7 0M2392.4 757.1a3.5 3.5 0 1 0 7 0a3.5 3.5 0 1 0 -7 0M2394.7 758.2a3.5 3.5 0 1 0 7 0a3.5 3.5 0 1 0 -7 0M2397.0 757.2a3.5 3.5 0 1 0 7 0a3.5 3.5 0 1 0 -7 0M2399.3 758.3a3.5 3.5 0 1 0 7 0a3.5 3.5 0 1 0 -7 0M2401.6 758.2a3.5 3.5 0 1 0 7 0a3.5 3.5 0 1 0 -7 0M2403.9 756.9a3.5 3.5 0 1 0 7 0a3.5 3.5 0 1 0 -7 0M2406.2 757.5a3.5 3.5 0 1 0 7 0a3.5 3.5 0 1 0 -7 0M2408.5 758.0a3.5 3.5 0 1 0 7 0a3.5 3.5 0 1 0 -7 0M2410.8 758.3a3.5 3.5 0 1 0 7 0a3.5 3.5 0 1 0 -7 0M2413.1 757.5a3.5 3.5 0 1 0 7 0a3.5 3.5 0 1 0 -7 0M2415.4 757.3a3.5 3.5 0 1 0 7 0a3.5 3.5 0 1 0 -7 0M2417.7 757.2a3.5 3.5 0 1 0 7 0a3.5 3.5 0 1 0 -7 0M2420.0 758.2a3.5 3.5 0 1 0 7 0a3.5 3.5 0 1 0 -7 0M2422.3 757.2a3.5 3.5 0 1 0 7 0a3.5 3.5 0 1 0 -7 0M2424.6 757.7a3.5 3.5 0 1 0 7 0a3.5 3.5 0 1 0 -7 0M2426.9 757.1a3.5 3.5 0 1 0 7 0a3.5 3.5 0 1 0 -7 0M2429.2 757.6a3.5 3.5 0 1 0 7 0a3.5 3.5 0 1 0 -7 0M2431.5 758.2a3.5 3.5 0 1 0 7 0a3.5 3.5 0 1 0 -7 0M2433.8 757.1a3.5 3.5 0 1 0 7 0a3.5 3.5 0 1 0 -7 0M2436.1 758.0a3.5 3.5 0 1 0 7 0a3.5 3.5 0 1 0 -7 0M2438.4 757.6a3.5 3.5 0 1 0 7 0a3.5 3.5 0 1 0 -7 0M2440.7 758.1a3.5 3.5 0 1 0 7 0a3.5 3.5 0 1 0 -7 0M2443.0 757.9a3.5 3.5 0 1 0 7 0a3.5 3.5 0 1 0 -7 0M2445.3 757.2a3.5 3.5 0 1 0 7 0a3.5 3.5 0 1 0 -7 0M2447.6 758.2a3.5 3.5 0 1 0 7 0a3.5 3.5 0 1 0 -7 0M2449.9 757.6a3.5 3.5 0 1 0 7 0a3.5 3.5 0 1 0 -7 0M2452.2 756.9a3.5 3.5 0 1 0 7 0a3.5 3.5 0 1 0 -7 0M2454.5 756.9a3.5 3.5 0 1 0 7 0a3.5 3.5 0 1 0 -7 0M2456.8 757.6a3.5 3.5 0 1 0 7 0a3.5 3.5 0 1 0 -7 0M2459.1 757.5a3.5 3.5 0 1 0 7 0a3.5 3.5 0 1 0 -7 0M2461.4 757.3a3.5 3.5 0 1 0 7 0a3.5 3.5 0 1 0 -7 0M2463.7 757.1a3.5 3.5 0 1 0 7 0a3.5 3.5 0 1 0 -7 0M2466.0 757.4a3.5 3.5 0 1 0 7 0a3.5 3.5 0 1 0 -7 0M2468.3 757.3a3.5 3.5 0 1 0 7 0a3.5 3.5 0 1 0 -7 0M2470.6 758.1a3.5 3.5 0 1 0 7 0a3.5 3.5 0 1 0 -7 0M2472.9 756.9a3.5 3.5 0 1 0 7 0a3.5 3.5 0 1 0 -7 0M2475.2 758.0a3.5 3.5 0 1 0 7 0a3.5 3.5 0 1 0 -7 0M2477.5 758.1a3.5 3.5 0 1 0 7 0a3.5 3.5 0 1 0 -7 0M2479.8 757.1a3.5 3.5 0 1 0 7 0a3.5 3.5 0 1 0 -7 0M2482.1 758.2a3.5 3.5 0 1 0 7 0a3.5 3.5 0 1 0 -7 0M2484.4 757.9a3.5 3.5 0 1 0 7 0a3.5 3.5 0 1 0 -7 0M2486.7 758.2a3.5 3.5 0 1 0 7 0a3.5 3.5 0 1 0 -7 0M2489.0 757.3a3.5 3.5 0 1 0 7 0a3.5 3.5 0 1 0 -7 0M2491.3 757.4a3.5 3.5 0 1 0 7 0a3.5 3.5 0 1 0 -7 0M2493.6 757.5a3.5 3.5 0 1 0 7 0a3.5 3.5 0 1 0 -7 0M2495.9 758.3a3.5 3.5 0 1 0 7 0a3.5 3.5 0 1 0 -7 0M2498.2 757.7a3.5 3.5 0 1 0 7 0a3.5 3.5 0 1 0 -7 0M2500.5 757.4a3.5 3.5 0 1 0 7 0a3.5 3.5 0 1 0 -7 0M2502.8 757.5a3.5 3.5 0 1 0 7 0a3.5 3.5 0 1 0 -7 0M2505.1 757.3a3.5 3.5 0 1 0 7 0a3.5 3.5 0 1 0 -7 0M2507.4 757.0a3.5 3.5 0 1 0 7 0a3.5 3.5 0 1 0 -7 0M2509.7 757.0a3.5 3.5 0 1 0 7 0a3.5 3.5 0 1 0 -7 0M2512.0 758.1a3.5 3.5 0 1 0 7 0a3.5 3.5 0 1 0 -7 0M2514.3 757.3a3.5 3.5 0 1 0 7 0a3.5 3.5 0 1 0 -7 0M2516.6 758.2a3.5 3.5 0 1 0 7 0a3.5 3.5 0 1 0 -7 0M2518.9 757.2a3.5 3.5 0 1 0 7 0a3.5 3.5 0 1 0 -7 0M2521.2 757.3a3.5 3.5 0 1 0 7 0a3.5 3.5 0 1 0 -7 0M2523.5 757.6a3.5 3.5 0 1 0 7 0a3.5 3.5 0 1 0 -7 0M2525.8 757.2a3.5 3.5 0 1 0 7 0a3.5 3.5 0 1 0 -7 0M2528.1 757.4a3.5 3.5 0 1 0 7 0a3.5 3.5 0 1 0 -7 0M2530.4 758.2a3.5 3.5 0 1 0 7 0a3.5 3.5 0 1 0 -7 0M2532.7 758.1a3.5 3.5 0 1 0 7 0a3.5 3.5 0 1 0 -7 0M2535.0 758.0a3.5 3.5 0 1 0 7 0a3.5 3.5 0 1 0 -7 0M2537.3 757.8a3.5 3.5 0 1 0 7 0a3.5 3.5 0 1 0 -7 0M2539.6 758.2a3.5 3.5 0 1 0 7 0a3.5 3.5 0 1 0 -7 0M2541.9 758.2a3.5 3.5 0 1 0 7 0a3.5 3.5 0 1 0 -7 0M2544.2 757.7a3.5 3.5 0 1 0 7 0a3.5 3.5 0 1 0 -7 0M2546.5 757.9a3.5 3.5 0 1 0 7 0a3.5 3.5 0 1 0 -7 0M2548.8 757.0a3.5 3.5 0 1 0 7 0a3.5 3.5 0 1 0 -7 0M2551.1 757.9a3.5 3.5 0 1 0 7 0a3.5 3.5 0 1 0 -7 0M2553.4 757.5a3.5 3.5 0 1 0 7 0a3.5 3.5 0 1 0 -7 0M2555.7 758.0a3.5 3.5 0 1 0 7 0a3.5 3.5 0 1 0 -7 0M2558.0 757.8a3.5 3.5 0 1 0 7 0a3.5 3.5 0 1 0 -7 0M2560.3 757.3a3.5 3.5 0 1 0 7 0a3.5 3.5 0 1 0 -7 0M2562.6 757.0a3.5 3.5 0 1 0 7 0a3.5 3.5 0 1 0 -7 0M2564.9 758.2a3.5 3.5 0 1 0 7 0a3.5 3.5 0 1 0 -7 0M2567.2 757.1a3.5 3.5 0 1 0 7 0a3.5 3.5 0 1 0 -7 0M2569.5 757.6a3.5 3.5 0 1 0 7 0a3.5 3.5 0 1 0 -7 0M2571.8 757.4a3.5 3.5 0 1 0 7 0a3.5 3.5 0 1 0 -7 0M2574.1 757.3a3.5 3.5 0 1 0 7 0a3.5 3.5 0 1 0 -7 0M2576.4 757.9a3.5 3.5 0 1 0 7 0a3.5 3.5 0 1 0 -7 0M2578.7 758.3a3.5 3.5 0 1 0 7 0a3.5 3.5 0 1 0 -7 0M2581.0 757.3a3.5 3.5 0 1 0 7 0a3.5 3.5 0 1 0 -7 0M2583.3 757.8a3.5 3.5 0 1 0 7 0a3.5 3.5 0 1 0 -7 0M2585.6 757.3a3.5 3.5 0 1 0 7 0a3.5 3.5 0 1 0 -7 0M2587.9 757.7a3.5 3.5 0 1 0 7 0a3.5 3.5 0 1 0 -7 0M2590.2 757.5a3.5 3.5 0 1 0 7 0a3.5 3.5 0 1 0 -7 0M2592.5 757.1a3.5 3.5 0 1 0 7 0a3.5 3.5 0 1 0 -7 0M2594.8 757.1a3.5 3.5 0 1 0 7 0a3.5 3.5 0 1 0 -7 0M2597.1 757.2a3.5 3.5 0 1 0 7 0a3.5 3.5 0 1 0 -7 0M2599.4 758.2a3.5 3.5 0 1 0 7 0a3.5 3.5 0 1 0 -7 0M2601.7 757.6a3.5 3.5 0 1 0 7 0a3.5 3.5 0 1 0 -7 0M2604.0 757.2a3.5 3.5 0 1 0 7 0a3.5 3.5 0 1 0 -7 0M2606.3 758.2a3.5 3.5 0 1 0 7 0a3.5 3.5 0 1 0 -7 0M2608.6 758.3a3.5 3.5 0 1 0 7 0a3.5 3.5 0 1 0 -7 0M2610.9 757.5a3.5 3.5 0 1 0 7 0a3.5 3.5 0 1 0 -7 0M2613.2 757.1a3.5 3.5 0 1 0 7 0a3.5 3.5 0 1 0 -7 0M2615.5 757.2a3.5 3.5 0 1 0 7 0a3.5 3.5 0 1 0 -7 0M2617.8 757.0a3.5 3.5 0 1 0 7 0a3.5 3.5 0 1 0 -7 0M2620.1 757.4a3.5 3.5 0 1 0 7 0a3.5 3.5 0 1 0 -7 0M2622.4 757.0a3.5 3.5 0 1 0 7 0a3.5 3.5 0 1 0 -7 0M2624.7 757.2a3.5 3.5 0 1 0 7 0a3.5 3.5 0 1 0 -7 0M2627.0 757.3a3.5 3.5 0 1 0 7 0a3.5 3.5 0 1 0 -7 0M2629.3 757.7a3.5 3.5 0 1 0 7 0a3.5 3.5 0 1 0 -7 0M2631.6 758.1a3.5 3.5 0 1 0 7 0a3.5 3.5 0 1 0 -7 0M2633.9 757.9a3.5 3.5 0 1 0 7 0a3.5 3.5 0 1 0 -7 0M2636.2 757.5a3.5 3.5 0 1 0 7 0a3.5 3.5 0 1 0 -7 0M2638.5 757.5a3.5 3.5 0 1 0 7 0a3.5 3.5 0 1 0 -7 0M2640.8 757.6a3.5 3.5 0 1 0 7 0a3.5 3.5 0 1 0 -7 0M2643.1 757.4a3.5 3.5 0 1 0 7 0a3.5 3.5 0 1 0 -7 0M2645.4 757.4a3.5 3.5 0 1 0 7 0a3.5 3.5 0 1 0 -7 0M2647.7 757.0a3.5 3.5 0 1 0 7 0a3.5 3.5 0 1 0 -7 0M2650.0 757.3a3.5 3.5 0 1 0 7 0a3.5 3.5 0 1 0 -7 0M2652.3 758.3a3.5 3.5 0 1 0 7 0a3.5 3.5 0 1 0 -7 0M2654.6 757.1a3.5 3.5 0 1 0 7 0a3.5 3.5 0 1 0 -7 0M2656.9 757.6a3.5 3.5 0 1 0 7 0a3.5 3.5 0 1 0 -7 0M2659.2 757.8a3.5 3.5 0 1 0 7 0a3.5 3.5 0 1 0 -7 0M2661.5 758.1a3.5 3.5 0 1 0 7 0a3.5 3.5 0 1 0 -7 0M2663.8 757.2a3.5 3.5 0 1 0 7 0a3.5 3.5 0 1 0 -7 0M2666.1 757.3a3.5 3.5 0 1 0 7 0a3.5 3.5 0 1 0 -7 0M2668.4 757.2a3.5 3.5 0 1 0 7 0a3.5 3.5 0 1 0 -7 0M2670.7 757.5a3.5 3.5 0 1 0 7 0a3.5 3.5 0 1 0 -7 0M2673.0 757.5a3.5 3.5 0 1 0 7 0a3.5 3.5 0 1 0 -7 0M2675.3 758.2a3.5 3.5 0 1 0 7 0a3.5 3.5 0 1 0 -7 0M2677.6 758.1a3.5 3.5 0 1 0 7 0a3.5 3.5 0 1 0 -7 0M2679.9 758.1a3.5 3.5 0 1 0 7 0a3.5 3.5 0 1 0 -7 0M2682.2 756.9a3.5 3.5 0 1 0 7 0a3.5 3.5 0 1 0 -7 0M2684.5 756.9a3.5 3.5 0 1 0 7 0a3.5 3.5 0 1 0 -7 0M2686.8 757.9a3.5 3.5 0 1 0 7 0a3.5 3.5 0 1 0 -7 0M2689.1 758.2a3.5 3.5 0 1 0 7 0a3.5 3.5 0 1 0 -7 0M2691.4 757.6a3.5 3.5 0 1 0 7 0a3.5 3.5 0 1 0 -7 0M2693.7 757.7a3.5 3.5 0 1 0 7 0a3.5 3.5 0 1 0 -7 0M2696.0 756.9a3.5 3.5 0 1 0 7 0a3.5 3.5 0 1 0 -7 0M2698.3 757.4a3.5 3.5 0 1 0 7 0a3.5 3.5 0 1 0 -7 0M2700.6 758.2a3.5 3.5 0 1 0 7 0a3.5 3.5 0 1 0 -7 0M2702.9 758.1a3.5 3.5 0 1 0 7 0a3.5 3.5 0 1 0 -7 0M2705.2 758.1a3.5 3.5 0 1 0 7 0a3.5 3.5 0 1 0 -7 0M2707.5 758.3a3.5 3.5 0 1 0 7 0a3.5 3.5 0 1 0 -7 0M2709.8 757.2a3.5 3.5 0 1 0 7 0a3.5 3.5 0 1 0 -7 0M2712.1 757.1a3.5 3.5 0 1 0 7 0a3.5 3.5 0 1 0 -7 0M2714.4 757.1a3.5 3.5 0 1 0 7 0a3.5 3.5 0 1 0 -7 0M2716.7 757.6a3.5 3.5 0 1 0 7 0a3.5 3.5 0 1 0 -7 0M2719.0 757.9a3.5 3.5 0 1 0 7 0a3.5 3.5 0 1 0 -7 0M2721.3 758.2a3.5 3.5 0 1 0 7 0a3.5 3.5 0 1 0 -7 0M2723.6 757.9a3.5 3.5 0 1 0 7 0a3.5 3.5 0 1 0 -7 0M2725.9 757.8a3.5 3.5 0 1 0 7 0a3.5 3.5 0 1 0 -7 0M2728.2 758.0a3.5 3.5 0 1 0 7 0a3.5 3.5 0 1 0 -7 0M2730.5 757.5a3.5 3.5 0 1 0 7 0a3.5 3.5 0 1 0 -7 0M2732.8 757.7a3.5 3.5 0 1 0 7 0a3.5 3.5 0 1 0 -7 0M2735.1 757.0a3.5 3.5 0 1 0 7 0a3.5 3.5 0 1 0 -7 0M2737.4 758.0a3.5 3.5 0 1 0 7 0a3.5 3.5 0 1 0 -7 0M2739.7 757.2a3.5 3.5 0 1 0 7 0a3.5 3.5 0 1 0 -7 0M2742.0 758.2a3.5 3.5 0 1 0 7 0a3.5 3.5 0 1 0 -7 0M2744.3 757.8a3.5 3.5 0 1 0 7 0a3.5 3.5 0 1 0 -7 0M2746.6 757.3a3.5 3.5 0 1 0 7 0a3.5 3.5 0 1 0 -7 0M2748.9 757.1a3.5 3.5 0 1 0 7 0a3.5 3.5 0 1 0 -7 0M2751.2 757.3a3.5 3.5 0 1 0 7 0a3.5 3.5 0 1 0 -7 0M2753.5 757.8a3.5 3.5 0 1 0 7 0a3.5 3.5 0 1 0 -7 0M2755.8 757.9a3.5 3.5 0 1 0 7 0a3.5 3.5 0 1 0 -7 0M2758.1 757.1a3.5 3.5 0 1 0 7 0a3.5 3.5 0 1 0 -7 0M2760.4 757.0a3.5 3.5 0 1 0 7 0a3.5 3.5 0 1 0 -7 0M2762.7 757.6a3.5 3.5 0 1 0 7 0a3.5 3.5 0 1 0 -7 0M2765.0 757.7a3.5 3.5 0 1 0 7 0a3.5 3.5 0 1 0 -7 0M2767.3 757.4a3.5 3.5 0 1 0 7 0a3.5 3.5 0 1 0 -7 0M2769.6 757.2a3.5 3.5 0 1 0 7 0a3.5 3.5 0 1 0 -7 0M2771.9 757.7a3.5 3.5 0 1 0 7 0a3.5 3.5 0 1 0 -7 0M2774.2 756.9a3.5 3.5 0 1 0 7 0a3.5 3.5 0 1 0 -7 0M2776.5 757.3a3.5 3.5 0 1 0 7 0a3.5 3.5 0 1 0 -7 0M2778.8 757.5a3.5 3.5 0 1 0 7 0a3.5 3.5 0 1 0 -7 0M2781.1 758.2a3.5 3.5 0 1 0 7 0a3.5 3.5 0 1 0 -7 0M2783.4 757.8a3.5 3.5 0 1 0 7 0a3.5 3.5 0 1 0 -7 0M2785.7 758.1a3.5 3.5 0 1 0 7 0a3.5 3.5 0 1 0 -7 0M2788.0 757.6a3.5 3.5 0 1 0 7 0a3.5 3.5 0 1 0 -7 0M2790.3 757.2a3.5 3.5 0 1 0 7 0a3.5 3.5 0 1 0 -7 0M2792.6 757.2a3.5 3.5 0 1 0 7 0a3.5 3.5 0 1 0 -7 0M2794.9 758.2a3.5 3.5 0 1 0 7 0a3.5 3.5 0 1 0 -7 0M2797.2 757.9a3.5 3.5 0 1 0 7 0a3.5 3.5 0 1 0 -7 0M2799.5 757.3a3.5 3.5 0 1 0 7 0a3.5 3.5 0 1 0 -7 0M2801.8 756.9a3.5 3.5 0 1 0 7 0a3.5 3.5 0 1 0 -7 0M2804.1 757.6a3.5 3.5 0 1 0 7 0a3.5 3.5 0 1 0 -7 0M2806.4 757.8a3.5 3.5 0 1 0 7 0a3.5 3.5 0 1 0 -7 0M2808.7 757.5a3.5 3.5 0 1 0 7 0a3.5 3.5 0 1 0 -7 0M2811.0 757.3a3.5 3.5 0 1 0 7 0a3.5 3.5 0 1 0 -7 0M2813.3 757.8a3.5 3.5 0 1 0 7 0a3.5 3.5 0 1 0 -7 0M2815.6 758.2a3.5 3.5 0 1 0 7 0a3.5 3.5 0 1 0 -7 0M2817.9 757.2a3.5 3.5 0 1 0 7 0a3.5 3.5 0 1 0 -7 0M2820.2 756.9a3.5 3.5 0 1 0 7 0a3.5 3.5 0 1 0 -7 0M2822.5 757.4a3.5 3.5 0 1 0 7 0a3.5 3.5 0 1 0 -7 0M2824.8 757.5a3.5 3.5 0 1 0 7 0a3.5 3.5 0 1 0 -7 0M2827.1 757.9a3.5 3.5 0 1 0 7 0a3.5 3.5 0 1 0 -7 0M2829.4 757.2a3.5 3.5 0 1 0 7 0a3.5 3.5 0 1 0 -7 0M2831.7 758.0a3.5 3.5 0 1 0 7 0a3.5 3.5 0 1 0 -7 0M2834.0 757.9a3.5 3.5 0 1 0 7 0a3.5 3.5 0 1 0 -7 0M2836.3 757.6a3.5 3.5 0 1 0 7 0a3.5 3.5 0 1 0 -7 0M2838.6 757.2a3.5 3.5 0 1 0 7 0a3.5 3.5 0 1 0 -7 0M2840.9 758.3a3.5 3.5 0 1 0 7 0a3.5 3.5 0 1 0 -7 0M2843.2 757.3a3.5 3.5 0 1 0 7 0a3.5 3.5 0 1 0 -7 0M2845.5 758.0a3.5 3.5 0 1 0 7 0a3.5 3.5 0 1 0 -7 0M2847.8 757.2a3.5 3.5 0 1 0 7 0a3.5 3.5 0 1 0 -7 0M2850.1 757.2a3.5 3.5 0 1 0 7 0a3.5 3.5 0 1 0 -7 0M2852.4 758.0a3.5 3.5 0 1 0 7 0a3.5 3.5 0 1 0 -7 0M2854.7 757.3a3.5 3.5 0 1 0 7 0a3.5 3.5 0 1 0 -7 0M2857.0 758.2a3.5 3.5 0 1 0 7 0a3.5 3.5 0 1 0 -7 0M2859.3 757.6a3.5 3.5 0 1 0 7 0a3.5 3.5 0 1 0 -7 0M2861.6 757.2a3.5 3.5 0 1 0 7 0a3.5 3.5 0 1 0 -7 0M2863.9 757.2a3.5 3.5 0 1 0 7 0a3.5 3.5 0 1 0 -7 0M2866.2 757.5a3.5 3.5 0 1 0 7 0a3.5 3.5 0 1 0 -7 0M2868.5 757.8a3.5 3.5 0 1 0 7 0a3.5 3.5 0 1 0 -7 0M2870.8 758.2a3.5 3.5 0 1 0 7 0a3.5 3.5 0 1 0 -7 0M2873.1 757.1a3.5 3.5 0 1 0 7 0a3.5 3.5 0 1 0 -7 0M2875.4 757.5a3.5 3.5 0 1 0 7 0a3.5 3.5 0 1 0 -7 0M2877.7 757.2a3.5 3.5 0 1 0 7 0a3.5 3.5 0 1 0 -7 0M2880.0 758.3a3.5 3.5 0 1 0 7 0a3.5 3.5 0 1 0 -7 0M2882.3 757.1a3.5 3.5 0 1 0 7 0a3.5 3.5 0 1 0 -7 0M2884.6 757.0a3.5 3.5 0 1 0 7 0a3.5 3.5 0 1 0 -7 0M2886.9 757.0a3.5 3.5 0 1 0 7 0a3.5 3.5 0 1 0 -7 0M2889.2 757.5a3.5 3.5 0 1 0 7 0a3.5 3.5 0 1 0 -7 0M2891.5 758.2a3.5 3.5 0 1 0 7 0a3.5 3.5 0 1 0 -7 0M2893.8 758.1a3.5 3.5 0 1 0 7 0a3.5 3.5 0 1 0 -7 0M2896.1 757.9a3.5 3.5 0 1 0 7 0a3.5 3.5 0 1 0 -7 0M2898.4 758.3a3.5 3.5 0 1 0 7 0a3.5 3.5 0 1 0 -7 0M2900.7 758.2a3.5 3.5 0 1 0 7 0a3.5 3.5 0 1 0 -7 0M2903.0 757.4a3.5 3.5 0 1 0 7 0a3.5 3.5 0 1 0 -7 0M2905.3 757.2a3.5 3.5 0 1 0 7 0a3.5 3.5 0 1 0 -7 0M2907.6 758.2a3.5 3.5 0 1 0 7 0a3.5 3.5 0 1 0 -7 0M2909.9 757.9a3.5 3.5 0 1 0 7 0a3.5 3.5 0 1 0 -7 0M2912.2 756.9a3.5 3.5 0 1 0 7 0a3.5 3.5 0 1 0 -7 0M2914.5 757.8a3.5 3.5 0 1 0 7 0a3.5 3.5 0 1 0 -7 0M2916.8 757.4a3.5 3.5 0 1 0 7 0a3.5 3.5 0 1 0 -7 0M2919.1 757.4a3.5 3.5 0 1 0 7 0a3.5 3.5 0 1 0 -7 0M2921.4 757.4a3.5 3.5 0 1 0 7 0a3.5 3.5 0 1 0 -7 0M2923.7 757.1a3.5 3.5 0 1 0 7 0a3.5 3.5 0 1 0 -7 0M2926.0 756.9a3.5 3.5 0 1 0 7 0a3.5 3.5 0 1 0 -7 0M2928.3 757.3a3.5 3.5 0 1 0 7 0a3.5 3.5 0 1 0 -7 0M2930.6 757.4a3.5 3.5 0 1 0 7 0a3.5 3.5 0 1 0 -7 0M2932.9 758.2a3.5 3.5 0 1 0 7 0a3.5 3.5 0 1 0 -7 0M2935.2 757.1a3.5 3.5 0 1 0 7 0a3.5 3.5 0 1 0 -7 0M2937.5 758.2a3.5 3.5 0 1 0 7 0a3.5 3.5 0 1 0 -7 0M2939.8 757.2a3.5 3.5 0 1 0 7 0a3.5 3.5 0 1 0 -7 0M2942.1 757.4a3.5 3.5 0 1 0 7 0a3.5 3.5 0 1 0 -7 0M2944.4 758.1a3.5 3.5 0 1 0 7 0a3.5 3.5 0 1 0 -7 0M2946.7 758.1a3.5 3.5 0 1 0 7 0a3.5 3.5 0 1 0 -7 0M2949.0 757.5a3.5 3.5 0 1 0 7 0a3.5 3.5 0 1 0 -7 0M2951.3 757.0a3.5 3.5 0 1 0 7 0a3.5 3.5 0 1 0 -7 0M2953.6 757.6a3.5 3.5 0 1 0 7 0a3.5 3.5 0 1 0 -7 0M2955.9 757.4a3.5 3.5 0 1 0 7 0a3.5 3.5 0 1 0 -7 0M2958.2 758.2a3.5 3.5 0 1 0 7 0a3.5 3.5 0 1 0 -7 0M2960.5 757.2a3.5 3.5 0 1 0 7 0a3.5 3.5 0 1 0 -7 0M2962.8 757.4a3.5 3.5 0 1 0 7 0a3.5 3.5 0 1 0 -7 0M2965.1 758.2a3.5 3.5 0 1 0 7 0a3.5 3.5 0 1 0 -7 0M2967.4 756.9a3.5 3.5 0 1 0 7 0a3.5 3.5 0 1 0 -7 0M2969.7 757.5a3.5 3.5 0 1 0 7 0a3.5 3.5 0 1 0 -7 0M2972.0 758.0a3.5 3.5 0 1 0 7 0a3.5 3.5 0 1 0 -7 0M2974.3 758.0a3.5 3.5 0 1 0 7 0a3.5 3.5 0 1 0 -7 0M2976.6 757.0a3.5 3.5 0 1 0 7 0a3.5 3.5 0 1 0 -7 0M2978.9 756.9a3.5 3.5 0 1 0 7 0a3.5 3.5 0 1 0 -7 0M2981.2 757.0a3.5 3.5 0 1 0 7 0a3.5 3.5 0 1 0 -7 0M2983.5 758.2a3.5 3.5 0 1 0 7 0a3.5 3.5 0 1 0 -7 0M2985.8 757.3a3.5 3.5 0 1 0 7 0a3.5 3.5 0 1 0 -7 0M2988.1 757.9a3.5 3.5 0 1 0 7 0a3.5 3.5 0 1 0 -7 0M2990.4 758.2a3.5 3.5 0 1 0 7 0a3.5 3.5 0 1 0 -7 0M2992.7 757.4a3.5 3.5 0 1 0 7 0a3.5 3.5 0 1 0 -7 0M2995.0 757.3a3.5 3.5 0 1 0 7 0a3.5 3.5 0 1 0 -7 0M2997.3 758.2a3.5 3.5 0 1 0 7 0a3.5 3.5 0 1 0 -7 0M2313.5 760.7a3.5 3.5 0 1 0 7 0a3.5 3.5 0 1 0 -7 0M2442.6 760.0a3.5 3.5 0 1 0 7 0a3.5 3.5 0 1 0 -7 0M2499.5 755.5a3.5 3.5 0 1 0 7 0a3.5 3.5 0 1 0 -7 0M1632.3 760.6a3.5 3.5 0 1 0 7 0a3.5 3.5 0 1 0 -7 0M2044.6 760.8a3.5 3.5 0 1 0 7 0a3.5 3.5 0 1 0 -7 0M2840.8 759.7a3.5 3.5 0 1 0 7 0a3.5 3.5 0 1 0 -7 0M2099.3 754.2a3.5 3.5 0 1 0 7 0a3.5 3.5 0 1 0 -7 0M2529.5 754.5a3.5 3.5 0 1 0 7 0a3.5 3.5 0 1 0 -7 0M1799.3 760.2a3.5 3.5 0 1 0 7 0a3.5 3.5 0 1 0 -7 0M2610.2 754.7a3.5 3.5 0 1 0 7 0a3.5 3.5 0 1 0 -7 0M1912.9 755.1a3.5 3.5 0 1 0 7 0a3.5 3.5 0 1 0 -7 0M1331.6 754.7a3.5 3.5 0 1 0 7 0a3.5 3.5 0 1 0 -7 0M2184.8 753.9a3.5 3.5 0 1 0 7 0a3.5 3.5 0 1 0 -7 0M2787.3 755.1a3.5 3.5 0 1 0 7 0a3.5 3.5 0 1 0 -7 0M1366.0 754.8a3.5 3.5 0 1 0 7 0a3.5 3.5 0 1 0 -7 0M2973.9 759.8a3.5 3.5 0 1 0 7 0a3.5 3.5 0 1 0 -7 0M1452.9 760.5a3.5 3.5 0 1 0 7 0a3.5 3.5 0 1 0 -7 0M2415.1 754.3a3.5 3.5 0 1 0 7 0a3.5 3.5 0 1 0 -7 0M1739.1 760.4a3.5 3.5 0 1 0 7 0a3.5 3.5 0 1 0 -7 0M1879.6 759.8a3.5 3.5 0 1 0 7 0a3.5 3.5 0 1 0 -7 0M1656.4 755.1a3.5 3.5 0 1 0 7 0a3.5 3.5 0 1 0 -7 0M1716.7 755.0a3.5 3.5 0 1 0 7 0a3.5 3.5 0 1 0 -7 0M1920.7 754.7a3.5 3.5 0 1 0 7 0a3.5 3.5 0 1 0 -7 0M1627.9 754.5a3.5 3.5 0 1 0 7 0a3.5 3.5 0 1 0 -7 0M2978.4 755.5a3.5 3.5 0 1 0 7 0a3.5 3.5 0 1 0 -7 0M2786.2 754.2a3.5 3.5 0 1 0 7 0a3.5 3.5 0 1 0 -7 0M2842.3 754.1a3.5 3.5 0 1 0 7 0a3.5 3.5 0 1 0 -7 0M1630.6 755.2a3.5 3.5 0 1 0 7 0a3.5 3.5 0 1 0 -7 0M2946.4 754.0a3.5 3.5 0 1 0 7 0a3.5 3.5 0 1 0 -7 0M1878.3 754.8a3.5 3.5 0 1 0 7 0a3.5 3.5 0 1 0 -7 0M1678.7 755.3a3.5 3.5 0 1 0 7 0a3.5 3.5 0 1 0 -7 0M2276.4 759.8a3.5 3.5 0 1 0 7 0a3.5 3.5 0 1 0 -7 0M1872.1 755.4a3.5 3.5 0 1 0 7 0a3.5 3.5 0 1 0 -7 0M2994.3 754.5a3.5 3.5 0 1 0 7 0a3.5 3.5 0 1 0 -7 0M2375.1 754.2a3.5 3.5 0 1 0 7 0a3.5 3.5 0 1 0 -7 0M2672.4 760.6a3.5 3.5 0 1 0 7 0a3.5 3.5 0 1 0 -7 0M1545.7 759.6a3.5 3.5 0 1 0 7 0a3.5 3.5 0 1 0 -7 0M1272.4 760.4a3.5 3.5 0 1 0 7 0a3.5 3.5 0 1 0 -7 0M1329.0 754.2a3.5 3.5 0 1 0 7 0a3.5 3.5 0 1 0 -7 0M2397.1 754.5a3.5 3.5 0 1 0 7 0a3.5 3.5 0 1 0 -7 0M1378.6 754.9a3.5 3.5 0 1 0 7 0a3.5 3.5 0 1 0 -7 0M1698.6 760.6a3.5 3.5 0 1 0 7 0a3.5 3.5 0 1 0 -7 0M1959.4 755.0a3.5 3.5 0 1 0 7 0a3.5 3.5 0 1 0 -7 0M2223.8 760.2a3.5 3.5 0 1 0 7 0a3.5 3.5 0 1 0 -7 0M1248.9 760.5a3.5 3.5 0 1 0 7 0a3.5 3.5 0 1 0 -7 0M1911.2 759.8a3.5 3.5 0 1 0 7 0a3.5 3.5 0 1 0 -7 0M1226.9 754.8a3.5 3.5 0 1 0 7 0a3.5 3.5 0 1 0 -7 0M2675.1 760.4a3.5 3.5 0 1 0 7 0a3.5 3.5 0 1 0 -7 0M1865.0 755.3a3.5 3.5 0 1 0 7 0a3.5 3.5 0 1 0 -7 0M1308.4 754.5a3.5 3.5 0 1 0 7 0a3.5 3.5 0 1 0 -7 0M2834.1 754.6a3.5 3.5 0 1 0 7 0a3.5 3.5 0 1 0 -7 0M2865.1 755.3a3.5 3.5 0 1 0 7 0a3.5 3.5 0 1 0 -7 0M1720.2 754.0a3.5 3.5 0 1 0 7 0a3.5 3.5 0 1 0 -7 0M1409.9 760.7a3.5 3.5 0 1 0 7 0a3.5 3.5 0 1 0 -7 0M2624.9 755.0a3.5 3.5 0 1 0 7 0a3.5 3.5 0 1 0 -7 0M1218.6 748.9a3.5 3.5 0 1 0 7 0a3.5 3.5 0 1 0 -7 0M1216.8 765.7a3.5 3.5 0 1 0 7 0a3.5 3.5 0 1 0 -7 0M1226.5 760.0a3.5 3.5 0 1 0 7 0a3.5 3.5 0 1 0 -7 0M1314.6 747.3a3.5 3.5 0 1 0 7 0a3.5 3.5 0 1 0 -7 0M1312.3 763.4a3.5 3.5 0 1 0 7 0a3.5 3.5 0 1 0 -7 0M1326.7 762.4a3.5 3.5 0 1 0 7 0a3.5 3.5 0 1 0 -7 0M1329.1 753.1a3.5 3.5 0 1 0 7 0a3.5 3.5 0 1 0 -7 0M1340.7 742.4a3.5 3.5 0 1 0 7 0a3.5 3.5 0 1 0 -7 0M1339.1 772.7a3.5 3.5 0 1 0 7 0a3.5 3.5 0 1 0 -7 0M1454.8 750.1a3.5 3.5 0 1 0 7 0a3.5 3.5 0 1 0 -7 0M1452.7 765.2a3.5 3.5 0 1 0 7 0a3.5 3.5 0 1 0 -7 0M1474.9 750.1a3.5 3.5 0 1 0 7 0a3.5 3.5 0 1 0 -7 0M1472.5 762.9a3.5 3.5 0 1 0 7 0a3.5 3.5 0 1 0 -7 0M1523.8 765.7a3.5 3.5 0 1 0 7 0a3.5 3.5 0 1 0 -7 0M1528.9 753.1a3.5 3.5 0 1 0 7 0a3.5 3.5 0 1 0 -7 0M1600.0 751.2a3.5 3.5 0 1 0 7 0a3.5 3.5 0 1 0 -7 0M1605.8 750.8a3.5 3.5 0 1 0 7 0a3.5 3.5 0 1 0 -7 0M1603.5 762.9a3.5 3.5 0 1 0 7 0a3.5 3.5 0 1 0 -7 0M1613.9 770.3a3.5 3.5 0 1 0 7 0a3.5 3.5 0 1 0 -7 0M1636.1 768.7a3.5 3.5 0 1 0 7 0a3.5 3.5 0 1 0 -7 0M1742.1 752.4a3.5 3.5 0 1 0 7 0a3.5 3.5 0 1 0 -7 0M1737.4 762.9a3.5 3.5 0 1 0 7 0a3.5 3.5 0 1 0 -7 0M1756.7 763.4a3.5 3.5 0 1 0 7 0a3.5 3.5 0 1 0 -7 0M1759.5 752.4a3.5 3.5 0 1 0 7 0a3.5 3.5 0 1 0 -7 0M1856.0 747.1a3.5 3.5 0 1 0 7 0a3.5 3.5 0 1 0 -7 0M1853.8 766.5a3.5 3.5 0 1 0 7 0a3.5 3.5 0 1 0 -7 0M1877.8 762.0a3.5 3.5 0 1 0 7 0a3.5 3.5 0 1 0 -7 0M2069.5 750.8a3.5 3.5 0 1 0 7 0a3.5 3.5 0 1 0 -7 0M2120.7 748.4a3.5 3.5 0 1 0 7 0a3.5 3.5 0 1 0 -7 0M2118.8 766.5a3.5 3.5 0 1 0 7 0a3.5 3.5 0 1 0 -7 0M2098.1 762.0a3.5 3.5 0 1 0 7 0a3.5 3.5 0 1 0 -7 0M2183.1 741.0a3.5 3.5 0 1 0 7 0a3.5 3.5 0 1 0 -7 0M2185.9 739.2a3.5 3.5 0 1 0 7 0a3.5 3.5 0 1 0 -7 0M2187.8 748.4a3.5 3.5 0 1 0 7 0a3.5 3.5 0 1 0 -7 0M2181.8 792.4a3.5 3.5 0 1 0 7 0a3.5 3.5 0 1 0 -7 0M2303.7 773.6a3.5 3.5 0 1 0 7 0a3.5 3.5 0 1 0 -7 0M2306.1 748.4a3.5 3.5 0 1 0 7 0a3.5 3.5 0 1 0 -7 0M2323.6 762.8a3.5 3.5 0 1 0 7 0a3.5 3.5 0 1 0 -7 0M2315.3 761.0a3.5 3.5 0 1 0 7 0a3.5 3.5 0 1 0 -7 0M2328.2 750.0a3.5 3.5 0 1 0 7 0a3.5 3.5 0 1 0 -7 0M2338.8 734.2a3.5 3.5 0 1 0 7 0a3.5 3.5 0 1 0 -7 0M2405.9 752.7a3.5 3.5 0 1 0 7 0a3.5 3.5 0 1 0 -7 0M2458.5 751.8a3.5 3.5 0 1 0 7 0a3.5 3.5 0 1 0 -7 0M2468.7 773.6a3.5 3.5 0 1 0 7 0a3.5 3.5 0 1 0 -7 0M2510.7 771.5a3.5 3.5 0 1 0 7 0a3.5 3.5 0 1 0 -7 0M2512.7 750.3a3.5 3.5 0 1 0 7 0a3.5 3.5 0 1 0 -7 0M2555.5 752.7a3.5 3.5 0 1 0 7 0a3.5 3.5 0 1 0 -7 0M2555.9 753.1a3.5 3.5 0 1 0 7 0a3.5 3.5 0 1 0 -7 0M2553.6 761.0a3.5 3.5 0 1 0 7 0a3.5 3.5 0 1 0 -7 0M2588.5 751.2a3.5 3.5 0 1 0 7 0a3.5 3.5 0 1 0 -7 0M2586.9 764.8a3.5 3.5 0 1 0 7 0a3.5 3.5 0 1 0 -7 0M2604.9 764.8a3.5 3.5 0 1 0 7 0a3.5 3.5 0 1 0 -7 0M2750.0 751.2a3.5 3.5 0 1 0 7 0a3.5 3.5 0 1 0 -7 0M2747.7 766.4a3.5 3.5 0 1 0 7 0a3.5 3.5 0 1 0 -7 0M2726.7 761.7a3.5 3.5 0 1 0 7 0a3.5 3.5 0 1 0 -7 0M2736.5 761.7a3.5 3.5 0 1 0 7 0a3.5 3.5 0 1 0 -7 0M2844.8 740.3a3.5 3.5 0 1 0 7 0a3.5 3.5 0 1 0 -7 0M2842.5 770.3a3.5 3.5 0 1 0 7 0a3.5 3.5 0 1 0 -7 0M2872.7 753.1a3.5 3.5 0 1 0 7 0a3.5 3.5 0 1 0 -7 0M2879.7 753.1a3.5 3.5 0 1 0 7 0a3.5 3.5 0 1 0 -7 0M2960.1 752.4a3.5 3.5 0 1 0 7 0a3.5 3.5 0 1 0 -7 0M2958.2 764.8a3.5 3.5 0 1 0 7 0a3.5 3.5 0 1 0 -7 0M1746.0 449.5a3.5 3.5 0 1 0 7 0a3.5 3.5 0 1 0 -7 0M1212.8 839.3a3.5 3.5 0 1 0 7 0a3.5 3.5 0 1 0 -7 0M1233.1 840.2a3.5 3.5 0 1 0 7 0a3.5 3.5 0 1 0 -7 0M1255.7 839.3a3.5 3.5 0 1 0 7 0a3.5 3.5 0 1 0 -7 0M1277.8 838.1a3.5 3.5 0 1 0 7 0a3.5 3.5 0 1 0 -7 0M1300.6 839.3a3.5 3.5 0 1 0 7 0a3.5 3.5 0 1 0 -7 0M1324.6 838.1a3.5 3.5 0 1 0 7 0a3.5 3.5 0 1 0 -7 0M1344.9 839.3a3.5 3.5 0 1 0 7 0a3.5 3.5 0 1 0 -7 0M1369.8 839.3a3.5 3.5 0 1 0 7 0a3.5 3.5 0 1 0 -7 0M1389.9 839.3a3.5 3.5 0 1 0 7 0a3.5 3.5 0 1 0 -7 0M1414.8 840.2a3.5 3.5 0 1 0 7 0a3.5 3.5 0 1 0 -7 0M1436.9 838.1a3.5 3.5 0 1 0 7 0a3.5 3.5 0 1 0 -7 0M1458.6 839.3a3.5 3.5 0 1 0 7 0a3.5 3.5 0 1 0 -7 0M1481.9 840.2a3.5 3.5 0 1 0 7 0a3.5 3.5 0 1 0 -7 0M1503.8 839.3a3.5 3.5 0 1 0 7 0a3.5 3.5 0 1 0 -7 0M1526.6 836.3a3.5 3.5 0 1 0 7 0a3.5 3.5 0 1 0 -7 0M1548.7 839.3a3.5 3.5 0 1 0 7 0a3.5 3.5 0 1 0 -7 0M1570.8 838.1a3.5 3.5 0 1 0 7 0a3.5 3.5 0 1 0 -7 0M1593.7 841.2a3.5 3.5 0 1 0 7 0a3.5 3.5 0 1 0 -7 0M1615.8 833.2a3.5 3.5 0 1 0 7 0a3.5 3.5 0 1 0 -7 0M1638.9 832.3a3.5 3.5 0 1 0 7 0a3.5 3.5 0 1 0 -7 0M1662.9 839.3a3.5 3.5 0 1 0 7 0a3.5 3.5 0 1 0 -7 0M1685.0 839.3a3.5 3.5 0 1 0 7 0a3.5 3.5 0 1 0 -7 0M1707.8 838.1a3.5 3.5 0 1 0 7 0a3.5 3.5 0 1 0 -7 0M1729.9 839.3a3.5 3.5 0 1 0 7 0a3.5 3.5 0 1 0 -7 0M1752.5 839.3a3.5 3.5 0 1 0 7 0a3.5 3.5 0 1 0 -7 0M1774.7 839.3a3.5 3.5 0 1 0 7 0a3.5 3.5 0 1 0 -7 0M1796.8 838.3a3.5 3.5 0 1 0 7 0a3.5 3.5 0 1 0 -7 0M1819.9 838.3a3.5 3.5 0 1 0 7 0a3.5 3.5 0 1 0 -7 0M1841.7 840.5a3.5 3.5 0 1 0 7 0a3.5 3.5 0 1 0 -7 0M1863.7 839.4a3.5 3.5 0 1 0 7 0a3.5 3.5 0 1 0 -7 0M1886.9 841.4a3.5 3.5 0 1 0 7 0a3.5 3.5 0 1 0 -7 0M1910.9 839.4a3.5 3.5 0 1 0 7 0a3.5 3.5 0 1 0 -7 0M1931.8 839.4a3.5 3.5 0 1 0 7 0a3.5 3.5 0 1 0 -7 0M1953.6 839.4a3.5 3.5 0 1 0 7 0a3.5 3.5 0 1 0 -7 0M1975.6 838.3a3.5 3.5 0 1 0 7 0a3.5 3.5 0 1 0 -7 0M2000.7 838.3a3.5 3.5 0 1 0 7 0a3.5 3.5 0 1 0 -7 0M2022.7 837.3a3.5 3.5 0 1 0 7 0a3.5 3.5 0 1 0 -7 0M2044.0 838.3a3.5 3.5 0 1 0 7 0a3.5 3.5 0 1 0 -7 0M2068.0 842.3a3.5 3.5 0 1 0 7 0a3.5 3.5 0 1 0 -7 0M2089.8 839.4a3.5 3.5 0 1 0 7 0a3.5 3.5 0 1 0 -7 0M2112.9 838.3a3.5 3.5 0 1 0 7 0a3.5 3.5 0 1 0 -7 0M2134.7 839.4a3.5 3.5 0 1 0 7 0a3.5 3.5 0 1 0 -7 0M2157.6 839.4a3.5 3.5 0 1 0 7 0a3.5 3.5 0 1 0 -7 0M2179.8 840.5a3.5 3.5 0 1 0 7 0a3.5 3.5 0 1 0 -7 0M2201.6 839.4a3.5 3.5 0 1 0 7 0a3.5 3.5 0 1 0 -7 0M2224.7 838.3a3.5 3.5 0 1 0 7 0a3.5 3.5 0 1 0 -7 0M2246.5 839.4a3.5 3.5 0 1 0 7 0a3.5 3.5 0 1 0 -7 0M2270.0 839.4a3.5 3.5 0 1 0 7 0a3.5 3.5 0 1 0 -7 0M2291.8 839.4a3.5 3.5 0 1 0 7 0a3.5 3.5 0 1 0 -7 0M2313.8 838.3a3.5 3.5 0 1 0 7 0a3.5 3.5 0 1 0 -7 0M2336.9 851.6a3.5 3.5 0 1 0 7 0a3.5 3.5 0 1 0 -7 0M2358.7 839.4a3.5 3.5 0 1 0 7 0a3.5 3.5 0 1 0 -7 0M2381.8 839.4a3.5 3.5 0 1 0 7 0a3.5 3.5 0 1 0 -7 0M2403.7 841.4a3.5 3.5 0 1 0 7 0a3.5 3.5 0 1 0 -7 0M2425.8 837.3a3.5 3.5 0 1 0 7 0a3.5 3.5 0 1 0 -7 0M2450.8 839.4a3.5 3.5 0 1 0 7 0a3.5 3.5 0 1 0 -7 0M2470.9 826.6a3.5 3.5 0 1 0 7 0a3.5 3.5 0 1 0 -7 0M2493.7 838.3a3.5 3.5 0 1 0 7 0a3.5 3.5 0 1 0 -7 0M2515.9 835.5a3.5 3.5 0 1 0 7 0a3.5 3.5 0 1 0 -7 0M2539.6 839.3a3.5 3.5 0 1 0 7 0a3.5 3.5 0 1 0 -7 0M2562.9 838.1a3.5 3.5 0 1 0 7 0a3.5 3.5 0 1 0 -7 0M2584.6 840.2a3.5 3.5 0 1 0 7 0a3.5 3.5 0 1 0 -7 0M2607.7 840.2a3.5 3.5 0 1 0 7 0a3.5 3.5 0 1 0 -7 0M2629.8 839.3a3.5 3.5 0 1 0 7 0a3.5 3.5 0 1 0 -7 0M2651.5 838.1a3.5 3.5 0 1 0 7 0a3.5 3.5 0 1 0 -7 0M2674.7 839.3a3.5 3.5 0 1 0 7 0a3.5 3.5 0 1 0 -7 0M2696.9 840.2a3.5 3.5 0 1 0 7 0a3.5 3.5 0 1 0 -7 0M2718.5 839.3a3.5 3.5 0 1 0 7 0a3.5 3.5 0 1 0 -7 0M2741.6 838.1a3.5 3.5 0 1 0 7 0a3.5 3.5 0 1 0 -7 0M2763.7 838.1a3.5 3.5 0 1 0 7 0a3.5 3.5 0 1 0 -7 0M2786.5 838.1a3.5 3.5 0 1 0 7 0a3.5 3.5 0 1 0 -7 0M2808.7 839.3a3.5 3.5 0 1 0 7 0a3.5 3.5 0 1 0 -7 0M2830.8 838.1a3.5 3.5 0 1 0 7 0a3.5 3.5 0 1 0 -7 0M2853.4 839.3a3.5 3.5 0 1 0 7 0a3.5 3.5 0 1 0 -7 0M2875.8 839.3a3.5 3.5 0 1 0 7 0a3.5 3.5 0 1 0 -7 0M2900.7 838.1a3.5 3.5 0 1 0 7 0a3.5 3.5 0 1 0 -7 0M2922.8 838.1a3.5 3.5 0 1 0 7 0a3.5 3.5 0 1 0 -7 0M2943.1 839.3a3.5 3.5 0 1 0 7 0a3.5 3.5 0 1 0 -7 0M2965.5 839.3a3.5 3.5 0 1 0 7 0a3.5 3.5 0 1 0 -7 0M2988.0 837.4a3.5 3.5 0 1 0 7 0a3.5 3.5 0 1 0 -7 0M1745.1 864.5a3.5 3.5 0 1 0 7 0a3.5 3.5 0 1 0 -7 0" fill="#4472c4"/>
<rect x="0" y="1131" width="3128" height="29" fill="#e6e6e6" />
<rect x="0" y="1131" width="3128" height="1" fill="#9a9a9a" />
<rect x="0" y="1159" width="3128" height="1" fill="#c6c6c6" />
<rect x="101" y="1132" width="209" height="22" fill="#ffffff" />
<rect x="100" y="1131" width="1" height="23" fill="#9a9a9a" />
<rect x="309" y="1131" width="1" height="23" fill="#9a9a9a" />
<rect x="100" y="1154" width="210" height="2" fill="#1e7145" />
<text x="205" y="1149" font-size="13.1" fill="#1e6e42" text-anchor="middle" font-weight="bold" font-style="normal" >Realistic-X-only - fixed 3ms re</text>
<path d="M31.4 1141l-4.6 3.4 4.6 3.4z" fill="#c3c3c3"/>
<path d="M56 1141l4.6 3.4 -4.6 3.4z" fill="#c3c3c3"/>
<circle cx="351" cy="1145" r="7.3" fill="none" stroke="#6e6e6e" stroke-width="1.1"/>
<path d="M347 1145h8M351 1141v8" stroke="#555" stroke-width="1.4"/>
<rect x="2016" y="1140.2" width="1.7" height="1.7" fill="#999"/>
<rect x="2016" y="1144.2" width="1.7" height="1.7" fill="#999"/>
<rect x="2016" y="1148.2" width="1.7" height="1.7" fill="#999"/>
<rect x="2033.5" y="1138.5" width="1094" height="14" fill="#ffffff" stroke="#b9b9b9"/>
<rect x="2047" y="1139" width="1.3" height="13" fill="#a8a8a8" />
<path d="M2042 1142l-4 3.3 4 3.3z" fill="#555"/>
<rect x="0" y="1160" width="3128" height="21" fill="#f3f2f1" />
<rect x="0" y="1181" width="3128" height="2" fill="#0a0a0a" />
<text x="7.6" y="1174.8" font-size="10.6" fill="#3b3a39" text-anchor="start" font-weight="normal" font-style="normal" >Ready</text>
<g fill="none" stroke="#3b3a39" stroke-width="1"><rect x="58.7" y="1164.8" width="13" height="11"/><path d="M59 1166.8h12.5 M60.5 1169.5h3 M60.5 1172h3"/><circle cx="67.5" cy="1172.5" r="3.3" fill="#f3f2f1"/><circle cx="67.5" cy="1172.5" r="1.2" fill="#3b3a39"/></g>
<g fill="none" stroke="#3b3a39" stroke-width="1"><circle cx="96.1" cy="1164.6" r="1.9"/><path d="M90.4 1166.3Q93 1168.6 94.8 1168.4V1171.8L92.7 1176.7 M101.8 1166.3Q99.2 1168.6 97.4 1168.4V1171"/><path d="M97.3 1171.3L103.6 1177.3 M103.6 1171.3L97.3 1177.3" stroke-width="1.1"/></g>
<text x="108.2" y="1174.8" font-size="11.35" fill="#3b3a39" text-anchor="start" font-weight="normal" font-style="normal" >Accessibility: Investigate</text>
<g fill="none" stroke="#3b3a39" stroke-width="1"><path d="M2937.4 1172.5H2932.6V1164.6H2945.8V1169"/><path d="M2945.40 1172.80L2943.91 1174.25L2943.40 1176.26L2941.40 1175.70L2939.40 1176.26L2938.89 1174.25L2937.40 1172.80L2938.89 1171.35L2939.40 1169.34L2941.40 1169.90L2943.40 1169.34L2943.91 1171.35Z" fill="#f3f2f1"/><circle cx="2941.4" cy="1172.8" r="1" fill="#3b3a39"/></g>
<text x="2949.3" y="1175" font-size="11.3" fill="#3b3a39" text-anchor="start" font-weight="normal" font-style="normal" >Display Settings</text>
<rect x="3050" y="1160" width="40" height="21" fill="#d2d0ce" />
<g fill="none" stroke="#3b3a39" stroke-width="1"><rect x="3063.5" y="1163.5" width="12" height="12"/><path d="M3067.5 1163.5v12M3071.5 1163.5v12M3063.5 1167.5h12M3063.5 1171.5h12"/></g>
<g fill="none" stroke="#3b3a39" stroke-width="1"><rect x="3103.7" y="1163.5" width="13" height="12.3"/><rect x="3106.3" y="1165.9" width="7.6" height="7.4"/><path d="M3108.2 1167.9h4M3108.2 1169.7h4M3108.2 1171.5h4" stroke-width="0.9"/></g>
<rect x="0" y="1131" width="1" height="52" fill="#0a0a0a" />
<rect x="3127" y="1131" width="1" height="52" fill="#0a0a0a" />
<rect x="0" y="0" width="1" height="1183" fill="#141414" />
<rect x="3127" y="4" width="1" height="1179" fill="#141414" />
</svg>
</body></html>
